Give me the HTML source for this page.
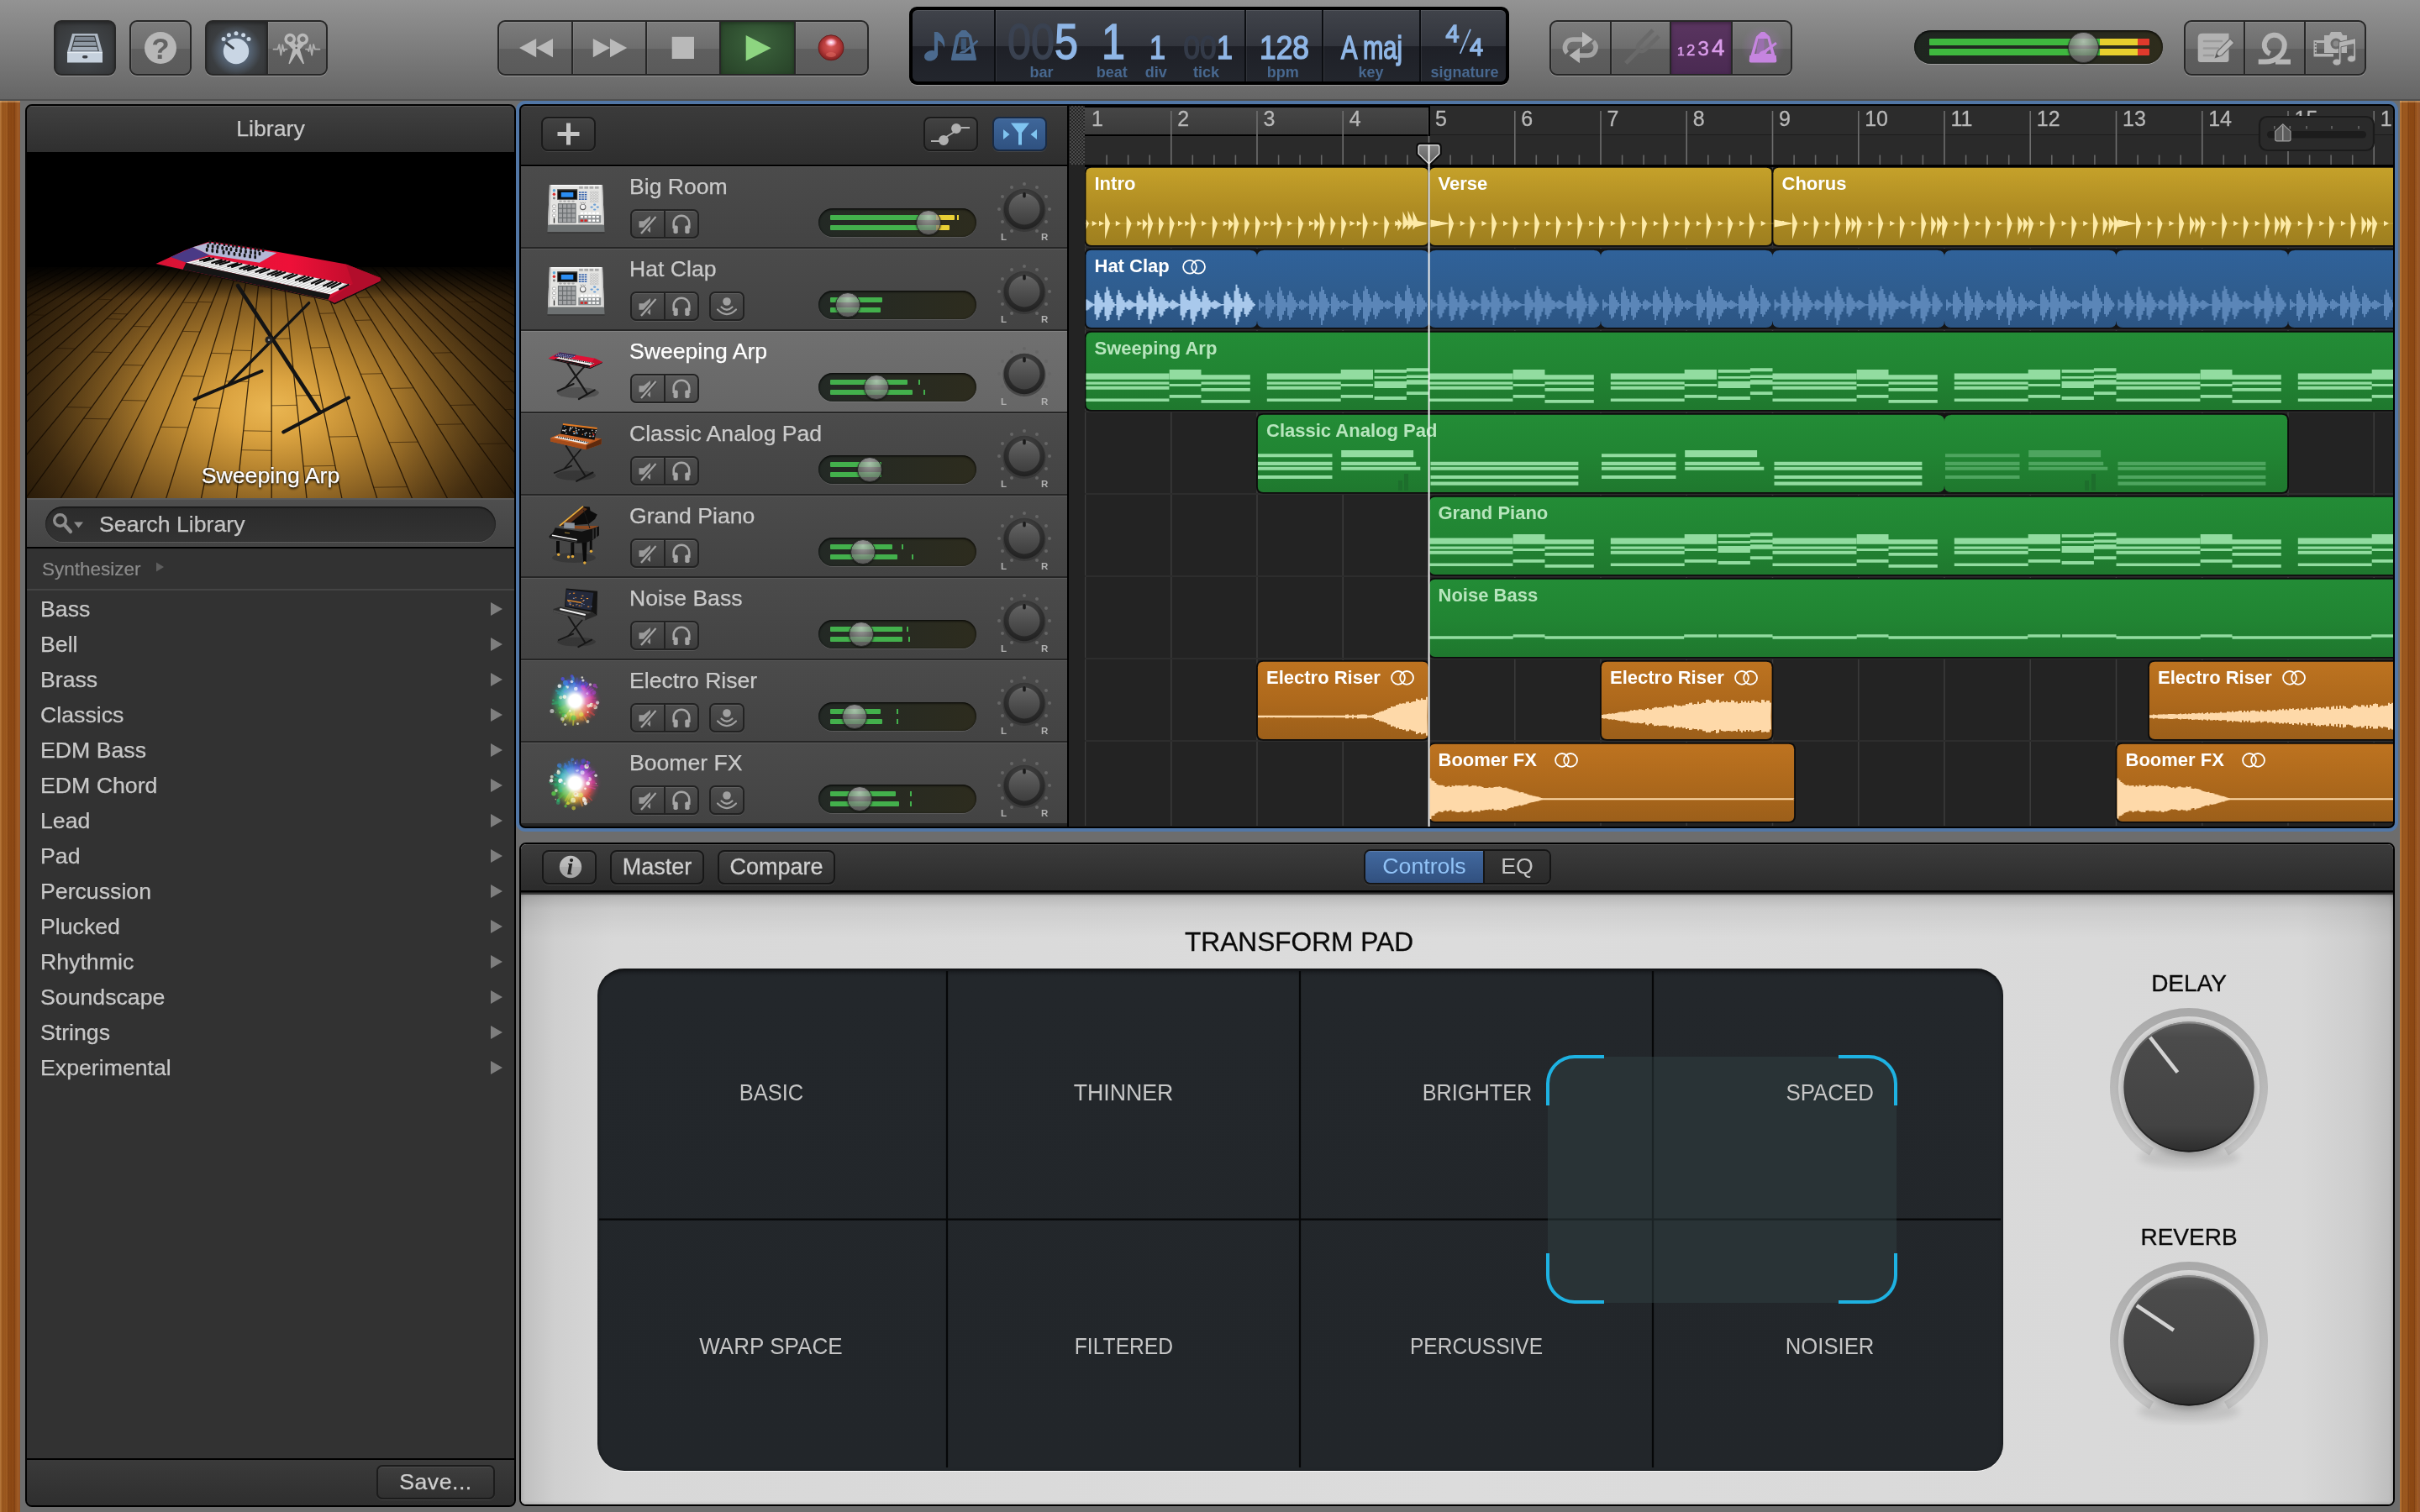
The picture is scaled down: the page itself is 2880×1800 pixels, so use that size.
<!DOCTYPE html>
<html><head><meta charset="utf-8"><title>GarageBand</title>
<style>

*{box-sizing:border-box;margin:0;padding:0}
html,body{width:2880px;height:1800px;overflow:hidden;background:#6d6d6d;font-family:"Liberation Sans",sans-serif;}
.abs{position:absolute}
#root{position:relative;width:2880px;height:1800px;overflow:hidden;background:#6d6d6d;will-change:transform;transform:translateZ(0)}
.wood{position:absolute;top:120px;width:24px;height:1680px;
 background:
  repeating-linear-gradient(90deg,rgba(255,190,110,.08) 0 1px,rgba(0,0,0,0) 1px 3px,rgba(50,15,0,.16) 3px 4px,rgba(0,0,0,0) 4px 7px),
  linear-gradient(90deg,#b07238 0,#a05c20 12%,#93501a 40%,#86420f 62%,#9a5620 85%,#96562a 100%);box-shadow:inset 0 2px 0 rgba(255,220,170,.35)}


#tb{position:absolute;left:0;top:0;width:2880px;height:120px;background:linear-gradient(#939393 0,#8a8a8a 20%,#6a6a6a 90%,#666 100%);border-bottom:2px solid #505050}
.bg{position:absolute;top:24px;height:66px;border:2px solid #272727;border-radius:9px;overflow:hidden;box-shadow:0 1px 0 rgba(255,255,255,.28);display:flex;background:#272727}
.bg>i{display:block;height:100%;margin-right:2px;background:linear-gradient(#7c7c7c 0,#6d6d6d 51%,#5f5f5f 52%,#5a5a5a 100%);box-shadow:inset 0 1px 0 rgba(255,255,255,.12),inset 1px 0 0 rgba(255,255,255,.06)}
.bg>i:last-child{margin-right:0}
.bg>i.on{background:radial-gradient(ellipse at 50% 55%,#464c52 0,#3c3f42 55%,#343536 100%);box-shadow:inset 0 2px 4px rgba(0,0,0,.35)}
.bg>i.play{background:radial-gradient(ellipse at 50% 40%,#3d643d 0,#315232 50%,#274127 100%);box-shadow:inset 0 2px 4px rgba(0,0,0,.3)}
.bg>i.purple{background:linear-gradient(#5a3560,#4a2a52);box-shadow:inset 0 2px 4px rgba(0,0,0,.3)}
#lcd{position:absolute;left:1082px;top:8px;width:714px;height:93px;border-radius:9px;background:#000;box-shadow:0 1px 0 rgba(255,255,255,.3)}
#lcd .in{position:absolute;left:4px;top:4px;right:4px;bottom:4px;border-radius:6px;overflow:hidden;background:linear-gradient(#40434a 0,#32353d 50%,#1e2027 51%,#23262d 100%);box-shadow:inset 0 1px 0 rgba(255,255,255,.1)}
#lcd .dv{position:absolute;top:0;bottom:0;width:2px;background:#0c0e12;box-shadow:1px 0 0 rgba(255,255,255,.07)}
.lcdn{position:absolute;color:#8fb6e6;font-family:"Liberation Sans",sans-serif;white-space:nowrap;transform-origin:0 0;line-height:1}
.lcdd{color:#2d3542}
.lcdl{position:absolute;color:#48688f;font:bold 20px "Liberation Sans",sans-serif;white-space:nowrap;line-height:1;top:73px}
#mv{position:absolute;left:2278px;top:36px;width:296px;height:40px;border-radius:20px;background:linear-gradient(90deg,#1f2520,#232822 45%,#2e2c1c);box-shadow:0 1px 0 rgba(255,255,255,.3),inset 0 1px 3px #000}
#mv b{position:absolute;left:18px;height:7.6px;display:block;background:linear-gradient(90deg,#3fb83f 0,#3fb83f 203px,#e8cf2e 203px,#e8cf2e 248px,#e03a2c 248px,#e03a2c 100%);width:262px;border-radius:1px}
#mv s{position:absolute;left:183px;top:2px;width:37px;height:37px;border-radius:50%;background:radial-gradient(circle at 50% 30%,rgba(190,190,190,.85),rgba(120,120,120,.8) 60%,rgba(90,90,90,.85));border:1px solid #333;box-shadow:0 1px 2px rgba(0,0,0,.6)}


#lib{position:absolute;left:30px;top:124px;width:584px;height:1670px;background:#323232;border:2px solid #000;border-radius:8px;overflow:hidden}
#lib .hd{position:absolute;left:0;top:0;width:100%;height:55px;background:linear-gradient(#404040,#2f2f2f);box-shadow:inset 0 1px 0 rgba(255,255,255,.12);color:#c9c9c9;font-size:26.7px;line-height:55px;text-align:center;-webkit-text-stroke:.25px #c9c9c9}
#lib .img{position:absolute;left:0;top:55px;width:580px;height:412px;background:#000}
#lib .cap{position:absolute;left:0;top:425px;width:580px;text-align:center;color:#fff;font-size:26.7px;line-height:30px;-webkit-text-stroke:.25px #fff;text-shadow:0 2px 3px rgba(0,0,0,.9),0 0 2px rgba(0,0,0,.8)}
#lib .sr{position:absolute;left:0;top:467px;width:100%;height:60px;background:linear-gradient(#4e4e4e,#444);border-top:2px solid #5a5a5a;border-bottom:2px solid #000}
#lib .sf{position:absolute;left:22px;top:8px;width:536px;height:42px;border-radius:21px;background:linear-gradient(#2b2b2b,#333);box-shadow:inset 0 1px 2px rgba(0,0,0,.8),0 1px 0 rgba(255,255,255,.12);color:#c4c4c4;font-size:26.7px;line-height:43px;padding-left:64px;-webkit-text-stroke:.25px #c4c4c4}
#lib .bc{position:absolute;left:0;top:527px;width:100%;height:50px;background:#323232;border-bottom:2px solid #444;color:#8c8c8c;-webkit-text-stroke:.2px #8c8c8c;font-size:22.5px;line-height:50px;padding-left:18px}
#lib .ls{position:absolute;left:0;top:578px;width:100%}
#lib .ls div{height:42px;line-height:43px;font-size:26.7px;color:#c8c8c8;padding-left:16px;position:relative;-webkit-text-stroke:.25px #c8c8c8}
#lib .ls div:after{content:"";position:absolute;left:552px;top:12.5px;border-left:14px solid #7e7e7e;border-top:8px solid transparent;border-bottom:8px solid transparent}
#lib .ft{position:absolute;left:0;top:1610px;width:100%;height:58px;background:linear-gradient(#3a3a3a,#2e2e2e);border-top:2px solid #000}
#lib .sv{position:absolute;left:416px;top:6px;width:141px;height:41px;border:2px solid #1c1c1c;border-radius:7px;background:linear-gradient(#3e3e3e,#303030);box-shadow:0 1px 0 rgba(255,255,255,.1),inset 0 1px 0 rgba(255,255,255,.08);color:#cfcfcf;font-size:26.7px;line-height:37px;text-align:center;letter-spacing:.5px;-webkit-text-stroke:.25px #cfcfcf}


#trk{position:absolute;left:614px;top:120px;width:2240px;height:870px;background:#000;border:4px solid #5277a6;border-radius:11px;overflow:hidden}
#trk .in{position:absolute;left:2px;top:2px;width:2228px;height:858px;background:#232323;border-radius:5px;overflow:hidden}
#th{position:absolute;left:0;top:0;width:650px;height:72px;background:linear-gradient(#3b3b3b,#2e2e2e);border-bottom:2px solid #000;box-shadow:inset 0 1px 0 rgba(255,255,255,.1)}
.hb{position:absolute;top:13px;height:41px;border:2px solid #1a1a1a;border-radius:8px;background:linear-gradient(#424242,#303030);box-shadow:0 1px 0 rgba(255,255,255,.1),inset 0 1px 0 rgba(255,255,255,.08)}
.hb.blue{background:linear-gradient(#3f679a,#2f5180);border-color:#182a44}
.tr{position:absolute;left:0;width:650px;height:98px;background:linear-gradient(#4b4b4b,#434343);box-shadow:inset 0 1px 0 #595959;border-bottom:2px solid #262626}
.tr.sel{background:linear-gradient(#707070,#666);box-shadow:inset 0 1px 0 #828282}
.tr .nm{position:absolute;left:129px;top:9px;font-size:26.6px;line-height:30px;color:#cacaca;white-space:nowrap;-webkit-text-stroke:.25px #cacaca}
.tr.sel .nm{color:#fff;-webkit-text-stroke:.25px #fff}
.ms{position:absolute;top:50.5px;height:35px;border:2px solid #222;border-radius:7px;background:linear-gradient(#4d4d4d,#3d3d3d);box-shadow:0 1px 0 rgba(255,255,255,.1),inset 0 1px 0 rgba(255,255,255,.1)}
.tr.sel .ms{background:linear-gradient(#5a5a5a,#4a4a4a)}
.vs{position:absolute;left:354px;top:50px;width:188px;height:34px;border-radius:17px;background:linear-gradient(90deg,#232925,#2d2c1e);box-shadow:inset 0 1px 3px #000,0 1px 0 rgba(255,255,255,.12)}
.vs b{position:absolute;left:14px;height:6px;display:block;border-radius:1px}
.vs i{position:absolute;width:2px;height:6px;display:block}
.vs s{position:absolute;top:2px;width:30px;height:30px;border-radius:50%;background:radial-gradient(circle at 50% 25%,rgba(200,200,200,.75),rgba(130,130,130,.7) 55%,rgba(95,95,95,.8));border:1px solid #2a2a2a;box-shadow:0 1px 2px rgba(0,0,0,.6)}
.lr{position:absolute;top:78.5px;font:bold 11.5px "Liberation Sans",sans-serif;color:#b2b2b2;line-height:11px}
#dv{position:absolute;left:650px;top:0;width:21px;height:858px;background:#232323;border-left:2px solid #000}
#dv .ck{position:absolute;left:1px;top:0;width:19px;height:70px;background:repeating-conic-gradient(#4a4a4a 0 25%,#262626 0 50%) 0 0/4px 4px}


#sc{position:absolute;left:618px;top:1003px;width:2232px;height:790px;background:#dbdbdb;border:2px solid #000;border-radius:8px;overflow:hidden}
#sc .hd{position:absolute;left:0;top:0;width:100%;height:57px;background:linear-gradient(#3c3c3c,#2b2b2b);border-bottom:2px solid #000;box-shadow:inset 0 1px 0 rgba(255,255,255,.12),0 1px 0 #1c1c1c,0 3px 0 #3a3a3a}
#sc .body{position:absolute;left:0;top:57px;width:100%;height:732px;background:linear-gradient(rgba(0,0,0,.34) 0,rgba(0,0,0,.15) 6px,rgba(0,0,0,.06) 20px,rgba(0,0,0,0) 55px),linear-gradient(90deg,#bebebe 0,#cfcfcf 40px,#d8d8d8 110px,#dcdcdc 50%,#d8d8d8 calc(100% - 110px),#cdcdcd calc(100% - 40px),#bdbdbd 100%);box-shadow:inset 0 -3px 5px rgba(0,0,0,.22)}
.sb{position:absolute;top:7px;height:41px;border:2px solid #171717;border-radius:8px;background:linear-gradient(#404040,#2f2f2f);box-shadow:0 1px 0 rgba(255,255,255,.1),inset 0 1px 0 rgba(255,255,255,.08);color:#d0d0d0;font-size:27px;line-height:37px;text-align:center;-webkit-text-stroke:.3px #d0d0d0}
#seg{position:absolute;left:1003px;top:6px;width:223px;height:42px;border:2px solid #151515;border-radius:8px;overflow:hidden;box-shadow:0 1px 0 rgba(255,255,255,.1);font-size:26.7px;line-height:37px;text-align:center}
#seg .a{position:absolute;left:0;top:0;width:142px;height:100%;background:linear-gradient(#42699f,#31507f);color:#91c3f7;border-right:2px solid #151515;box-shadow:inset 0 1px 0 rgba(255,255,255,.15)}
#seg .b{position:absolute;left:142px;top:0;width:77px;height:100%;background:linear-gradient(#353535,#2a2a2a);color:#c4c4c4}
#pad{position:absolute;left:91px;top:148px;width:1673px;height:598px;border-radius:32px;background:linear-gradient(#1d2024 0,#23272b 10px,#22262a 100%);box-shadow:0 1px 0 rgba(255,255,255,.7),inset 0 2px 5px rgba(0,0,0,.6)}

</style></head>
<body><div id="root">
<div class="wood" style="left:0"></div>
<div class="wood" style="left:2856px"></div>
<div id="tb">
<div class="bg" style="left:64px;width:74px"><i class="on" style="width:70px"></i></div><div class="bg" style="left:154px;width:74px"><i class="" style="width:70px"></i></div><div class="bg" style="left:244px;width:146px"><i class="on" style="width:71px"></i><i class="" style="width:69px"></i></div><div class="bg" style="left:592px;width:442px"><i class="" style="width:86px"></i><i class="" style="width:86px"></i><i class="" style="width:86px"></i><i class="play" style="width:87px"></i><i class="" style="width:85px"></i></div><div class="bg" style="left:1844px;width:289px"><i class="" style="width:70px"></i><i class="" style="width:69px"></i><i class="purple" style="width:71px"></i><i class="" style="width:69px"></i></div><div class="bg" style="left:2599px;width:217px"><i class="" style="width:69px"></i><i class="" style="width:70px"></i><i class="" style="width:70px"></i></div>
<div id="lcd"><div class="in">
<div class="dv" style="left:97px"></div><div class="dv" style="left:395px"></div><div class="dv" style="left:487px"></div><div class="dv" style="left:603px"></div>
</div></div>
<div id="mv"><b style="top:10.4px"></b><b style="top:22px"></b><s></s></div>
<svg class="abs" style="left:0;top:0" width="2880" height="120" viewBox="0 0 2880 120">
<g>
<path d="M86 40 L116 40 L122 62 L80 62 Z" fill="#aeb8c4"/>
<path d="M89 42.5 L113 42.5 L118 61 L84 61 Z" fill="#3f4347"/>
<path d="M89.8 44 H112.2 L113.4 48.5 H88.6 Z" fill="#7f8893"/>
<path d="M88.2 50 H113.8 L115 54.5 H87 Z" fill="#8f99a4"/>
<path d="M86.6 56 H115.4 L116.6 60.5 H85.4 Z" fill="#a3adb9"/>
<rect x="80" y="62" width="42" height="12.5" fill="#c6d1dd"/>
<rect x="80" y="62" width="42" height="1.2" fill="#e3eaf1"/>
<rect x="98" y="66" width="6.4" height="3.6" rx="1.8" fill="#3c4046"/>
</g><circle cx="191" cy="57" r="19" fill="#b7b7b7"/>
<text x="191" y="69.500" text-anchor="middle" style="font:bold 35px 'Liberation Sans',sans-serif" fill="#636363">?</text><g fill="#c9d6e4">
<circle cx="281" cy="60" r="30" fill="url(#kglow)"/>
<circle cx="281" cy="61" r="15.2"/>
<circle cx="266.1" cy="46.4" r="2.5"/><circle cx="272.4" cy="41.8" r="2.5"/><circle cx="281" cy="39.8" r="2.5"/><circle cx="289.6" cy="41.8" r="2.5"/><circle cx="296" cy="46.4" r="2.5"/>
<path d="M269.5 51.2 L277.4 57.4" stroke="#3c434b" stroke-width="3" stroke-linecap="round" fill="none"/>
</g><g fill="#b9b9b9">
<path d="M349.800 50.600 L356.800 58.500 L362 75.800 L360.600 76.200 L351.500 62 L343.600 53.400 Z"/><path d="M 355.6 50.6 L 348.6 58.5 L 343.4 75.8 L 344.8 76.2 L 353.9 62.0 L 361.8 53.4 Z"/>
<path d="M345.200 39.800 a6.800 6.800 0 1 0 .01 0 Z M345.200 43.200 a3.400 3.400 0 1 1 -.01 0 Z" fill-rule="evenodd"/>
<path d="M360.200 39.800 a6.800 6.800 0 1 0 .01 0 Z M360.200 43.200 a3.400 3.400 0 1 1 -.01 0 Z" fill-rule="evenodd"/>
<circle cx="352.700" cy="57" r="1.300" fill="#5e5e5e"/>
</g>
<g stroke="#adadad" stroke-width="1.800" fill="none" stroke-linecap="round" stroke-linejoin="round">
<path d="M325.500 58.700 H330.500 L332.300 53 L334.300 65.500 L336.300 53.500 L338 61 L339 58.700 H341.500"/>
<path d="M364 58.700 H366.400 L367.400 61 L369.100 53.500 L371.100 65.500 L373.100 53 L374.900 58.700 H380.500"/>
</g><g fill="#b9b9b9">
<path d="M618 57 L638.2 45.9 V68.2 Z"/><path d="M638 57 L658 45.9 V68.2 Z"/>
<path d="M726 57 L705.8 45.9 V68.2 Z"/><path d="M746.2 57 L726 45.9 V68.2 Z"/>
<rect x="799.7" y="43.8" width="26.3" height="26.2"/>
</g>
<path d="M887.7 42 L917.7 57.2 L887.7 72.4 Z" fill="#8dd580"/><defs><radialGradient id="rec" cx=".5" cy=".45" r=".55"><stop offset="0" stop-color="#d85a58"/><stop offset=".6" stop-color="#b83c3c"/><stop offset="1" stop-color="#7d1f1f"/></radialGradient>
<radialGradient id="kglow" cx=".5" cy=".5" r=".5"><stop offset=".45" stop-color="#6f88a6" stop-opacity=".55"/><stop offset="1" stop-color="#6f88a6" stop-opacity="0"/></radialGradient><radialGradient id="mglow" cx=".5" cy=".5" r=".5"><stop offset="0" stop-color="#b07ac8" stop-opacity=".45"/><stop offset="1" stop-color="#b07ac8" stop-opacity="0"/></radialGradient><radialGradient id="rech" cx=".5" cy=".5" r=".5"><stop offset="0" stop-color="#fff"/><stop offset=".5" stop-color="#fbd" stop-opacity=".8"/><stop offset="1" stop-color="#f99" stop-opacity="0"/></radialGradient></defs>
<circle cx="989" cy="56.8" r="15" fill="url(#rec)" stroke="#6a1c1c" stroke-width="1"/>
<ellipse cx="989" cy="50.5" rx="7.5" ry="5.5" fill="url(#rech)"/>
<ellipse cx="989" cy="65" rx="6" ry="3" fill="#e06a60" opacity=".55"/><g fill="#4b6a8e">
<ellipse cx="1107.900" cy="66.300" rx="8.200" ry="6" transform="rotate(-18 1107.900 66.300)"/>
<rect x="1111.900" y="38" width="4.200" height="28"/>
<path d="M1116 38.200 C1121 40.500 1125.500 48 1123.800 57 C1122.500 52 1119.500 49 1116 48.200 Z"/>
<path d="M1144.500 36 H1149.500 L1156 42.400 L1162 70.500 Q1162.200 72.100 1160.500 72.100 H1133.500 Q1131.700 72.100 1131.900 70.500 L1137.500 42.400 Z M1141.600 44.200 L1137.500 63.800 H1156 L1152.800 44.200 Z" fill-rule="evenodd"/>
<rect x="1143.700" y="45.700" width="6.200" height="13.600" fill="#3e5876"/>
<path d="M1141.500 63.500 Q1143 60.500 1147.500 60.300 L1162.800 47.600 L1164.300 49.500 L1149 62.800 Q1147 63.800 1141.500 63.500 Z"/>
</g><g font-family="Liberation Sans" fill="#8fb6e6" stroke="#8fb6e6" stroke-width="1.5">
<text x="1199" y="70" font-size="58.5" textLength="56" lengthAdjust="spacingAndGlyphs" fill="#3a4251" stroke="#3a4251">00</text>
<text x="1255" y="70" font-size="58.5" textLength="28" lengthAdjust="spacingAndGlyphs">5</text>
<text x="1311" y="70" font-size="58.5" textLength="28" lengthAdjust="spacingAndGlyphs">1</text>
<text x="1368" y="70" font-size="39" textLength="19" lengthAdjust="spacingAndGlyphs">1</text>
<text x="1408.5" y="70" font-size="39" textLength="39" lengthAdjust="spacingAndGlyphs" fill="#343b49" stroke="#343b49">00</text>
<text x="1448" y="70" font-size="39" textLength="19" lengthAdjust="spacingAndGlyphs">1</text>
<text x="1499" y="70" font-size="39" textLength="59" lengthAdjust="spacingAndGlyphs">128</text>
<text x="1596" y="70" font-size="39" textLength="73" lengthAdjust="spacingAndGlyphs">A maj</text>
<text x="1720.5" y="49.6" font-size="30" textLength="16" lengthAdjust="spacingAndGlyphs">4</text>
<text x="1749" y="65.7" font-size="30" textLength="16" lengthAdjust="spacingAndGlyphs">4</text>
<path d="M1737.7 63.8 L1750 34.8" stroke-width="1.8" fill="none"/>
</g>
<g font-family="Liberation Sans" font-weight="bold" font-size="18" fill="#48688f">
<text x="1225.5" y="91.6">bar</text><text x="1304.8" y="91.6">beat</text><text x="1362.8" y="91.6">div</text><text x="1420" y="91.6">tick</text>
<text x="1507.7" y="91.6">bpm</text><text x="1616.5" y="91.6">key</text><text x="1702.6" y="91.6">signature</text>
</g><g fill="none" stroke="#b4b4b4" stroke-width="5.5" stroke-linejoin="round">
<path d="M1884 47 H1872 a9.5 9.5 0 0 0 -7 16" stroke="#a8a8a8"/>
<path d="M1877 66 H1890 a9.5 9.5 0 0 0 6 -16.5" stroke="#a2a2a2"/>
</g>
<path d="M1883 37.8 L1895.5 47 L1883 56.2 Z" fill="#b9b9b9"/>
<path d="M1880 56.8 L1867.5 66 L1880 75.2 Z" fill="#b4b4b4"/><g transform="translate(1952.500 57.500) rotate(45)" fill="none" stroke="#696969" stroke-width="4.600" stroke-linecap="butt">
<path d="M-5 -25.500 V-2 A5 5 0 0 0 5 -2 V-25.500"/><path d="M0 3 V25" stroke-width="5"/>
</g><g font-family="Liberation Sans" fill="#da9cea" stroke="#da9cea" stroke-width=".5">
<text x="1996" y="65.6" font-size="15.5">1</text><text x="2007" y="65.6" font-size="18.5">2</text><text x="2020.4" y="65.8" font-size="24">3</text><text x="2037" y="65.6" font-size="28">4</text></g><g fill="#c685e0">
<circle cx="2098" cy="56" r="26" fill="url(#mglow)"/>
<path d="M2090 43.5 L2096 38 H2100 L2106 43.5 L2112.500 66 H2083.500 Z M2092.500 46 L2088 64 H2108 L2103.500 46 Z" fill-rule="evenodd"/>
<path d="M2093 46 H2099.500 V64 H2090 Z" fill="#9a6fae"/>
<path d="M2082.200 66 H2113.800 L2114.300 72.500 Q2114.300 74.600 2112.300 74.600 H2083.700 Q2081.700 74.600 2081.700 72.500 Z"/>
<path d="M2093 64.500 L2113 50 L2114.800 52.300 L2098 65.500 Z"/>
<ellipse cx="2098" cy="63" rx="5" ry="2.500" transform="rotate(-25 2098 63)"/>
</g><g>
<path d="M2621 39.700 H2652.500 V70.900 Q2652.500 73.900 2649.500 73.900 H2618.700 Q2615.700 73.900 2615.700 70.900 V45 Q2615.700 39.700 2621 39.700 Z" fill="#b2b2b2"/>
<g stroke="#9a9a9a" stroke-width="2.600" stroke-linecap="round"><path d="M2623 49 H2644"/><path d="M2623 57.500 H2640"/><path d="M2623 66 H2634"/></g>
<path d="M2636.500 68.500 L2639 61 L2654 46 L2659 51 L2644 66 Z" fill="#b9b9b9" stroke="#6a6a6a" stroke-width="1.300"/>
<path d="M2636.500 68.500 L2638 64 L2641 67 Z" fill="#555"/>
</g><g fill="none" stroke="#b6b6b6" stroke-width="6" stroke-linecap="butt"><path d="M2687.700 73.600 H2696 C2708 73.600 2718.800 65 2718.800 53 A12 12 0 1 0 2695 55.800 C2695.800 59.300 2698 62.300 2701.500 64"/><path d="M2708 73.600 H2726"/></g><g fill="#b4b4b4">
<path d="M2753.500 48 H2770 V51 H2757 V64 H2777 V67.500 H2753.500 Z"/>
<g fill="#6a6a6a"><rect x="2754.800" y="50" width="1.800" height="2"/><rect x="2754.800" y="54" width="1.800" height="2"/><rect x="2754.800" y="58" width="1.800" height="2"/><rect x="2754.800" y="62" width="1.800" height="2"/></g>
<path d="M2766 42 H2772 L2774 38 H2786 L2788 42 H2793 V63 H2766 Z"/>
<circle cx="2780" cy="52" r="6.500" fill="#6c6c6c"/><circle cx="2780" cy="52" r="3.500" fill="#8a8a8a"/>
<path d="M2783.500 50 L2803.500 45.500 V70 a5 4 0 1 1 -2.600 -3.500 V52.500 L2786 55.800 V74 a5 4 0 1 1 -2.600 -3.500 Z" stroke="#6a6a6a" stroke-width="1"/>
</g>
</svg>
</div>
<div id="lib">
<div class="hd">Library</div>
<div class="img"><svg class="abs" style="left:0;top:0" width="580" height="412" viewBox="32 181 580 412">
<defs>
<radialGradient id="spot" gradientUnits="userSpaceOnUse" cx="323" cy="485" r="400" gradientTransform="translate(323 485) scale(1 .6) translate(-323 -485)">
<stop offset="0" stop-color="#eab652"/><stop offset=".14" stop-color="#dca441"/><stop offset=".3" stop-color="#b98630"/><stop offset=".48" stop-color="#8b6223"/><stop offset=".7" stop-color="#533814"/><stop offset="1" stop-color="#241707"/></radialGradient>
<linearGradient id="hz" x1="0" y1="314" x2="0" y2="356" gradientUnits="userSpaceOnUse"><stop offset="0" stop-color="#000"/><stop offset=".3" stop-color="#000" stop-opacity=".7"/><stop offset="1" stop-color="#000" stop-opacity="0"/></linearGradient>
<linearGradient id="sd" x1="32" x2="612" y1="0" y2="0" gradientUnits="userSpaceOnUse"><stop offset="0" stop-color="#000" stop-opacity=".3"/><stop offset=".25" stop-color="#000" stop-opacity="0"/><stop offset=".75" stop-color="#000" stop-opacity="0"/><stop offset="1" stop-color="#000" stop-opacity=".3"/></linearGradient>
<linearGradient id="red" x1="0" x2="1" y1="0" y2="0"><stop offset="0" stop-color="#d81335"/><stop offset=".6" stop-color="#ee1038"/><stop offset="1" stop-color="#b00c28"/></linearGradient>
<clipPath id="fc"><rect x="32" y="318" width="580" height="275"/></clipPath>
</defs>
<rect x="32" y="181" width="580" height="412" fill="#000"/>
<rect x="32" y="318" width="580" height="275" fill="url(#spot)"/>
<g clip-path="url(#fc)"><path d="M323.0 190.0 L-2228.6 600 M323.0 190.0 L-2186.1 600 M323.0 190.0 L-2143.5 600 M323.0 190.0 L-2101.0 600 M323.0 190.0 L-2058.5 600 M323.0 190.0 L-2015.9 600 M323.0 190.0 L-1973.4 600 M323.0 190.0 L-1930.9 600 M323.0 190.0 L-1888.3 600 M323.0 190.0 L-1845.8 600 M323.0 190.0 L-1803.3 600 M323.0 190.0 L-1760.8 600 M323.0 190.0 L-1718.2 600 M323.0 190.0 L-1675.7 600 M323.0 190.0 L-1633.2 600 M323.0 190.0 L-1590.6 600 M323.0 190.0 L-1548.1 600 M323.0 190.0 L-1505.6 600 M323.0 190.0 L-1463.0 600 M323.0 190.0 L-1420.5 600 M323.0 190.0 L-1378.0 600 M323.0 190.0 L-1335.5 600 M323.0 190.0 L-1292.9 600 M323.0 190.0 L-1250.4 600 M323.0 190.0 L-1207.9 600 M323.0 190.0 L-1165.3 600 M323.0 190.0 L-1122.8 600 M323.0 190.0 L-1080.3 600 M323.0 190.0 L-1037.8 600 M323.0 190.0 L-995.2 600 M323.0 190.0 L-952.7 600 M323.0 190.0 L-910.2 600 M323.0 190.0 L-867.6 600 M323.0 190.0 L-825.1 600 M323.0 190.0 L-782.6 600 M323.0 190.0 L-740.0 600 M323.0 190.0 L-697.5 600 M323.0 190.0 L-655.0 600 M323.0 190.0 L-612.5 600 M323.0 190.0 L-569.9 600 M323.0 190.0 L-527.4 600 M323.0 190.0 L-484.9 600 M323.0 190.0 L-442.3 600 M323.0 190.0 L-399.8 600 M323.0 190.0 L-357.3 600 M323.0 190.0 L-314.7 600 M323.0 190.0 L-272.2 600 M323.0 190.0 L-229.7 600 M323.0 190.0 L-187.2 600 M323.0 190.0 L-144.6 600 M323.0 190.0 L-102.1 600 M323.0 190.0 L-59.6 600 M323.0 190.0 L-17.0 600 M323.0 190.0 L25.5 600 M323.0 190.0 L68.0 600 M323.0 190.0 L110.6 600 M323.0 190.0 L153.1 600 M323.0 190.0 L195.6 600 M323.0 190.0 L238.1 600 M323.0 190.0 L280.7 600 M323.0 190.0 L323.2 600 M323.0 190.0 L365.7 600 M323.0 190.0 L408.3 600 M323.0 190.0 L450.8 600 M323.0 190.0 L493.3 600 M323.0 190.0 L535.9 600 M323.0 190.0 L578.4 600 M323.0 190.0 L620.9 600 M323.0 190.0 L663.4 600 M323.0 190.0 L706.0 600 M323.0 190.0 L748.5 600 M323.0 190.0 L791.0 600 M323.0 190.0 L833.6 600 M323.0 190.0 L876.1 600 M323.0 190.0 L918.6 600 M323.0 190.0 L961.2 600 M323.0 190.0 L1003.7 600 M323.0 190.0 L1046.2 600 M323.0 190.0 L1088.7 600 M323.0 190.0 L1131.3 600 M323.0 190.0 L1173.8 600 M323.0 190.0 L1216.3 600 M323.0 190.0 L1258.9 600 M323.0 190.0 L1301.4 600 M323.0 190.0 L1343.9 600 M323.0 190.0 L1386.5 600 M323.0 190.0 L1429.0 600 M323.0 190.0 L1471.5 600 M323.0 190.0 L1514.0 600 M323.0 190.0 L1556.6 600 M323.0 190.0 L1599.1 600 M323.0 190.0 L1641.6 600 M323.0 190.0 L1684.2 600 M323.0 190.0 L1726.7 600 M323.0 190.0 L1769.2 600 M323.0 190.0 L1811.7 600 M323.0 190.0 L1854.3 600 M323.0 190.0 L1896.8 600 M323.0 190.0 L1939.3 600 M323.0 190.0 L1981.9 600 M323.0 190.0 L2024.4 600 M323.0 190.0 L2066.9 600 M323.0 190.0 L2109.5 600 M323.0 190.0 L2152.0 600 M323.0 190.0 L2194.5 600 M323.0 190.0 L2237.0 600 M323.0 190.0 L2279.6 600 M323.0 190.0 L2322.1 600 M323.0 190.0 L2364.6 600 M323.0 190.0 L2407.2 600 M323.0 190.0 L2449.7 600 M323.0 190.0 L2492.2 600 M323.0 190.0 L2534.8 600 M323.0 190.0 L2577.3 600 M323.0 190.0 L2619.8 600 M323.0 190.0 L2662.3 600 M323.0 190.0 L2704.9 600 M323.0 190.0 L2747.4 600 M323.0 190.0 L2789.9 600 M323.0 190.0 L2832.5 600 M323.0 190.0 L2875.0 600" stroke="#1c0f02" stroke-width="1.3" fill="none" opacity=".85"/>
<path d="M-208.0 422.7 L-183.8 423.3 M-113.2 381.2 L-93.4 381.8 M-354.8 501.2 L-322.5 501.8 M-52.4 362.4 L-34.5 363.0 M-265.2 473.6 L-235.8 474.2 M-180.5 432.8 L-155.3 433.4 M-9.8 358.9 L7.7 359.5 M-222.4 466.8 L-193.7 467.4 M16.9 354.0 L33.9 354.6 M-160.6 449.1 L-133.7 449.7 M20.2 361.8 L38.0 362.4 M11.4 366.8 L29.7 367.4 M-103.2 446.9 L-76.6 447.5 M-263.4 543.4 L-226.8 544.0 M35.7 374.7 L54.8 375.3 M-1.4 398.6 L20.2 399.2 M-120.6 495.6 L-88.9 496.2 M-232.2 572.5 L-192.5 573.1 M-72.6 483.5 L-42.2 484.1 M-14.3 440.2 L11.7 440.8 M-161.4 579.3 L-121.0 579.9 M116.2 356.2 L133.5 356.8 M-88.8 551.0 L-51.3 551.6 M66.9 414.5 L90.2 415.1 M126.4 379.6 L146.1 380.2 M133.0 373.3 L152.0 373.9 M109.3 419.0 L133.0 419.6 M-4.4 540.9 L32.0 541.5 M158.5 388.4 L179.1 389.0 M78.7 484.6 L109.2 485.2 M99.3 498.3 L131.2 498.9 M145.7 434.4 L171.0 435.0 M144.9 476.5 L174.6 477.1 M217.2 360.1 L234.9 360.7 M235.3 359.3 L252.8 359.9 M217.1 394.4 L238.3 395.0 M191.1 508.3 L224.1 508.9 M216.2 447.6 L243.0 448.2 M251.4 420.4 L275.3 421.0 M231.2 485.5 L261.8 486.1 M268.4 453.8 L295.8 454.4 M276.0 416.9 L299.6 417.5 M287.3 535.7 L323.2 536.3 M289.7 512.8 L323.2 513.4 M323.1 403.6 L345.3 403.0 M323.1 482.9 L353.5 482.3 M352.3 471.0 L381.4 470.4 M361.0 555.0 L398.9 554.4 M391.6 520.1 L425.9 519.5 M369.6 414.1 L392.9 413.5 M444.6 580.2 L485.1 579.6 M380.1 373.3 L399.2 372.7 M429.1 445.3 L455.6 444.7 M462.9 526.7 L497.8 526.1 M422.4 381.5 L442.3 380.9 M464.4 462.4 L492.6 461.8 M425.4 354.4 L442.5 353.8 M519.4 505.4 L552.2 504.8 M569.0 528.5 L604.1 527.9 M535.6 482.5 L565.9 481.9 M626.2 555.1 L664.0 554.5 M514.2 420.3 L538.1 419.7 M623.7 511.9 L657.0 511.3 M601.0 487.6 L631.9 487.0 M628.3 484.2 L658.8 483.6 M597.5 454.5 L624.9 453.9 M730.1 546.6 L767.1 546.0 M758.8 571.7 L798.4 571.1 M657.7 458.8 L685.6 458.2 M714.5 504.4 L747.1 503.8 M551.7 359.6 L569.3 359.0 M759.2 513.4 L792.8 512.8 M773.8 500.3 L806.0 499.7 M894.4 583.3 L935.2 582.7 M871.3 542.3 L907.8 541.7 M670.6 413.3 L693.7 412.7 M734.0 437.6 L759.7 437.0 M846.8 505.5 L879.5 504.9 M606.0 350.4 L622.6 349.8 M791.9 455.8 L819.4 455.2 M687.8 385.3 L708.1 384.7 M665.0 373.1 L684.0 372.5 M656.5 359.1 L674.0 358.5 M992.0 529.4 L1027.2 528.8 M709.1 376.0 L728.4 375.4 M768.0 404.4 L790.2 403.8 M865.2 438.8 L891.0 438.2 M1116.4 554.1 L1154.2 553.5" stroke="#2a1703" stroke-width="1" fill="none" opacity=".6"/></g>
<rect x="32" y="318" width="580" height="275" fill="url(#sd)"/>
<rect x="32" y="316" width="580" height="60" fill="url(#hz)"/>
<!-- stand -->
<g stroke="#141414" stroke-linecap="round" fill="none">
<path d="M231.500 475.400 L311.600 441.800" stroke-width="3.800"/>
<path d="M337.300 514.300 L414.800 473.500" stroke-width="4.200"/>
<path d="M367.700 360.600 L272.500 457" stroke-width="3.400"/>
<path d="M283 340 L381 491" stroke-width="4.600"/>
</g>
<circle cx="320" cy="404.800" r="4.500" fill="#222"/><circle cx="320" cy="404.800" r="1.300" fill="#999"/>
<!-- keyboard -->
<path d="M185.500 315.500 L217.700 321.500 L390.600 358 L398.100 362.500 L452.600 336 L452.600 333 L398 359 L217.700 319 Z" fill="#0e0e0e"/>
<path d="M185.500 314 L202.900 306 L219.600 297.900 L249.300 287.400 L329.900 299.800 L411.700 314.600 L452.600 330.700 L452.600 334.500 L398.100 360.500 L390.600 356.800 L217.700 320.800 Z" fill="url(#red)"/>
<path d="M411.700 314.600 L452.600 330.700 L452.600 334.500 L398.100 360.500 L390.600 356.800 L420 338 Z" fill="#b20d2b"/>
<path d="M202.900 306 L229.500 294.200 L249.300 303.500 L222 312.800 Z" fill="#4a3a86"/>
<path d="M229.500 294.200 L249.300 288.600 L329.300 301 L308.800 312.800 L249.300 303.500 Z" fill="#b4b8d6"/>
<rect x="248.6" y="285.9" width="2.700" height="4.600" rx="1.200" fill="#131313"/><rect x="254.4" y="286.8" width="2.700" height="4.600" rx="1.200" fill="#131313"/><rect x="259.8" y="287.6" width="2.700" height="4.600" rx="1.200" fill="#131313"/><rect x="265.6" y="288.5" width="2.700" height="4.600" rx="1.200" fill="#131313"/><rect x="270.8" y="289.3" width="2.700" height="4.600" rx="1.200" fill="#131313"/><rect x="276.1" y="290.1" width="2.700" height="4.600" rx="1.200" fill="#131313"/><rect x="280.4" y="290.8" width="2.700" height="4.600" rx="1.200" fill="#131313"/><rect x="285.9" y="291.6" width="2.700" height="4.600" rx="1.200" fill="#131313"/><rect x="291.0" y="292.4" width="2.700" height="4.600" rx="1.200" fill="#131313"/><rect x="297.1" y="293.4" width="2.700" height="4.600" rx="1.200" fill="#131313"/><rect x="302.5" y="294.2" width="2.700" height="4.600" rx="1.200" fill="#131313"/><rect x="306.5" y="294.8" width="2.700" height="4.600" rx="1.200" fill="#131313"/><rect x="311.8" y="295.6" width="2.700" height="4.600" rx="1.200" fill="#131313"/><rect x="246.2" y="290.4" width="2.700" height="4.600" rx="1.200" fill="#131313"/><rect x="251.8" y="291.2" width="2.700" height="4.600" rx="1.200" fill="#131313"/><rect x="257.7" y="292.1" width="2.700" height="4.600" rx="1.200" fill="#131313"/><rect x="263.4" y="293.0" width="2.700" height="4.600" rx="1.200" fill="#131313"/><rect x="268.4" y="293.8" width="2.700" height="4.600" rx="1.200" fill="#131313"/><rect x="273.6" y="294.6" width="2.700" height="4.600" rx="1.200" fill="#131313"/><rect x="279.8" y="295.5" width="2.700" height="4.600" rx="1.200" fill="#131313"/><rect x="285.2" y="296.3" width="2.700" height="4.600" rx="1.200" fill="#131313"/><rect x="291.1" y="297.2" width="2.700" height="4.600" rx="1.200" fill="#131313"/><rect x="297.2" y="298.2" width="2.700" height="4.600" rx="1.200" fill="#131313"/><rect x="302.3" y="298.9" width="2.700" height="4.600" rx="1.200" fill="#131313"/><rect x="307.6" y="299.7" width="2.700" height="4.600" rx="1.200" fill="#131313"/><rect x="244.9" y="295.1" width="2.700" height="4.600" rx="1.200" fill="#131313"/><rect x="251.5" y="296.1" width="2.700" height="4.600" rx="1.200" fill="#131313"/><rect x="257.0" y="296.9" width="2.700" height="4.600" rx="1.200" fill="#131313"/><rect x="264.7" y="298.1" width="2.700" height="4.600" rx="1.200" fill="#131313"/><rect x="271.0" y="299.0" width="2.700" height="4.600" rx="1.200" fill="#131313"/><rect x="277.6" y="300.0" width="2.700" height="4.600" rx="1.200" fill="#131313"/><rect x="283.9" y="300.9" width="2.700" height="4.600" rx="1.200" fill="#131313"/><rect x="289.8" y="301.8" width="2.700" height="4.600" rx="1.200" fill="#131313"/><rect x="296.2" y="302.8" width="2.700" height="4.600" rx="1.200" fill="#131313"/><rect x="302.3" y="303.7" width="2.700" height="4.600" rx="1.200" fill="#131313"/>
<path d="M221.400 312.800 L246.900 306 L416.700 338.800 L393.100 350.600 Z" fill="#f4f4f4"/>
<path d="M251.6 306.9 L226.2 313.9 M256.3 307.8 L230.9 314.9 M261.1 308.7 L235.7 315.9 M265.8 309.6 L240.5 317.0 M270.5 310.6 L245.2 318.1 M275.2 311.5 L250.0 319.1 M279.9 312.4 L254.8 320.2 M284.6 313.3 L259.6 321.2 M289.4 314.2 L264.3 322.2 M294.1 315.1 L269.1 323.3 M298.8 316.0 L273.9 324.4 M303.5 316.9 L278.6 325.4 M308.2 317.8 L283.4 326.4 M312.9 318.8 L288.2 327.5 M317.6 319.7 L292.9 328.6 M322.4 320.6 L297.7 329.6 M327.1 321.5 L302.5 330.7 M331.8 322.4 L307.2 331.7 M336.5 323.3 L312.0 332.8 M341.2 324.2 L316.8 333.8 M345.9 325.1 L321.6 334.9 M350.7 326.0 L326.3 335.9 M355.4 327.0 L331.1 337.0 M360.1 327.9 L335.9 338.0 M364.8 328.8 L340.6 339.1 M369.5 329.7 L345.4 340.1 M374.2 330.6 L350.2 341.2 M379.0 331.5 L354.9 342.2 M383.7 332.4 L359.7 343.2 M388.4 333.3 L364.5 344.3 M393.1 334.2 L369.3 345.4 M397.8 335.2 L374.0 346.4 M402.5 336.1 L378.8 347.5 M407.3 337.0 L383.6 348.5 M412.0 337.9 L388.3 349.6" stroke="#9a9a9a" stroke-width=".6" fill="none"/>
<path d="M250.4 306.7 L237.2 310.3 M255.2 307.6 L241.9 311.3 M264.6 309.4 L251.4 313.2 M269.3 310.3 L256.2 314.2 M274.0 311.2 L260.9 315.2 M283.5 313.1 L270.4 317.2 M288.2 314.0 L275.2 318.1 M297.6 315.8 L284.6 320.1 M302.3 316.7 L289.4 321.1 M307.0 317.6 L294.1 322.1 M316.5 319.4 L303.6 324.0 M321.2 320.4 L308.4 325.0 M330.6 322.2 L317.8 327.0 M335.3 323.1 L322.6 328.0 M340.1 324.0 L327.3 329.0 M349.5 325.8 L336.8 330.9 M354.2 326.7 L341.6 331.9 M363.6 328.6 L351.1 333.9 M368.4 329.5 L355.8 334.9 M373.1 330.4 L360.5 335.8 M382.5 332.2 L370.0 337.8 M387.2 333.1 L374.8 338.8 M396.7 334.9 L384.3 340.8 M401.4 335.8 L389.0 341.7 M406.1 336.8 L393.8 342.7 M415.5 338.6 L403.2 344.7" stroke="#0c0c0c" stroke-width="2.200" fill="none"/>
<path d="M217.700 320.800 L221.400 312.800 L393.100 350.600 L390.600 356.800 Z" fill="#151515"/>
</svg></div>
<div class="cap">Sweeping Arp</div>
<div class="sr"><div class="sf">Search Library</div>
<svg class="abs" style="left:30px;top:14px" width="40" height="32" viewBox="0 0 40 32"><circle cx="9.500" cy="10.500" r="6.800" fill="none" stroke="#8d8d8d" stroke-width="3.400"/><path d="M14.500 15.500 L22 24" stroke="#8d8d8d" stroke-width="4.200" stroke-linecap="round"/><path d="M26 12.500 H37 L31.500 19.500 Z" fill="#8d8d8d"/></svg>
</div>
<div class="bc">Synthesizer<svg class="abs" style="left:153px;top:15px" width="12" height="14"><path d="M1 1.500 L10 7 L1 12.500 Z" fill="#5e5e5e"/></svg></div>
<div class="ls"><div>Bass</div><div>Bell</div><div>Brass</div><div>Classics</div><div>EDM Bass</div><div>EDM Chord</div><div>Lead</div><div>Pad</div><div>Percussion</div><div>Plucked</div><div>Rhythmic</div><div>Soundscape</div><div>Strings</div><div>Experimental</div></div>
<div class="ft"><div class="sv">Save...</div></div>
</div>
<div id="trk"><div class="in">
<svg width="0" height="0" style="position:absolute"><defs>
<radialGradient id="pk1" cx=".5" cy=".3" r=".8"><stop offset="0" stop-color="#4a4a4a"/><stop offset=".6" stop-color="#2c2c2c"/><stop offset="1" stop-color="#1c1c1c"/></radialGradient>
<linearGradient id="pk2" x1="0" x2="0" y1="0" y2="1"><stop offset="0" stop-color="#6e6e6e"/><stop offset=".12" stop-color="#5e5e5e"/><stop offset=".6" stop-color="#4c4c4c"/><stop offset="1" stop-color="#3e3e3e"/></linearGradient>
<radialGradient id="spk" cx=".5" cy=".5" r=".5"><stop offset="0" stop-color="#fff"/><stop offset=".36" stop-color="#fff"/><stop offset=".62" stop-color="#fff" stop-opacity=".4"/><stop offset="1" stop-color="#fff" stop-opacity="0"/></radialGradient><filter id="sblur" x="-60%" y="-60%" width="220%" height="220%"><feGaussianBlur stdDeviation="3.5"/></filter>
</defs></svg>
<div id="th">
<div class="hb" style="left:24px;width:65px"></div>
<div class="hb" style="left:479px;width:65px"></div>
<div class="hb blue" style="left:561px;width:65px"></div>
<svg class="abs" style="left:0;top:0" width="650" height="70" viewBox="0 0 650 70">
<path d="M43.500 33.500 H69.500 M56.500 20.500 V46.500" stroke="#c4c4c4" stroke-width="5"/>
<g stroke="#b0b0b0" stroke-width="1.800" fill="#b0b0b0"><path d="M488 42 H498 M498 42 L524 26 M524 26 H534" fill="none"/><circle cx="503" cy="41" r="5"/><circle cx="518" cy="27" r="5"/></g>
<g fill="#7fc4f0"><path d="M583 20.500 H605 L596 32 V46.500 H592 V32 Z"/><path d="M574 28 L581.500 34 L574 40 Z"/><path d="M614 28 L606.500 34 L614 40 Z"/></g>
</svg></div>
<div class="tr" style="top:72px">
<div class="nm">Big Room</div>
<div class="ms" style="left:130px;width:82px"><div class="abs" style="left:38px;top:0;width:2px;height:100%;background:#222"></div></div>
<div class="vs"><b style="top:8px;width:148px;background:linear-gradient(90deg,#43b04c 0,#43b04c 126px,#e8cf35 126px,#e8cf35 100%)"></b><b style="top:20px;width:142px;background:linear-gradient(90deg,#43b04c 0,#43b04c 126px,#e8cf35 126px,#e8cf35 100%)"></b><i style="left:165px;top:8px;background:#e8cf35"></i><s style="left:116.0px"></s></div>
<div class="lr" style="left:571px">L</div><div class="lr" style="left:619px">R</div>
<svg class="abs" style="left:0;top:0" width="650" height="98" viewBox="0 0 650 98"><g transform="translate(150.5 69)"><path d="M-10 -3.800 H-4.500 L3.500 -10 V10 L-4.500 3.800 H-10 Z" fill="#9a9a9a"/><path d="M-7 10.800 L9.500 -8.800" stroke="#454545" stroke-width="5.500"/><path d="M-7.500 11 L10 -9" stroke="#a4a4a4" stroke-width="2.300"/></g><g transform="translate(191 69)" fill="none" stroke="#a6a6a6"><path d="M-9.300 5 V-1 A9.300 9.300 0 0 1 9.300 -1 V5" stroke-width="2.600"/><rect x="-9.500" y="1.500" width="5.200" height="9.500" rx="1.800" fill="#a6a6a6" stroke="none"/><rect x="4.300" y="1.500" width="5.200" height="9.500" rx="1.800" fill="#a6a6a6" stroke="none"/></g><g transform="translate(599 51)"><g>
<circle cx="-15.0" cy="26.0" r="2" fill="#666"/><circle cx="-26.0" cy="15.0" r="2" fill="#666"/><circle cx="-30.0" cy="-0.0" r="2" fill="#666"/><circle cx="-26.0" cy="-15.0" r="2" fill="#666"/><circle cx="-15.0" cy="-26.0" r="2" fill="#666"/><circle cx="0.0" cy="-30.0" r="2" fill="#666"/><circle cx="15.0" cy="-26.0" r="2" fill="#666"/><circle cx="26.0" cy="-15.0" r="2" fill="#666"/><circle cx="30.0" cy="-0.0" r="2" fill="#666"/><circle cx="26.0" cy="15.0" r="2" fill="#666"/><circle cx="15.0" cy="26.0" r="2" fill="#666"/>
<circle cx="0" cy="1.500" r="25.500" fill="#2e2e2e" opacity=".55"/>
<circle cx="0" cy="0" r="24.200" fill="url(#pk1)"/>
<circle cx="0" cy="0" r="18.500" fill="url(#pk2)"/>
<rect x="-1.800" y="-20" width="3.600" height="6.500" rx="1.700" fill="#1b1b1b"/>
</g></g><g transform="translate(-620 -198)"><path d="M652 267.400 L719 267.400 L719.600 276.300 L651.400 276.300 Z" fill="#6d7172"/><path d="M651.400 276.300 H719.600 V277.800 H651.400 Z" fill="#2c2c2c" opacity=".6"/><path d="M654 220 L717 220 L719 267.400 L652 267.400 Z" fill="#e4e4e2"/><path d="M654 220 L717 220 L717.100 221.500 L653.900 221.500 Z" fill="#fafafa"/><path d="M654 220 L655.800 220 L654 267.400 L652 267.400 Z" fill="#b9b9b9"/><path d="M717 220 L719 267.400 L717.300 267.400 L715.600 220 Z" fill="#c4c4c4"/><rect x="663.200" y="225.200" width="24" height="12.600" fill="#3a3a38"/><rect x="664.200" y="226.800" width="22" height="10" fill="#0d0d0d"/><rect x="667.800" y="228.900" width="14.500" height="5.800" fill="#2b8df2"/><rect x="689.2" y="221.900" width="4.600" height="2.800" fill="#a9a9a9"/><rect x="695.4" y="221.900" width="4.600" height="2.800" fill="#a9a9a9"/><rect x="701.6" y="221.900" width="4.600" height="2.800" fill="#a9a9a9"/><rect x="708" y="221.900" width="4.600" height="2.800" fill="#a9a9a9"/><circle cx="659.400" cy="226.800" r="1.700" fill="#58a8d8"/><circle cx="659.400" cy="231.200" r="1.700" fill="#d83030"/><circle cx="659.400" cy="236" r="1.400" fill="#777"/><rect x="657.500" y="244" width="4" height="3" rx="1.200" fill="#fff" stroke="#888" stroke-width=".6"/><rect x="657.500" y="249.5" width="4" height="3" rx="1.200" fill="#fff" stroke="#888" stroke-width=".6"/><rect x="657.500" y="255" width="4" height="3" rx="1.200" fill="#fff" stroke="#888" stroke-width=".6"/><rect x="658.800" y="259.500" width="1.400" height="6" fill="#333"/><ellipse cx="667" cy="239.600" rx="1.900" ry="1.100" fill="#aaa"/><ellipse cx="672" cy="239.600" rx="1.900" ry="1.100" fill="#aaa"/><ellipse cx="677" cy="239.600" rx="1.900" ry="1.100" fill="#aaa"/><ellipse cx="682" cy="239.600" rx="1.900" ry="1.100" fill="#aaa"/><rect x="663.900" y="242.100" width="21.700" height="23.300" fill="#686c6e"/><rect x="664.9" y="243.2" width="4.100" height="4.400" fill="#a2a4a6"/><rect x="670.1" y="243.2" width="4.100" height="4.400" fill="#a2a4a6"/><rect x="675.3" y="243.2" width="4.100" height="4.400" fill="#a2a4a6"/><rect x="680.5" y="243.2" width="4.100" height="4.400" fill="#a2a4a6"/><rect x="664.9" y="248.8" width="4.100" height="4.400" fill="#a2a4a6"/><rect x="670.1" y="248.8" width="4.100" height="4.400" fill="#a2a4a6"/><rect x="675.3" y="248.8" width="4.100" height="4.400" fill="#a2a4a6"/><rect x="680.5" y="248.8" width="4.100" height="4.400" fill="#a2a4a6"/><rect x="664.9" y="254.4" width="4.100" height="4.400" fill="#a2a4a6"/><rect x="670.1" y="254.4" width="4.100" height="4.400" fill="#a2a4a6"/><rect x="675.3" y="254.4" width="4.100" height="4.400" fill="#a2a4a6"/><rect x="680.5" y="254.4" width="4.100" height="4.400" fill="#a2a4a6"/><rect x="664.9" y="260.0" width="4.100" height="4.400" fill="#a2a4a6"/><rect x="670.1" y="260.0" width="4.100" height="4.400" fill="#a2a4a6"/><rect x="675.3" y="260.0" width="4.100" height="4.400" fill="#a2a4a6"/><rect x="680.5" y="260.0" width="4.100" height="4.400" fill="#a2a4a6"/><rect x="688.9" y="228.3" width="2.600" height="1.500" fill="#2c5cab"/><rect x="692.3" y="228.3" width="2.600" height="1.500" fill="#2c5cab"/><rect x="695.7" y="228.3" width="2.600" height="1.500" fill="#2c5cab"/><rect x="688.9" y="231.0" width="2.600" height="1.500" fill="#2c5cab"/><rect x="692.3" y="231.0" width="2.600" height="1.500" fill="#2c5cab"/><rect x="695.7" y="231.0" width="2.600" height="1.500" fill="#2c5cab"/><rect x="688.9" y="233.7" width="2.600" height="1.500" fill="#2c5cab"/><rect x="692.3" y="233.7" width="2.600" height="1.500" fill="#2c5cab"/><rect x="695.7" y="233.7" width="2.600" height="1.500" fill="#2c5cab"/><rect x="688.9" y="236.4" width="2.600" height="1.500" fill="#2c5cab"/><rect x="692.3" y="236.4" width="2.600" height="1.500" fill="#2c5cab"/><rect x="695.7" y="236.4" width="2.600" height="1.500" fill="#2c5cab"/><rect x="702.4" y="228.0" width="2.700" height="1.500" rx=".7" fill="#fff" stroke="#999" stroke-width=".5"/><rect x="705.9" y="228.0" width="2.700" height="1.500" rx=".7" fill="#fff" stroke="#999" stroke-width=".5"/><rect x="709.4" y="228.0" width="2.700" height="1.500" rx=".7" fill="#fff" stroke="#999" stroke-width=".5"/><rect x="702.4" y="230.8" width="2.700" height="1.500" rx=".7" fill="#fff" stroke="#999" stroke-width=".5"/><rect x="705.9" y="230.8" width="2.700" height="1.500" rx=".7" fill="#fff" stroke="#999" stroke-width=".5"/><rect x="709.4" y="230.8" width="2.700" height="1.500" rx=".7" fill="#fff" stroke="#999" stroke-width=".5"/><rect x="702.4" y="233.6" width="2.700" height="1.500" rx=".7" fill="#fff" stroke="#999" stroke-width=".5"/><rect x="705.9" y="233.6" width="2.700" height="1.500" rx=".7" fill="#fff" stroke="#999" stroke-width=".5"/><rect x="709.4" y="233.6" width="2.700" height="1.500" rx=".7" fill="#fff" stroke="#999" stroke-width=".5"/><rect x="702.4" y="236.4" width="2.700" height="1.500" rx=".7" fill="#fff" stroke="#999" stroke-width=".5"/><rect x="705.9" y="236.4" width="2.700" height="1.500" rx=".7" fill="#fff" stroke="#999" stroke-width=".5"/><rect x="709.4" y="236.4" width="2.700" height="1.500" rx=".7" fill="#fff" stroke="#999" stroke-width=".5"/><rect x="702.4" y="239.2" width="2.700" height="1.500" rx=".7" fill="#fff" stroke="#999" stroke-width=".5"/><rect x="705.9" y="239.2" width="2.700" height="1.500" rx=".7" fill="#fff" stroke="#999" stroke-width=".5"/><rect x="709.4" y="239.2" width="2.700" height="1.500" rx=".7" fill="#fff" stroke="#999" stroke-width=".5"/><circle cx="693.700" cy="246.600" r="3.700" fill="#555"/><circle cx="693.700" cy="246.200" r="2.700" fill="#f2f2f2"/><path d="M690.500 241 l1.500 1.300 l1.500 -1.300 M693.800 241 l1.500 1.300 l1.500 -1.300" stroke="#888" stroke-width=".9" fill="none"/><ellipse cx="707.7" cy="243.7" rx="1.700" ry="1.100" fill="#6a9fd6"/><ellipse cx="707.7" cy="249.5" rx="1.700" ry="1.100" fill="#6a9fd6"/><ellipse cx="704.1" cy="246.6" rx="1.700" ry="1.100" fill="#6a9fd6"/><ellipse cx="711.3" cy="246.6" rx="1.700" ry="1.100" fill="#6a9fd6"/><rect x="688.300" y="256.200" width="27" height="9.200" fill="#8b8f91"/><rect x="690.8" y="252.6" width="3.200" height="2.400" fill="#fff"/><rect x="695.5" y="252.6" width="3.200" height="2.400" fill="#fff"/><rect x="700.2" y="252.6" width="3.200" height="2.400" fill="#fff"/><rect x="704.9" y="252.6" width="3.200" height="2.400" fill="#fff"/><rect x="709.6" y="252.6" width="3.200" height="2.400" fill="#fff"/><rect x="690.8" y="257.0" width="3.200" height="2.400" fill="#fff"/><rect x="695.5" y="257.0" width="3.200" height="2.400" fill="#fff"/><rect x="700.2" y="257.0" width="3.200" height="2.400" fill="#fff"/><rect x="704.9" y="257.0" width="3.200" height="2.400" fill="#fff"/><rect x="709.6" y="257.0" width="3.200" height="2.400" fill="#fff"/><rect x="690.8" y="261.4" width="3.200" height="2.400" fill="#d42222"/><rect x="695.5" y="261.4" width="3.200" height="2.400" fill="#d42222"/><rect x="700.2" y="261.4" width="3.200" height="2.400" fill="#fff"/><rect x="704.9" y="261.4" width="3.200" height="2.400" fill="#fff"/><rect x="709.6" y="261.4" width="3.200" height="2.400" fill="#fff"/></g></svg>
</div><div class="tr" style="top:170px">
<div class="nm">Hat Clap</div>
<div class="ms" style="left:130px;width:82px"><div class="abs" style="left:38px;top:0;width:2px;height:100%;background:#222"></div></div><div class="ms" style="left:224px;width:42px"></div>
<div class="vs"><b style="top:8px;width:62px;background:#43b04c"></b><b style="top:20px;width:60px;background:#43b04c"></b><s style="left:19.7px"></s></div>
<div class="lr" style="left:571px">L</div><div class="lr" style="left:619px">R</div>
<svg class="abs" style="left:0;top:0" width="650" height="98" viewBox="0 0 650 98"><g transform="translate(150.5 69)"><path d="M-10 -3.800 H-4.500 L3.500 -10 V10 L-4.500 3.800 H-10 Z" fill="#9a9a9a"/><path d="M-7 10.800 L9.500 -8.800" stroke="#454545" stroke-width="5.500"/><path d="M-7.500 11 L10 -9" stroke="#a4a4a4" stroke-width="2.300"/></g><g transform="translate(191 69)" fill="none" stroke="#a6a6a6"><path d="M-9.300 5 V-1 A9.300 9.300 0 0 1 9.300 -1 V5" stroke-width="2.600"/><rect x="-9.500" y="1.500" width="5.200" height="9.500" rx="1.800" fill="#a6a6a6" stroke="none"/><rect x="4.300" y="1.500" width="5.200" height="9.500" rx="1.800" fill="#a6a6a6" stroke="none"/></g><g transform="translate(245 69)" fill="none" stroke="#a0a0a0" stroke-width="2.200" stroke-linecap="round"><circle cx="0" cy="-6" r="4.800" fill="#a0a0a0" stroke="none"/><path d="M-6.500 0.500 Q0 7 6.500 0.500"/><path d="M-11 3.500 Q0 14.500 11 3.500"/></g><g transform="translate(599 51)"><g>
<circle cx="-15.0" cy="26.0" r="2" fill="#666"/><circle cx="-26.0" cy="15.0" r="2" fill="#666"/><circle cx="-30.0" cy="-0.0" r="2" fill="#666"/><circle cx="-26.0" cy="-15.0" r="2" fill="#666"/><circle cx="-15.0" cy="-26.0" r="2" fill="#666"/><circle cx="0.0" cy="-30.0" r="2" fill="#666"/><circle cx="15.0" cy="-26.0" r="2" fill="#666"/><circle cx="26.0" cy="-15.0" r="2" fill="#666"/><circle cx="30.0" cy="-0.0" r="2" fill="#666"/><circle cx="26.0" cy="15.0" r="2" fill="#666"/><circle cx="15.0" cy="26.0" r="2" fill="#666"/>
<circle cx="0" cy="1.500" r="25.500" fill="#2e2e2e" opacity=".55"/>
<circle cx="0" cy="0" r="24.200" fill="url(#pk1)"/>
<circle cx="0" cy="0" r="18.500" fill="url(#pk2)"/>
<rect x="-1.800" y="-20" width="3.600" height="6.500" rx="1.700" fill="#1b1b1b"/>
</g></g><g transform="translate(-620 -198)"><path d="M652 267.400 L719 267.400 L719.600 276.300 L651.400 276.300 Z" fill="#6d7172"/><path d="M651.400 276.300 H719.600 V277.800 H651.400 Z" fill="#2c2c2c" opacity=".6"/><path d="M654 220 L717 220 L719 267.400 L652 267.400 Z" fill="#e4e4e2"/><path d="M654 220 L717 220 L717.100 221.500 L653.900 221.500 Z" fill="#fafafa"/><path d="M654 220 L655.800 220 L654 267.400 L652 267.400 Z" fill="#b9b9b9"/><path d="M717 220 L719 267.400 L717.300 267.400 L715.600 220 Z" fill="#c4c4c4"/><rect x="663.200" y="225.200" width="24" height="12.600" fill="#3a3a38"/><rect x="664.200" y="226.800" width="22" height="10" fill="#0d0d0d"/><rect x="667.800" y="228.900" width="14.500" height="5.800" fill="#2b8df2"/><rect x="689.2" y="221.900" width="4.600" height="2.800" fill="#a9a9a9"/><rect x="695.4" y="221.900" width="4.600" height="2.800" fill="#a9a9a9"/><rect x="701.6" y="221.900" width="4.600" height="2.800" fill="#a9a9a9"/><rect x="708" y="221.900" width="4.600" height="2.800" fill="#a9a9a9"/><circle cx="659.400" cy="226.800" r="1.700" fill="#58a8d8"/><circle cx="659.400" cy="231.200" r="1.700" fill="#d83030"/><circle cx="659.400" cy="236" r="1.400" fill="#777"/><rect x="657.500" y="244" width="4" height="3" rx="1.200" fill="#fff" stroke="#888" stroke-width=".6"/><rect x="657.500" y="249.5" width="4" height="3" rx="1.200" fill="#fff" stroke="#888" stroke-width=".6"/><rect x="657.500" y="255" width="4" height="3" rx="1.200" fill="#fff" stroke="#888" stroke-width=".6"/><rect x="658.800" y="259.500" width="1.400" height="6" fill="#333"/><ellipse cx="667" cy="239.600" rx="1.900" ry="1.100" fill="#aaa"/><ellipse cx="672" cy="239.600" rx="1.900" ry="1.100" fill="#aaa"/><ellipse cx="677" cy="239.600" rx="1.900" ry="1.100" fill="#aaa"/><ellipse cx="682" cy="239.600" rx="1.900" ry="1.100" fill="#aaa"/><rect x="663.900" y="242.100" width="21.700" height="23.300" fill="#686c6e"/><rect x="664.9" y="243.2" width="4.100" height="4.400" fill="#a2a4a6"/><rect x="670.1" y="243.2" width="4.100" height="4.400" fill="#a2a4a6"/><rect x="675.3" y="243.2" width="4.100" height="4.400" fill="#a2a4a6"/><rect x="680.5" y="243.2" width="4.100" height="4.400" fill="#a2a4a6"/><rect x="664.9" y="248.8" width="4.100" height="4.400" fill="#a2a4a6"/><rect x="670.1" y="248.8" width="4.100" height="4.400" fill="#a2a4a6"/><rect x="675.3" y="248.8" width="4.100" height="4.400" fill="#a2a4a6"/><rect x="680.5" y="248.8" width="4.100" height="4.400" fill="#a2a4a6"/><rect x="664.9" y="254.4" width="4.100" height="4.400" fill="#a2a4a6"/><rect x="670.1" y="254.4" width="4.100" height="4.400" fill="#a2a4a6"/><rect x="675.3" y="254.4" width="4.100" height="4.400" fill="#a2a4a6"/><rect x="680.5" y="254.4" width="4.100" height="4.400" fill="#a2a4a6"/><rect x="664.9" y="260.0" width="4.100" height="4.400" fill="#a2a4a6"/><rect x="670.1" y="260.0" width="4.100" height="4.400" fill="#a2a4a6"/><rect x="675.3" y="260.0" width="4.100" height="4.400" fill="#a2a4a6"/><rect x="680.5" y="260.0" width="4.100" height="4.400" fill="#a2a4a6"/><rect x="688.9" y="228.3" width="2.600" height="1.500" fill="#2c5cab"/><rect x="692.3" y="228.3" width="2.600" height="1.500" fill="#2c5cab"/><rect x="695.7" y="228.3" width="2.600" height="1.500" fill="#2c5cab"/><rect x="688.9" y="231.0" width="2.600" height="1.500" fill="#2c5cab"/><rect x="692.3" y="231.0" width="2.600" height="1.500" fill="#2c5cab"/><rect x="695.7" y="231.0" width="2.600" height="1.500" fill="#2c5cab"/><rect x="688.9" y="233.7" width="2.600" height="1.500" fill="#2c5cab"/><rect x="692.3" y="233.7" width="2.600" height="1.500" fill="#2c5cab"/><rect x="695.7" y="233.7" width="2.600" height="1.500" fill="#2c5cab"/><rect x="688.9" y="236.4" width="2.600" height="1.500" fill="#2c5cab"/><rect x="692.3" y="236.4" width="2.600" height="1.500" fill="#2c5cab"/><rect x="695.7" y="236.4" width="2.600" height="1.500" fill="#2c5cab"/><rect x="702.4" y="228.0" width="2.700" height="1.500" rx=".7" fill="#fff" stroke="#999" stroke-width=".5"/><rect x="705.9" y="228.0" width="2.700" height="1.500" rx=".7" fill="#fff" stroke="#999" stroke-width=".5"/><rect x="709.4" y="228.0" width="2.700" height="1.500" rx=".7" fill="#fff" stroke="#999" stroke-width=".5"/><rect x="702.4" y="230.8" width="2.700" height="1.500" rx=".7" fill="#fff" stroke="#999" stroke-width=".5"/><rect x="705.9" y="230.8" width="2.700" height="1.500" rx=".7" fill="#fff" stroke="#999" stroke-width=".5"/><rect x="709.4" y="230.8" width="2.700" height="1.500" rx=".7" fill="#fff" stroke="#999" stroke-width=".5"/><rect x="702.4" y="233.6" width="2.700" height="1.500" rx=".7" fill="#fff" stroke="#999" stroke-width=".5"/><rect x="705.9" y="233.6" width="2.700" height="1.500" rx=".7" fill="#fff" stroke="#999" stroke-width=".5"/><rect x="709.4" y="233.6" width="2.700" height="1.500" rx=".7" fill="#fff" stroke="#999" stroke-width=".5"/><rect x="702.4" y="236.4" width="2.700" height="1.500" rx=".7" fill="#fff" stroke="#999" stroke-width=".5"/><rect x="705.9" y="236.4" width="2.700" height="1.500" rx=".7" fill="#fff" stroke="#999" stroke-width=".5"/><rect x="709.4" y="236.4" width="2.700" height="1.500" rx=".7" fill="#fff" stroke="#999" stroke-width=".5"/><rect x="702.4" y="239.2" width="2.700" height="1.500" rx=".7" fill="#fff" stroke="#999" stroke-width=".5"/><rect x="705.9" y="239.2" width="2.700" height="1.500" rx=".7" fill="#fff" stroke="#999" stroke-width=".5"/><rect x="709.4" y="239.2" width="2.700" height="1.500" rx=".7" fill="#fff" stroke="#999" stroke-width=".5"/><circle cx="693.700" cy="246.600" r="3.700" fill="#555"/><circle cx="693.700" cy="246.200" r="2.700" fill="#f2f2f2"/><path d="M690.500 241 l1.500 1.300 l1.500 -1.300 M693.800 241 l1.500 1.300 l1.500 -1.300" stroke="#888" stroke-width=".9" fill="none"/><ellipse cx="707.7" cy="243.7" rx="1.700" ry="1.100" fill="#6a9fd6"/><ellipse cx="707.7" cy="249.5" rx="1.700" ry="1.100" fill="#6a9fd6"/><ellipse cx="704.1" cy="246.6" rx="1.700" ry="1.100" fill="#6a9fd6"/><ellipse cx="711.3" cy="246.6" rx="1.700" ry="1.100" fill="#6a9fd6"/><rect x="688.300" y="256.200" width="27" height="9.200" fill="#8b8f91"/><rect x="690.8" y="252.6" width="3.200" height="2.400" fill="#fff"/><rect x="695.5" y="252.6" width="3.200" height="2.400" fill="#fff"/><rect x="700.2" y="252.6" width="3.200" height="2.400" fill="#fff"/><rect x="704.9" y="252.6" width="3.200" height="2.400" fill="#fff"/><rect x="709.6" y="252.6" width="3.200" height="2.400" fill="#fff"/><rect x="690.8" y="257.0" width="3.200" height="2.400" fill="#fff"/><rect x="695.5" y="257.0" width="3.200" height="2.400" fill="#fff"/><rect x="700.2" y="257.0" width="3.200" height="2.400" fill="#fff"/><rect x="704.9" y="257.0" width="3.200" height="2.400" fill="#fff"/><rect x="709.6" y="257.0" width="3.200" height="2.400" fill="#fff"/><rect x="690.8" y="261.4" width="3.200" height="2.400" fill="#d42222"/><rect x="695.5" y="261.4" width="3.200" height="2.400" fill="#d42222"/><rect x="700.2" y="261.4" width="3.200" height="2.400" fill="#fff"/><rect x="704.9" y="261.4" width="3.200" height="2.400" fill="#fff"/><rect x="709.6" y="261.4" width="3.200" height="2.400" fill="#fff"/></g></svg>
</div><div class="tr sel" style="top:268px">
<div class="nm">Sweeping Arp</div>
<div class="ms" style="left:130px;width:82px"><div class="abs" style="left:38px;top:0;width:2px;height:100%;background:#222"></div></div>
<div class="vs"><b style="top:8px;width:92px;background:#43b04c"></b><b style="top:20px;width:98px;background:#43b04c"></b><i style="left:119px;top:8px;background:#43b04c"></i><i style="left:125px;top:20px;background:#43b04c"></i><s style="left:53.6px"></s></div>
<div class="lr" style="left:571px">L</div><div class="lr" style="left:619px">R</div>
<svg class="abs" style="left:0;top:0" width="650" height="98" viewBox="0 0 650 98"><g transform="translate(150.5 69)"><path d="M-10 -3.800 H-4.500 L3.500 -10 V10 L-4.500 3.800 H-10 Z" fill="#9a9a9a"/><path d="M-7 10.800 L9.500 -8.800" stroke="#454545" stroke-width="5.500"/><path d="M-7.500 11 L10 -9" stroke="#a4a4a4" stroke-width="2.300"/></g><g transform="translate(191 69)" fill="none" stroke="#a6a6a6"><path d="M-9.300 5 V-1 A9.300 9.300 0 0 1 9.300 -1 V5" stroke-width="2.600"/><rect x="-9.500" y="1.500" width="5.200" height="9.500" rx="1.800" fill="#a6a6a6" stroke="none"/><rect x="4.300" y="1.500" width="5.200" height="9.500" rx="1.800" fill="#a6a6a6" stroke="none"/></g><g transform="translate(599 51)"><g>
<circle cx="-15.0" cy="26.0" r="2" fill="#666"/><circle cx="-26.0" cy="15.0" r="2" fill="#666"/><circle cx="-30.0" cy="-0.0" r="2" fill="#666"/><circle cx="-26.0" cy="-15.0" r="2" fill="#666"/><circle cx="-15.0" cy="-26.0" r="2" fill="#666"/><circle cx="0.0" cy="-30.0" r="2" fill="#666"/><circle cx="15.0" cy="-26.0" r="2" fill="#666"/><circle cx="26.0" cy="-15.0" r="2" fill="#666"/><circle cx="30.0" cy="-0.0" r="2" fill="#666"/><circle cx="26.0" cy="15.0" r="2" fill="#666"/><circle cx="15.0" cy="26.0" r="2" fill="#666"/>
<circle cx="0" cy="1.500" r="25.500" fill="#2e2e2e" opacity=".55"/>
<circle cx="0" cy="0" r="24.200" fill="url(#pk1)"/>
<circle cx="0" cy="0" r="18.500" fill="url(#pk2)"/>
<rect x="-1.800" y="-20" width="3.600" height="6.500" rx="1.700" fill="#1b1b1b"/>
</g></g><g transform="translate(-620 -394)"><ellipse cx="687.800" cy="467.500" rx="25" ry="6.500" fill="#000" opacity=".22"/><g stroke="#171717" stroke-linecap="round" fill="none" stroke-width="2.2"><path d="M663.6 465.5 L682.7 457" stroke-width="2.0"/><path d="M695.4 436.5 L673.7 460.4" stroke-width="1.9"/><path d="M675.4 432.6 L699 469.1"/><path d="M688.9 475 L707.7 464.4"/></g><path d="M652.4 427.4 L660.2 429.3 L702.4 438.9 L717.0 432.1 L717.0 430.9 L702.4 437.7 L660.2 428.1 Z" fill="#111"/><path d="M652.4 426.4 L665.9 419.4 L707.5 426.4 L717.0 430.9 L702.4 437.7 L660.2 428.1 Z" fill="#e11236"/><path d="M707.5 426.4 L717.0 430.9 L702.4 437.7 L701.0 436.3 Z" fill="#c20f2c"/><path d="M658.5 424.5 L665.9 419.4 L686.0 422.5 L680.0 426.5 Z" fill="#39305e"/><path d="M664 421.500 L684 424.500 M662 423 L681 425.800" stroke="#9aa0d0" stroke-width="1" stroke-dasharray="1.500 1.200"/><path d="M661.4 426.4 L667.0 424.7 L707.5 432.3 L701.8 435.1 Z" fill="#f6f6f6"/><path d="M666.500 425.300 L706 432.700" stroke="#111" stroke-width="1.300" stroke-dasharray="1.400 .9"/><path d="M660.2 428.1 L661.4 426.4 L701.8 435.1 L702.4 437.7 Z" fill="#151515"/></g></svg>
</div><div class="tr" style="top:366px">
<div class="nm">Classic Analog Pad</div>
<div class="ms" style="left:130px;width:82px"><div class="abs" style="left:38px;top:0;width:2px;height:100%;background:#222"></div></div>
<div class="vs"><b style="top:8px;width:61px;background:#43b04c"></b><b style="top:20px;width:61px;background:#43b04c"></b><s style="left:45.5px"></s></div>
<div class="lr" style="left:571px">L</div><div class="lr" style="left:619px">R</div>
<svg class="abs" style="left:0;top:0" width="650" height="98" viewBox="0 0 650 98"><g transform="translate(150.5 69)"><path d="M-10 -3.800 H-4.500 L3.500 -10 V10 L-4.500 3.800 H-10 Z" fill="#9a9a9a"/><path d="M-7 10.800 L9.500 -8.800" stroke="#454545" stroke-width="5.500"/><path d="M-7.500 11 L10 -9" stroke="#a4a4a4" stroke-width="2.300"/></g><g transform="translate(191 69)" fill="none" stroke="#a6a6a6"><path d="M-9.300 5 V-1 A9.300 9.300 0 0 1 9.300 -1 V5" stroke-width="2.600"/><rect x="-9.500" y="1.500" width="5.200" height="9.500" rx="1.800" fill="#a6a6a6" stroke="none"/><rect x="4.300" y="1.500" width="5.200" height="9.500" rx="1.800" fill="#a6a6a6" stroke="none"/></g><g transform="translate(599 51)"><g>
<circle cx="-15.0" cy="26.0" r="2" fill="#666"/><circle cx="-26.0" cy="15.0" r="2" fill="#666"/><circle cx="-30.0" cy="-0.0" r="2" fill="#666"/><circle cx="-26.0" cy="-15.0" r="2" fill="#666"/><circle cx="-15.0" cy="-26.0" r="2" fill="#666"/><circle cx="0.0" cy="-30.0" r="2" fill="#666"/><circle cx="15.0" cy="-26.0" r="2" fill="#666"/><circle cx="26.0" cy="-15.0" r="2" fill="#666"/><circle cx="30.0" cy="-0.0" r="2" fill="#666"/><circle cx="26.0" cy="15.0" r="2" fill="#666"/><circle cx="15.0" cy="26.0" r="2" fill="#666"/>
<circle cx="0" cy="1.500" r="25.500" fill="#2e2e2e" opacity=".55"/>
<circle cx="0" cy="0" r="24.200" fill="url(#pk1)"/>
<circle cx="0" cy="0" r="18.500" fill="url(#pk2)"/>
<rect x="-1.800" y="-20" width="3.600" height="6.500" rx="1.700" fill="#1b1b1b"/>
</g></g><g transform="translate(-620 -492)"><ellipse cx="685" cy="566" rx="24" ry="6" fill="#000" opacity=".2"/><g stroke="#171717" stroke-linecap="round" fill="none" stroke-width="2"><path d="M659.7 563 L680.2 554.6" stroke-width="1.8"/><path d="M690.9 535.5 L671.5 558" stroke-width="1.7"/><path d="M673.7 531 L696.8 567"/><path d="M686.1 572.9 L705.5 562.5"/></g><path d="M654.9 521.4 L667.0 516.6 L715.9 522.3 L715.6 528.7 L697.3 535.2 L655.2 525.6 Z" fill="#b9581f"/><path d="M715.9 522.3 L715.6 528.7 L697.3 535.2 L697.6 530.2 Z" fill="#5e2a0e"/><path d="M655.2 525.6 L697.3 535.2 L697.6 530.2 L654.9 521.4 Z" fill="#a54c1a"/><path d="M654.9 521.4 L667.0 516.6 L707.0 523.0 L697.6 530.2 Z" fill="#c8662a"/><path d="M659.1 520.6 L664.2 519.2 L701.3 526.5 L696.8 528.7 Z" fill="#f4f4f4"/><path d="M664 519.800 L700.500 527" stroke="#111" stroke-width="1.200" stroke-dasharray="1.400 1"/><path d="M669.8 505.7 L710.3 510.5 L707.5 523.7 L667.0 516.4 Z" fill="#101010"/><path d="M670.0 504.0 L710.8 509.0 L710.3 511.0 L669.8 506.0 Z" fill="#e27a22"/><circle cx="677.9" cy="512.8" r=".8" fill="#bbb"/><circle cx="705.5" cy="515.5" r=".8" fill="#e08040"/><circle cx="672.0" cy="507.7" r=".8" fill="#5aa0d8"/><circle cx="679.4" cy="510.4" r=".8" fill="#eee"/><circle cx="686.7" cy="516.3" r=".8" fill="#5aa0d8"/><circle cx="683.7" cy="516.1" r=".8" fill="#ddd"/><circle cx="693.3" cy="517.3" r=".8" fill="#e08040"/><circle cx="685.1" cy="509.3" r=".8" fill="#ddd"/><circle cx="673.8" cy="515.8" r=".8" fill="#ddd"/><circle cx="681.5" cy="509.0" r=".8" fill="#bbb"/><circle cx="687.0" cy="515.3" r=".8" fill="#5aa0d8"/><circle cx="696.4" cy="518.1" r=".8" fill="#5aa0d8"/><circle cx="697.7" cy="515.4" r=".8" fill="#ddd"/><circle cx="704.8" cy="512.3" r=".8" fill="#ddd"/><circle cx="688.9" cy="511.8" r=".8" fill="#eee"/><circle cx="685.7" cy="514.4" r=".8" fill="#bbb"/><circle cx="684.7" cy="516.0" r=".8" fill="#e08040"/><circle cx="682.4" cy="513.7" r=".8" fill="#e08040"/><circle cx="678.1" cy="511.1" r=".8" fill="#ddd"/><circle cx="702.0" cy="519.4" r=".8" fill="#eee"/><circle cx="696.1" cy="516.3" r=".8" fill="#bbb"/><circle cx="706.5" cy="519.2" r=".8" fill="#e08040"/><circle cx="672.2" cy="513.1" r=".8" fill="#eee"/><circle cx="701.9" cy="515.9" r=".8" fill="#bbb"/><circle cx="673.4" cy="511.8" r=".8" fill="#eee"/><circle cx="709.3" cy="512.8" r=".8" fill="#ddd"/><circle cx="685.7" cy="510.5" r=".8" fill="#bbb"/><circle cx="685.8" cy="512.7" r=".8" fill="#ddd"/><circle cx="669.9" cy="512.4" r=".8" fill="#ddd"/><circle cx="683.4" cy="513.8" r=".8" fill="#e08040"/><circle cx="703.0" cy="519.4" r=".8" fill="#e08040"/><circle cx="678.9" cy="508.7" r=".8" fill="#ddd"/><circle cx="671.2" cy="512.5" r=".8" fill="#ddd"/><circle cx="705.8" cy="519.7" r=".8" fill="#bbb"/><circle cx="693.8" cy="511.5" r=".8" fill="#ddd"/><circle cx="708.4" cy="514.7" r=".8" fill="#bbb"/><circle cx="706.3" cy="519.1" r=".8" fill="#5aa0d8"/><circle cx="682.8" cy="516.1" r=".8" fill="#5aa0d8"/><circle cx="706.500" cy="517.500" r="1" fill="#e02020"/></g></svg>
</div><div class="tr" style="top:464px">
<div class="nm">Grand Piano</div>
<div class="ms" style="left:130px;width:82px"><div class="abs" style="left:38px;top:0;width:2px;height:100%;background:#222"></div></div>
<div class="vs"><b style="top:8px;width:74px;background:#43b04c"></b><b style="top:20px;width:80px;background:#43b04c"></b><i style="left:99px;top:8px;background:#43b04c"></i><i style="left:111px;top:20px;background:#43b04c"></i><s style="left:37.6px"></s></div>
<div class="lr" style="left:571px">L</div><div class="lr" style="left:619px">R</div>
<svg class="abs" style="left:0;top:0" width="650" height="98" viewBox="0 0 650 98"><g transform="translate(150.5 69)"><path d="M-10 -3.800 H-4.500 L3.500 -10 V10 L-4.500 3.800 H-10 Z" fill="#9a9a9a"/><path d="M-7 10.800 L9.500 -8.800" stroke="#454545" stroke-width="5.500"/><path d="M-7.500 11 L10 -9" stroke="#a4a4a4" stroke-width="2.300"/></g><g transform="translate(191 69)" fill="none" stroke="#a6a6a6"><path d="M-9.300 5 V-1 A9.300 9.300 0 0 1 9.300 -1 V5" stroke-width="2.600"/><rect x="-9.500" y="1.500" width="5.200" height="9.500" rx="1.800" fill="#a6a6a6" stroke="none"/><rect x="4.300" y="1.500" width="5.200" height="9.500" rx="1.800" fill="#a6a6a6" stroke="none"/></g><g transform="translate(599 51)"><g>
<circle cx="-15.0" cy="26.0" r="2" fill="#666"/><circle cx="-26.0" cy="15.0" r="2" fill="#666"/><circle cx="-30.0" cy="-0.0" r="2" fill="#666"/><circle cx="-26.0" cy="-15.0" r="2" fill="#666"/><circle cx="-15.0" cy="-26.0" r="2" fill="#666"/><circle cx="0.0" cy="-30.0" r="2" fill="#666"/><circle cx="15.0" cy="-26.0" r="2" fill="#666"/><circle cx="26.0" cy="-15.0" r="2" fill="#666"/><circle cx="30.0" cy="-0.0" r="2" fill="#666"/><circle cx="26.0" cy="15.0" r="2" fill="#666"/><circle cx="15.0" cy="26.0" r="2" fill="#666"/>
<circle cx="0" cy="1.500" r="25.500" fill="#2e2e2e" opacity=".55"/>
<circle cx="0" cy="0" r="24.200" fill="url(#pk1)"/>
<circle cx="0" cy="0" r="18.500" fill="url(#pk2)"/>
<rect x="-1.800" y="-20" width="3.600" height="6.500" rx="1.700" fill="#1b1b1b"/>
</g></g><g transform="translate(-620 -590)"><ellipse cx="683" cy="664" rx="26" ry="6" fill="#000" opacity=".18"/><rect x="701.800" y="643" width="2.800" height="12" fill="#0b0b0b"/><rect x="662" y="644" width="3.900" height="14.500" fill="#0b0b0b"/><rect x="679.300" y="646" width="4" height="15" fill="#0e0e0e"/><path d="M692.500 646 H698.500 L697.600 669 H694.200 Z" fill="#0a0a0a"/><circle cx="664.7" cy="660.3" r="1.700" fill="#e0a83a"/><circle cx="676.5" cy="663" r="1.700" fill="#e0a83a"/><circle cx="681.5" cy="662.5" r="1.700" fill="#e0a83a"/><circle cx="695.8" cy="670" r="1.700" fill="#e0a83a"/><circle cx="703.5" cy="656.3" r="1.700" fill="#e0a83a"/><path d="M683.8 626.0 L712.5 626.0 L704.6 630.5 L682.7 629.3 Z" fill="#8a4a22"/><path d="M694.0 602.9 L701.8 603.5 L702.5 608.0 L710.8 612.5 L708.0 618.0 L700.7 623.7 L683.8 624.9 L667.0 626.0 Z" fill="#0c0c0c"/><path d="M668.0 625.5 L694.5 604.0 L699.0 606.0 L676.0 625.0 Z" fill="#5a3018"/><path d="M665.900 626 L694 602.900" stroke="#e9aa3a" stroke-width="1.800"/><path d="M694.500 607 L702 629" stroke="#1a1a1a" stroke-width="1"/><path d="M671.5 622.0 L683.8 622.5 L683.8 629.3 L671.0 628.5 Z" fill="#8b939d"/><path d="M653.5 638.3 L658.0 634.0 L660.8 628.2 L692.3 632.7 L705.2 629.3 L713.0 626.5 L713.0 637.2 L706.3 642.3 L698.0 646.0 L686.7 646.8 L654.0 640.6 Z" fill="#111"/><path d="M706 629.500 V642 M709.500 628 V640" stroke="#444" stroke-width="1.200"/><path d="M656.900 637.200 L686.700 642.800" stroke="#f0f0f0" stroke-width="1.500"/><path d="M655 639.300 L686.500 645.200" stroke="#3a3a3a" stroke-width="1.200"/><path d="M672 634 l6 .8" stroke="#c8a040" stroke-width=".8"/></g></svg>
</div><div class="tr" style="top:562px">
<div class="nm">Noise Bass</div>
<div class="ms" style="left:130px;width:82px"><div class="abs" style="left:38px;top:0;width:2px;height:100%;background:#222"></div></div>
<div class="vs"><b style="top:8px;width:86px;background:#43b04c"></b><b style="top:20px;width:86px;background:#43b04c"></b><i style="left:105px;top:8px;background:#43b04c"></i><i style="left:107px;top:20px;background:#43b04c"></i><s style="left:35.8px"></s></div>
<div class="lr" style="left:571px">L</div><div class="lr" style="left:619px">R</div>
<svg class="abs" style="left:0;top:0" width="650" height="98" viewBox="0 0 650 98"><g transform="translate(150.5 69)"><path d="M-10 -3.800 H-4.500 L3.500 -10 V10 L-4.500 3.800 H-10 Z" fill="#9a9a9a"/><path d="M-7 10.800 L9.500 -8.800" stroke="#454545" stroke-width="5.500"/><path d="M-7.500 11 L10 -9" stroke="#a4a4a4" stroke-width="2.300"/></g><g transform="translate(191 69)" fill="none" stroke="#a6a6a6"><path d="M-9.300 5 V-1 A9.300 9.300 0 0 1 9.300 -1 V5" stroke-width="2.600"/><rect x="-9.500" y="1.500" width="5.200" height="9.500" rx="1.800" fill="#a6a6a6" stroke="none"/><rect x="4.300" y="1.500" width="5.200" height="9.500" rx="1.800" fill="#a6a6a6" stroke="none"/></g><g transform="translate(599 51)"><g>
<circle cx="-15.0" cy="26.0" r="2" fill="#666"/><circle cx="-26.0" cy="15.0" r="2" fill="#666"/><circle cx="-30.0" cy="-0.0" r="2" fill="#666"/><circle cx="-26.0" cy="-15.0" r="2" fill="#666"/><circle cx="-15.0" cy="-26.0" r="2" fill="#666"/><circle cx="0.0" cy="-30.0" r="2" fill="#666"/><circle cx="15.0" cy="-26.0" r="2" fill="#666"/><circle cx="26.0" cy="-15.0" r="2" fill="#666"/><circle cx="30.0" cy="-0.0" r="2" fill="#666"/><circle cx="26.0" cy="15.0" r="2" fill="#666"/><circle cx="15.0" cy="26.0" r="2" fill="#666"/>
<circle cx="0" cy="1.500" r="25.500" fill="#2e2e2e" opacity=".55"/>
<circle cx="0" cy="0" r="24.200" fill="url(#pk1)"/>
<circle cx="0" cy="0" r="18.500" fill="url(#pk2)"/>
<rect x="-1.800" y="-20" width="3.600" height="6.500" rx="1.700" fill="#1b1b1b"/>
</g></g><g transform="translate(-620 -688)"><ellipse cx="686" cy="764" rx="23" ry="5.500" fill="#000" opacity=".2"/><g stroke="#171717" stroke-linecap="round" fill="none" stroke-width="2"><path d="M664.7 762 L682.2 754.6" stroke-width="1.8"/><path d="M692.8 738.3 L676 757.5" stroke-width="1.7"/><path d="M676.5 733.8 L696.2 764.8"/><path d="M688.3 770.1 L704.1 761.7"/></g><path d="M673.7 700.4 L711.1 703.8 L710.3 732.7 L704.6 728.8 L672.0 722.6 Z" fill="#131313"/><path d="M674.3 702.0 L706.3 705.7 L703.5 726.5 L673.2 721.5 Z" fill="#242a3c"/><rect x="681.3" y="720.2" width="1.5" height="1.100" fill="#e8963c"/><rect x="676.6" y="706.7" width="1.5" height="1.100" fill="#5a6488"/><rect x="694.0" y="714.0" width="1.7" height="1.100" fill="#8a93b0"/><rect x="691.6" y="720.7" width="1.3" height="1.100" fill="#8a93b0"/><rect x="682.3" y="705.6" width="1.9" height="1.100" fill="#c8782c"/><rect x="688.6" y="720.5" width="2.1" height="1.100" fill="#e8963c"/><rect x="677.6" y="717.3" width="2.1" height="1.100" fill="#8a93b0"/><rect x="686.0" y="716.1" width="1.5" height="1.100" fill="#c8782c"/><rect x="677.2" y="718.6" width="2.5" height="1.100" fill="#5a6488"/><rect x="692.4" y="708.8" width="2.0" height="1.100" fill="#e8963c"/><rect x="675.9" y="715.4" width="2.5" height="1.100" fill="#e8963c"/><rect x="691.9" y="718.1" width="1.6" height="1.100" fill="#8a93b0"/><rect x="685.2" y="719.4" width="1.4" height="1.100" fill="#e8963c"/><rect x="692.7" y="715.0" width="2.2" height="1.100" fill="#c8782c"/><rect x="702.7" y="721.5" width="2.1" height="1.100" fill="#5a6488"/><rect x="684.2" y="711.1" width="1.9" height="1.100" fill="#c8782c"/><rect x="676.8" y="718.6" width="2.5" height="1.100" fill="#5a6488"/><rect x="691.2" y="711.9" width="1.6" height="1.100" fill="#e8963c"/><rect x="681.9" y="705.8" width="1.7" height="1.100" fill="#c8782c"/><rect x="699.2" y="721.7" width="2.1" height="1.100" fill="#e8963c"/><rect x="678.1" y="719.2" width="1.5" height="1.100" fill="#e8963c"/><rect x="697.8" y="712.0" width="2.3" height="1.100" fill="#e8963c"/><rect x="685.9" y="718.9" width="1.8" height="1.100" fill="#5a6488"/><rect x="681.9" y="711.7" width="1.8" height="1.100" fill="#8a93b0"/><rect x="677.7" y="705.9" width="1.2" height="1.100" fill="#e8963c"/><rect x="694.3" y="719.0" width="1.7" height="1.100" fill="#5a6488"/><path d="M675 714.500 L692 717.500" stroke="#d8862c" stroke-width="1.300"/><path d="M658.5 724.9 L667.0 722.3 L699.6 730.5 L704.6 728.8 L710.3 732.7 L696.2 738.5 L658.5 728.8 Z" fill="#2a2a2a"/><path d="M658.5 726.0 L696.2 735.0 L696.2 738.5 L658.5 728.8 Z" fill="#4a4a4a"/><path d="M666.400 725.100 L696.800 731.900" stroke="#f2f2f2" stroke-width="2"/></g></svg>
</div><div class="tr" style="top:660px">
<div class="nm">Electro Riser</div>
<div class="ms" style="left:130px;width:82px"><div class="abs" style="left:38px;top:0;width:2px;height:100%;background:#222"></div></div><div class="ms" style="left:224px;width:42px"></div>
<div class="vs"><b style="top:8px;width:60px;background:#43b04c"></b><b style="top:20px;width:62px;background:#43b04c"></b><i style="left:93px;top:8px;background:#43b04c"></i><i style="left:93px;top:20px;background:#43b04c"></i><s style="left:28.0px"></s></div>
<div class="lr" style="left:571px">L</div><div class="lr" style="left:619px">R</div>
<svg class="abs" style="left:0;top:0" width="650" height="98" viewBox="0 0 650 98"><g transform="translate(150.5 69)"><path d="M-10 -3.800 H-4.500 L3.500 -10 V10 L-4.500 3.800 H-10 Z" fill="#9a9a9a"/><path d="M-7 10.800 L9.500 -8.800" stroke="#454545" stroke-width="5.500"/><path d="M-7.500 11 L10 -9" stroke="#a4a4a4" stroke-width="2.300"/></g><g transform="translate(191 69)" fill="none" stroke="#a6a6a6"><path d="M-9.300 5 V-1 A9.300 9.300 0 0 1 9.300 -1 V5" stroke-width="2.600"/><rect x="-9.500" y="1.500" width="5.200" height="9.500" rx="1.800" fill="#a6a6a6" stroke="none"/><rect x="4.300" y="1.500" width="5.200" height="9.500" rx="1.800" fill="#a6a6a6" stroke="none"/></g><g transform="translate(245 69)" fill="none" stroke="#a0a0a0" stroke-width="2.200" stroke-linecap="round"><circle cx="0" cy="-6" r="4.800" fill="#a0a0a0" stroke="none"/><path d="M-6.500 0.500 Q0 7 6.500 0.500"/><path d="M-11 3.500 Q0 14.500 11 3.500"/></g><g transform="translate(599 51)"><g>
<circle cx="-15.0" cy="26.0" r="2" fill="#666"/><circle cx="-26.0" cy="15.0" r="2" fill="#666"/><circle cx="-30.0" cy="-0.0" r="2" fill="#666"/><circle cx="-26.0" cy="-15.0" r="2" fill="#666"/><circle cx="-15.0" cy="-26.0" r="2" fill="#666"/><circle cx="0.0" cy="-30.0" r="2" fill="#666"/><circle cx="15.0" cy="-26.0" r="2" fill="#666"/><circle cx="26.0" cy="-15.0" r="2" fill="#666"/><circle cx="30.0" cy="-0.0" r="2" fill="#666"/><circle cx="26.0" cy="15.0" r="2" fill="#666"/><circle cx="15.0" cy="26.0" r="2" fill="#666"/>
<circle cx="0" cy="1.500" r="25.500" fill="#2e2e2e" opacity=".55"/>
<circle cx="0" cy="0" r="24.200" fill="url(#pk1)"/>
<circle cx="0" cy="0" r="18.500" fill="url(#pk2)"/>
<rect x="-1.800" y="-20" width="3.600" height="6.500" rx="1.700" fill="#1b1b1b"/>
</g></g><circle cx="69.0" cy="34.1" r="9.500" fill="#5050e0" opacity=".8" filter="url(#sblur)"/><circle cx="76.5" cy="39.6" r="9.500" fill="#b040d0" opacity=".8" filter="url(#sblur)"/><circle cx="79.4" cy="48.4" r="9.500" fill="#e040a0" opacity=".8" filter="url(#sblur)"/><circle cx="76.5" cy="57.2" r="9.500" fill="#e04848" opacity=".8" filter="url(#sblur)"/><circle cx="69.0" cy="62.7" r="9.500" fill="#e89038" opacity=".8" filter="url(#sblur)"/><circle cx="59.8" cy="62.7" r="9.500" fill="#d8d838" opacity=".8" filter="url(#sblur)"/><circle cx="52.3" cy="57.2" r="9.500" fill="#58c048" opacity=".8" filter="url(#sblur)"/><circle cx="49.4" cy="48.4" r="9.500" fill="#30b070" opacity=".8" filter="url(#sblur)"/><circle cx="52.3" cy="39.6" r="9.500" fill="#30b0b8" opacity=".8" filter="url(#sblur)"/><circle cx="59.8" cy="34.1" r="9.500" fill="#4080e0" opacity=".8" filter="url(#sblur)"/><path d="M64.4 48.4 L64.9 26.4" stroke="#5050e0" stroke-width="1.4" opacity="0.48"/><path d="M64.4 48.4 L66.8 20.7" stroke="#5050e0" stroke-width="2.1" opacity="0.31"/><path d="M64.4 48.4 L71.3 24.3" stroke="#5050e0" stroke-width="2.0" opacity="0.59"/><path d="M64.4 48.4 L74.7 26.6" stroke="#5050e0" stroke-width="2.2" opacity="0.54"/><path d="M64.4 48.4 L75.4 31.3" stroke="#5050e0" stroke-width="2.3" opacity="0.37"/><path d="M64.4 48.4 L79.4 27.2" stroke="#5050e0" stroke-width="2.2" opacity="0.59"/><path d="M64.4 48.4 L84.1 28.1" stroke="#b040d0" stroke-width="1.2" opacity="0.59"/><path d="M64.4 48.4 L84.3 32.5" stroke="#b040d0" stroke-width="1.3" opacity="0.31"/><path d="M64.4 48.4 L86.3 34.3" stroke="#b040d0" stroke-width="1.9" opacity="0.54"/><path d="M64.4 48.4 L87.1 39.9" stroke="#b040d0" stroke-width="2.2" opacity="0.36"/><path d="M64.4 48.4 L86.3 43.4" stroke="#e040a0" stroke-width="2.3" opacity="0.42"/><path d="M64.4 48.4 L89.3 44.9" stroke="#e040a0" stroke-width="1.3" opacity="0.32"/><path d="M64.4 48.4 L91.5 48.5" stroke="#e040a0" stroke-width="1.3" opacity="0.42"/><path d="M64.4 48.4 L92.0 51.7" stroke="#e040a0" stroke-width="2.4" opacity="0.33"/><path d="M64.4 48.4 L84.7 53.9" stroke="#e040a0" stroke-width="2.1" opacity="0.58"/><path d="M64.4 48.4 L88.0 58.8" stroke="#e04848" stroke-width="1.2" opacity="0.33"/><path d="M64.4 48.4 L82.7 58.3" stroke="#e04848" stroke-width="1.4" opacity="0.59"/><path d="M64.4 48.4 L87.7 65.7" stroke="#e04848" stroke-width="2.1" opacity="0.53"/><path d="M64.4 48.4 L82.7 68.2" stroke="#e04848" stroke-width="1.6" opacity="0.44"/><path d="M64.4 48.4 L76.9 64.4" stroke="#e04848" stroke-width="1.3" opacity="0.47"/><path d="M64.4 48.4 L79.2 74.2" stroke="#e89038" stroke-width="1.9" opacity="0.55"/><path d="M64.4 48.4 L74.3 72.2" stroke="#e89038" stroke-width="2.2" opacity="0.31"/><path d="M64.4 48.4 L71.8 71.5" stroke="#e89038" stroke-width="1.6" opacity="0.43"/><path d="M64.4 48.4 L68.2 69.8" stroke="#e89038" stroke-width="1.3" opacity="0.48"/><path d="M64.4 48.4 L65.3 68.6" stroke="#e89038" stroke-width="2.0" opacity="0.43"/><path d="M64.4 48.4 L62.0 77.7" stroke="#d8d838" stroke-width="1.8" opacity="0.58"/><path d="M64.4 48.4 L57.4 72.9" stroke="#d8d838" stroke-width="1.7" opacity="0.33"/><path d="M64.4 48.4 L54.0 70.5" stroke="#d8d838" stroke-width="1.6" opacity="0.34"/><path d="M64.4 48.4 L49.2 74.1" stroke="#d8d838" stroke-width="1.7" opacity="0.54"/><path d="M64.4 48.4 L48.7 68.0" stroke="#58c048" stroke-width="2.0" opacity="0.52"/><path d="M64.4 48.4 L49.3 62.2" stroke="#58c048" stroke-width="1.4" opacity="0.37"/><path d="M64.4 48.4 L46.9 63.1" stroke="#58c048" stroke-width="1.7" opacity="0.37"/><path d="M64.4 48.4 L47.0 58.4" stroke="#58c048" stroke-width="2.3" opacity="0.51"/><path d="M64.4 48.4 L44.3 57.7" stroke="#58c048" stroke-width="2.1" opacity="0.34"/><path d="M64.4 48.4 L44.6 53.2" stroke="#30b070" stroke-width="1.9" opacity="0.50"/><path d="M64.4 48.4 L36.7 51.9" stroke="#30b070" stroke-width="2.3" opacity="0.60"/><path d="M64.4 48.4 L39.6 49.5" stroke="#30b070" stroke-width="1.3" opacity="0.52"/><path d="M64.4 48.4 L42.8 46.2" stroke="#30b070" stroke-width="1.3" opacity="0.30"/><path d="M64.4 48.4 L43.1 43.2" stroke="#30b070" stroke-width="1.8" opacity="0.55"/><path d="M64.4 48.4 L43.1 39.0" stroke="#30b0b8" stroke-width="1.5" opacity="0.53"/><path d="M64.4 48.4 L41.2 35.7" stroke="#30b0b8" stroke-width="2.4" opacity="0.47"/><path d="M64.4 48.4 L48.1 36.0" stroke="#30b0b8" stroke-width="1.5" opacity="0.58"/><path d="M64.4 48.4 L49.2 34.5" stroke="#30b0b8" stroke-width="1.9" opacity="0.39"/><path d="M64.4 48.4 L51.0 30.6" stroke="#30b0b8" stroke-width="1.5" opacity="0.38"/><path d="M64.4 48.4 L51.4 24.8" stroke="#4080e0" stroke-width="1.2" opacity="0.51"/><path d="M64.4 48.4 L55.6 25.4" stroke="#4080e0" stroke-width="1.3" opacity="0.30"/><path d="M64.4 48.4 L59.9 27.9" stroke="#4080e0" stroke-width="1.2" opacity="0.32"/><path d="M64.4 48.4 L61.7 18.5" stroke="#4080e0" stroke-width="2.1" opacity="0.58"/><circle cx="51.9" cy="43.6" r="2.3" fill="#f0f0d8" opacity="0.88"/><circle cx="77.1" cy="26.5" r="1.1" fill="#5050e0" opacity="0.66"/><circle cx="56.4" cy="25.5" r="2.5" fill="#5050e0" opacity="0.60"/><circle cx="49.3" cy="69.9" r="2.2" fill="#f0f0d8" opacity="0.65"/><circle cx="67.9" cy="65.1" r="1.5" fill="#e89038" opacity="0.72"/><circle cx="52.9" cy="26.8" r="3.0" fill="#4080e0" opacity="0.83"/><circle cx="60.5" cy="25.5" r="1.8" fill="#fff" opacity="0.68"/><circle cx="88.6" cy="55.9" r="2.4" fill="#f0f0d8" opacity="0.69"/><circle cx="79.1" cy="39.4" r="1.3" fill="#fff" opacity="0.80"/><circle cx="51.0" cy="56.6" r="1.0" fill="#58c048" opacity="0.81"/><circle cx="46.3" cy="62.3" r="1.2" fill="#58c048" opacity="0.64"/><circle cx="79.5" cy="73.0" r="1.9" fill="#f0f0d8" opacity="0.61"/><circle cx="36.9" cy="60.6" r="2.5" fill="#fff" opacity="0.55"/><circle cx="77.2" cy="65.4" r="1.8" fill="#e04848" opacity="0.71"/><circle cx="49.7" cy="22.2" r="2.2" fill="#5050e0" opacity="0.84"/><circle cx="55.2" cy="31.8" r="1.9" fill="#f0f0d8" opacity="0.73"/><circle cx="45.8" cy="30.8" r="2.3" fill="#fff" opacity="0.77"/><circle cx="61.7" cy="22.1" r="2.4" fill="#4080e0" opacity="0.50"/><circle cx="90.0" cy="32.2" r="1.3" fill="#b040d0" opacity="0.56"/><circle cx="73.9" cy="24.0" r="1.6" fill="#fff" opacity="0.72"/><circle cx="38.4" cy="47.9" r="1.3" fill="#30b070" opacity="0.78"/><circle cx="50.8" cy="64.9" r="2.1" fill="#30b070" opacity="0.54"/><circle cx="53.4" cy="32.7" r="0.9" fill="#4080e0" opacity="0.62"/><circle cx="52.8" cy="66.3" r="2.1" fill="#f0f0d8" opacity="0.52"/><circle cx="90.6" cy="52.4" r="1.1" fill="#e04848" opacity="0.56"/><circle cx="59.5" cy="37.0" r="2.0" fill="#4080e0" opacity="0.75"/><circle cx="80.3" cy="38.5" r="2.2" fill="#b040d0" opacity="0.69"/><circle cx="83.8" cy="53.2" r="2.5" fill="#f0f0d8" opacity="0.89"/><circle cx="87.8" cy="53.8" r="1.4" fill="#fff" opacity="0.66"/><circle cx="54.2" cy="29.7" r="2.3" fill="#4080e0" opacity="0.74"/><circle cx="54.4" cy="31.6" r="1.4" fill="#fff" opacity="0.77"/><circle cx="52.6" cy="36.9" r="1.9" fill="#4080e0" opacity="0.58"/><circle cx="73.9" cy="32.0" r="2.8" fill="#b040d0" opacity="0.86"/><circle cx="67.5" cy="75.7" r="1.4" fill="#f0f0d8" opacity="0.80"/><circle cx="62.6" cy="68.4" r="3.0" fill="#58c048" opacity="0.72"/><circle cx="52.5" cy="33.3" r="2.6" fill="#30b0b8" opacity="0.52"/><circle cx="46.5" cy="53.1" r="1.7" fill="#30b070" opacity="0.74"/><circle cx="68.5" cy="35.5" r="2.8" fill="#5050e0" opacity="0.73"/><circle cx="74.4" cy="29.1" r="0.9" fill="#5050e0" opacity="0.75"/><circle cx="82.5" cy="28.9" r="1.6" fill="#f0f0d8" opacity="0.68"/><circle cx="63.8" cy="28.0" r="1.5" fill="#4080e0" opacity="0.76"/><circle cx="80.5" cy="54.3" r="2.1" fill="#f0f0d8" opacity="0.75"/><circle cx="72.8" cy="38.1" r="2.7" fill="#b040d0" opacity="0.54"/><circle cx="72.8" cy="20.5" r="1.3" fill="#f0f0d8" opacity="0.78"/><circle cx="58.4" cy="60.4" r="1.3" fill="#f0f0d8" opacity="0.73"/><circle cx="59.9" cy="64.2" r="1.8" fill="#d8d838" opacity="0.82"/><circle cx="86.8" cy="53.7" r="2.8" fill="#e04848" opacity="0.51"/><circle cx="74.9" cy="34.3" r="2.1" fill="#e040a0" opacity="0.56"/><circle cx="41.3" cy="62.3" r="0.8" fill="#58c048" opacity="0.58"/><circle cx="76.0" cy="42.6" r="2.3" fill="#b040d0" opacity="0.68"/><circle cx="60.5" cy="18.9" r="1.9" fill="#5050e0" opacity="0.72"/><circle cx="87.0" cy="38.4" r="2.3" fill="#b040d0" opacity="0.54"/><circle cx="52.7" cy="76.5" r="1.6" fill="#f0f0d8" opacity="0.60"/><circle cx="47.3" cy="44.3" r="2.1" fill="#f0f0d8" opacity="0.56"/><circle cx="50.3" cy="65.5" r="1.6" fill="#58c048" opacity="0.63"/><circle cx="71.7" cy="64.6" r="2.5" fill="#d8d838" opacity="0.76"/><circle cx="91.1" cy="50.6" r="2.1" fill="#fff" opacity="0.60"/><circle cx="65.3" cy="34.0" r="2.3" fill="#fff" opacity="0.70"/><circle cx="79.6" cy="61.8" r="1.1" fill="#fff" opacity="0.76"/><circle cx="87.7" cy="30.1" r="2.4" fill="#b040d0" opacity="0.62"/><circle cx="64.39999999999998" cy="48.39999999999998" r="21" fill="url(#spk)"/></svg>
</div><div class="tr" style="top:758px">
<div class="nm">Boomer FX</div>
<div class="ms" style="left:130px;width:82px"><div class="abs" style="left:38px;top:0;width:2px;height:100%;background:#222"></div></div><div class="ms" style="left:224px;width:42px"></div>
<div class="vs"><b style="top:8px;width:78px;background:#43b04c"></b><b style="top:20px;width:82px;background:#43b04c"></b><i style="left:109px;top:8px;background:#43b04c"></i><i style="left:109px;top:20px;background:#43b04c"></i><s style="left:33.8px"></s></div>
<div class="lr" style="left:571px">L</div><div class="lr" style="left:619px">R</div>
<svg class="abs" style="left:0;top:0" width="650" height="98" viewBox="0 0 650 98"><g transform="translate(150.5 69)"><path d="M-10 -3.800 H-4.500 L3.500 -10 V10 L-4.500 3.800 H-10 Z" fill="#9a9a9a"/><path d="M-7 10.800 L9.500 -8.800" stroke="#454545" stroke-width="5.500"/><path d="M-7.500 11 L10 -9" stroke="#a4a4a4" stroke-width="2.300"/></g><g transform="translate(191 69)" fill="none" stroke="#a6a6a6"><path d="M-9.300 5 V-1 A9.300 9.300 0 0 1 9.300 -1 V5" stroke-width="2.600"/><rect x="-9.500" y="1.500" width="5.200" height="9.500" rx="1.800" fill="#a6a6a6" stroke="none"/><rect x="4.300" y="1.500" width="5.200" height="9.500" rx="1.800" fill="#a6a6a6" stroke="none"/></g><g transform="translate(245 69)" fill="none" stroke="#a0a0a0" stroke-width="2.200" stroke-linecap="round"><circle cx="0" cy="-6" r="4.800" fill="#a0a0a0" stroke="none"/><path d="M-6.500 0.500 Q0 7 6.500 0.500"/><path d="M-11 3.500 Q0 14.500 11 3.500"/></g><g transform="translate(599 51)"><g>
<circle cx="-15.0" cy="26.0" r="2" fill="#666"/><circle cx="-26.0" cy="15.0" r="2" fill="#666"/><circle cx="-30.0" cy="-0.0" r="2" fill="#666"/><circle cx="-26.0" cy="-15.0" r="2" fill="#666"/><circle cx="-15.0" cy="-26.0" r="2" fill="#666"/><circle cx="0.0" cy="-30.0" r="2" fill="#666"/><circle cx="15.0" cy="-26.0" r="2" fill="#666"/><circle cx="26.0" cy="-15.0" r="2" fill="#666"/><circle cx="30.0" cy="-0.0" r="2" fill="#666"/><circle cx="26.0" cy="15.0" r="2" fill="#666"/><circle cx="15.0" cy="26.0" r="2" fill="#666"/>
<circle cx="0" cy="1.500" r="25.500" fill="#2e2e2e" opacity=".55"/>
<circle cx="0" cy="0" r="24.200" fill="url(#pk1)"/>
<circle cx="0" cy="0" r="18.500" fill="url(#pk2)"/>
<rect x="-1.800" y="-20" width="3.600" height="6.500" rx="1.700" fill="#1b1b1b"/>
</g></g><circle cx="69.0" cy="34.1" r="9.500" fill="#5050e0" opacity=".8" filter="url(#sblur)"/><circle cx="76.5" cy="39.6" r="9.500" fill="#b040d0" opacity=".8" filter="url(#sblur)"/><circle cx="79.4" cy="48.4" r="9.500" fill="#e040a0" opacity=".8" filter="url(#sblur)"/><circle cx="76.5" cy="57.2" r="9.500" fill="#e04848" opacity=".8" filter="url(#sblur)"/><circle cx="69.0" cy="62.7" r="9.500" fill="#e89038" opacity=".8" filter="url(#sblur)"/><circle cx="59.8" cy="62.7" r="9.500" fill="#d8d838" opacity=".8" filter="url(#sblur)"/><circle cx="52.3" cy="57.2" r="9.500" fill="#58c048" opacity=".8" filter="url(#sblur)"/><circle cx="49.4" cy="48.4" r="9.500" fill="#30b070" opacity=".8" filter="url(#sblur)"/><circle cx="52.3" cy="39.6" r="9.500" fill="#30b0b8" opacity=".8" filter="url(#sblur)"/><circle cx="59.8" cy="34.1" r="9.500" fill="#4080e0" opacity=".8" filter="url(#sblur)"/><path d="M64.4 48.4 L64.8 21.4" stroke="#5050e0" stroke-width="2.3" opacity="0.36"/><path d="M64.4 48.4 L66.9 20.3" stroke="#5050e0" stroke-width="1.6" opacity="0.41"/><path d="M64.4 48.4 L70.7 27.5" stroke="#5050e0" stroke-width="2.3" opacity="0.45"/><path d="M64.4 48.4 L74.4 21.0" stroke="#5050e0" stroke-width="1.9" opacity="0.32"/><path d="M64.4 48.4 L79.1 24.9" stroke="#5050e0" stroke-width="2.1" opacity="0.50"/><path d="M64.4 48.4 L77.4 33.1" stroke="#b040d0" stroke-width="2.4" opacity="0.49"/><path d="M64.4 48.4 L82.4 29.5" stroke="#b040d0" stroke-width="1.6" opacity="0.50"/><path d="M64.4 48.4 L84.7 33.4" stroke="#b040d0" stroke-width="1.3" opacity="0.42"/><path d="M64.4 48.4 L87.9 34.2" stroke="#b040d0" stroke-width="2.3" opacity="0.53"/><path d="M64.4 48.4 L84.5 40.2" stroke="#b040d0" stroke-width="2.0" opacity="0.38"/><path d="M64.4 48.4 L85.6 43.8" stroke="#e040a0" stroke-width="2.4" opacity="0.30"/><path d="M64.4 48.4 L87.7 46.0" stroke="#e040a0" stroke-width="1.9" opacity="0.42"/><path d="M64.4 48.4 L88.8 47.9" stroke="#e040a0" stroke-width="2.2" opacity="0.41"/><path d="M64.4 48.4 L92.0 51.6" stroke="#e040a0" stroke-width="1.4" opacity="0.41"/><path d="M64.4 48.4 L88.7 55.0" stroke="#e040a0" stroke-width="1.4" opacity="0.53"/><path d="M64.4 48.4 L83.7 56.4" stroke="#e04848" stroke-width="1.6" opacity="0.32"/><path d="M64.4 48.4 L82.9 58.7" stroke="#e04848" stroke-width="1.5" opacity="0.47"/><path d="M64.4 48.4 L82.4 62.7" stroke="#e04848" stroke-width="1.8" opacity="0.45"/><path d="M64.4 48.4 L84.8 69.1" stroke="#e04848" stroke-width="1.5" opacity="0.53"/><path d="M64.4 48.4 L81.9 71.5" stroke="#e04848" stroke-width="2.0" opacity="0.30"/><path d="M64.4 48.4 L79.4 72.0" stroke="#e89038" stroke-width="1.6" opacity="0.48"/><path d="M64.4 48.4 L75.2 71.7" stroke="#e89038" stroke-width="1.7" opacity="0.44"/><path d="M64.4 48.4 L73.3 76.0" stroke="#e89038" stroke-width="2.2" opacity="0.52"/><path d="M64.4 48.4 L67.0 70.5" stroke="#e89038" stroke-width="1.4" opacity="0.55"/><path d="M64.4 48.4 L64.8 72.2" stroke="#e89038" stroke-width="2.3" opacity="0.40"/><path d="M64.4 48.4 L60.5 69.9" stroke="#d8d838" stroke-width="2.2" opacity="0.39"/><path d="M64.4 48.4 L58.9 72.4" stroke="#d8d838" stroke-width="2.2" opacity="0.33"/><path d="M64.4 48.4 L53.2 74.7" stroke="#d8d838" stroke-width="1.2" opacity="0.45"/><path d="M64.4 48.4 L52.5 70.0" stroke="#d8d838" stroke-width="2.2" opacity="0.43"/><path d="M64.4 48.4 L51.3 66.1" stroke="#58c048" stroke-width="2.2" opacity="0.35"/><path d="M64.4 48.4 L42.8 69.1" stroke="#58c048" stroke-width="2.0" opacity="0.57"/><path d="M64.4 48.4 L44.3 65.0" stroke="#58c048" stroke-width="1.9" opacity="0.32"/><path d="M64.4 48.4 L44.5 60.1" stroke="#58c048" stroke-width="1.4" opacity="0.42"/><path d="M64.4 48.4 L37.9 60.7" stroke="#58c048" stroke-width="1.4" opacity="0.46"/><path d="M64.4 48.4 L44.8 53.2" stroke="#30b070" stroke-width="2.3" opacity="0.58"/><path d="M64.4 48.4 L39.4 51.5" stroke="#30b070" stroke-width="2.2" opacity="0.48"/><path d="M64.4 48.4 L35.1 49.2" stroke="#30b070" stroke-width="1.4" opacity="0.47"/><path d="M64.4 48.4 L37.0 44.7" stroke="#30b070" stroke-width="1.6" opacity="0.49"/><path d="M64.4 48.4 L38.2 42.2" stroke="#30b070" stroke-width="1.4" opacity="0.40"/><path d="M64.4 48.4 L39.2 37.9" stroke="#30b0b8" stroke-width="2.3" opacity="0.59"/><path d="M64.4 48.4 L46.5 38.1" stroke="#30b0b8" stroke-width="1.9" opacity="0.47"/><path d="M64.4 48.4 L48.4 35.6" stroke="#30b0b8" stroke-width="2.2" opacity="0.34"/><path d="M64.4 48.4 L44.0 26.6" stroke="#30b0b8" stroke-width="1.9" opacity="0.43"/><path d="M64.4 48.4 L51.7 31.3" stroke="#30b0b8" stroke-width="2.0" opacity="0.55"/><path d="M64.4 48.4 L51.9 24.4" stroke="#4080e0" stroke-width="2.1" opacity="0.59"/><path d="M64.4 48.4 L55.2 26.9" stroke="#4080e0" stroke-width="2.4" opacity="0.32"/><path d="M64.4 48.4 L56.9 22.0" stroke="#4080e0" stroke-width="2.3" opacity="0.54"/><path d="M64.4 48.4 L59.9 20.8" stroke="#4080e0" stroke-width="1.5" opacity="0.46"/><circle cx="44.2" cy="71.5" r="2.4" fill="#30b070" opacity="0.54"/><circle cx="41.8" cy="57.1" r="1.9" fill="#f0f0d8" opacity="0.67"/><circle cx="67.1" cy="33.2" r="1.8" fill="#fff" opacity="0.52"/><circle cx="74.2" cy="22.0" r="2.8" fill="#5050e0" opacity="0.54"/><circle cx="47.0" cy="45.4" r="2.6" fill="#fff" opacity="0.90"/><circle cx="57.1" cy="32.8" r="2.7" fill="#4080e0" opacity="0.76"/><circle cx="34.1" cy="47.5" r="1.0" fill="#30b070" opacity="0.60"/><circle cx="36.4" cy="40.8" r="1.0" fill="#30b0b8" opacity="0.80"/><circle cx="51.9" cy="49.0" r="1.4" fill="#fff" opacity="0.64"/><circle cx="64.8" cy="24.4" r="0.8" fill="#fff" opacity="0.61"/><circle cx="73.1" cy="35.7" r="2.5" fill="#fff" opacity="0.56"/><circle cx="66.5" cy="31.1" r="1.6" fill="#5050e0" opacity="0.73"/><circle cx="65.1" cy="63.3" r="1.5" fill="#f0f0d8" opacity="0.61"/><circle cx="41.2" cy="50.1" r="1.2" fill="#30b070" opacity="0.66"/><circle cx="68.0" cy="62.5" r="2.2" fill="#f0f0d8" opacity="0.67"/><circle cx="44.4" cy="33.8" r="1.6" fill="#fff" opacity="0.64"/><circle cx="70.3" cy="62.2" r="1.1" fill="#e89038" opacity="0.87"/><circle cx="71.0" cy="62.5" r="2.8" fill="#d8d838" opacity="0.70"/><circle cx="62.7" cy="78.1" r="2.4" fill="#d8d838" opacity="0.61"/><circle cx="80.6" cy="24.1" r="1.9" fill="#5050e0" opacity="0.67"/><circle cx="52.9" cy="28.9" r="2.2" fill="#4080e0" opacity="0.57"/><circle cx="63.7" cy="69.6" r="1.5" fill="#d8d838" opacity="0.82"/><circle cx="36.7" cy="40.7" r="2.0" fill="#f0f0d8" opacity="0.66"/><circle cx="76.5" cy="63.5" r="2.0" fill="#e04848" opacity="0.50"/><circle cx="89.4" cy="48.7" r="0.8" fill="#f0f0d8" opacity="0.57"/><circle cx="47.2" cy="56.8" r="2.4" fill="#30b070" opacity="0.89"/><circle cx="61.2" cy="20.2" r="1.9" fill="#4080e0" opacity="0.61"/><circle cx="44.6" cy="69.0" r="1.9" fill="#30b070" opacity="0.86"/><circle cx="89.1" cy="39.2" r="1.8" fill="#fff" opacity="0.70"/><circle cx="78.8" cy="22.8" r="1.3" fill="#b040d0" opacity="0.69"/><circle cx="50.6" cy="39.4" r="2.8" fill="#30b0b8" opacity="0.75"/><circle cx="74.9" cy="66.9" r="2.1" fill="#f0f0d8" opacity="0.80"/><circle cx="81.4" cy="43.6" r="2.5" fill="#fff" opacity="0.56"/><circle cx="68.9" cy="35.0" r="1.6" fill="#5050e0" opacity="0.66"/><circle cx="53.1" cy="75.8" r="1.7" fill="#58c048" opacity="0.77"/><circle cx="73.0" cy="29.5" r="1.8" fill="#5050e0" opacity="0.70"/><circle cx="39.0" cy="60.8" r="2.7" fill="#58c048" opacity="0.90"/><circle cx="56.0" cy="72.2" r="1.9" fill="#d8d838" opacity="0.81"/><circle cx="79.6" cy="48.7" r="2.4" fill="#fff" opacity="0.88"/><circle cx="44.7" cy="35.8" r="2.3" fill="#f0f0d8" opacity="0.77"/><circle cx="76.8" cy="72.5" r="2.0" fill="#fff" opacity="0.78"/><circle cx="78.0" cy="28.5" r="2.7" fill="#f0f0d8" opacity="0.88"/><circle cx="75.8" cy="68.8" r="2.6" fill="#fff" opacity="0.65"/><circle cx="76.5" cy="54.8" r="1.4" fill="#fff" opacity="0.78"/><circle cx="41.4" cy="43.8" r="1.3" fill="#30b070" opacity="0.67"/><circle cx="45.7" cy="27.2" r="2.7" fill="#4080e0" opacity="0.65"/><circle cx="72.8" cy="29.0" r="2.6" fill="#b040d0" opacity="0.80"/><circle cx="65.2" cy="61.5" r="2.8" fill="#f0f0d8" opacity="0.56"/><circle cx="65.1" cy="61.0" r="1.3" fill="#e89038" opacity="0.64"/><circle cx="62.1" cy="68.7" r="2.9" fill="#fff" opacity="0.50"/><circle cx="45.7" cy="53.9" r="1.5" fill="#30b070" opacity="0.85"/><circle cx="41.3" cy="67.6" r="0.8" fill="#f0f0d8" opacity="0.61"/><circle cx="48.7" cy="47.7" r="1.5" fill="#30b0b8" opacity="0.72"/><circle cx="46.2" cy="50.3" r="1.7" fill="#30b070" opacity="0.69"/><circle cx="78.7" cy="43.1" r="2.3" fill="#b040d0" opacity="0.82"/><circle cx="54.2" cy="71.7" r="0.8" fill="#58c048" opacity="0.74"/><circle cx="36.1" cy="45.3" r="2.2" fill="#fff" opacity="0.81"/><circle cx="79.3" cy="37.5" r="0.9" fill="#b040d0" opacity="0.56"/><circle cx="78.9" cy="26.9" r="1.9" fill="#b040d0" opacity="0.62"/><circle cx="68.7" cy="35.6" r="0.8" fill="#5050e0" opacity="0.86"/><circle cx="64.39999999999998" cy="48.39999999999998" r="21" fill="url(#spk)"/></svg>
</div>
<div id="dv"><div class="ck"></div></div>
<svg class="abs" style="left:671px;top:0" width="1559" height="858" viewBox="1291 126 1559 858" font-family="Liberation Sans, sans-serif">
<defs><linearGradient id="rg" x1="0" x2="0" y1="0" y2="1"><stop offset="0" stop-color="#474747"/><stop offset="1" stop-color="#3a3a3a"/></linearGradient>
<linearGradient id="phg" x1="0" x2="0" y1="0" y2="1"><stop offset="0" stop-color="#858585"/><stop offset="1" stop-color="#5c5c5c"/></linearGradient></defs>
<defs>
<linearGradient id="gy" x1="0" x2="0" y1="0" y2="1"><stop offset="0" stop-color="#c5a12a"/><stop offset=".5" stop-color="#b08d23"/><stop offset="1" stop-color="#9e7f1f"/></linearGradient>
<linearGradient id="gb" x1="0" x2="0" y1="0" y2="1"><stop offset="0" stop-color="#30629a"/><stop offset=".5" stop-color="#2f5d8f"/><stop offset="1" stop-color="#2c5584"/></linearGradient>
<linearGradient id="gg" x1="0" x2="0" y1="0" y2="1"><stop offset="0" stop-color="#238c36"/><stop offset=".5" stop-color="#218533"/><stop offset="1" stop-color="#1f782e"/></linearGradient>
<linearGradient id="go" x1="0" x2="0" y1="0" y2="1"><stop offset="0" stop-color="#bd7320"/><stop offset=".5" stop-color="#ae691c"/><stop offset="1" stop-color="#9c5f1a"/></linearGradient>
</defs><path d="M1291.5 197 V983 M1393.8 197 V983 M1496.0 197 V983 M1598.2 197 V983 M1700.5 197 V983 M1802.8 197 V983 M1905.0 197 V983 M2007.2 197 V983 M2109.5 197 V983 M2211.8 197 V983 M2314.0 197 V983 M2416.2 197 V983 M2518.5 197 V983 M2620.8 197 V983 M2723.0 197 V983 M2825.2 197 V983 " stroke="#3c3c3c" stroke-width="1.500" fill="none"/><path d="M1291 294 H2849 M1291 392 H2849 M1291 490 H2849 M1291 588 H2849 M1291 686 H2849 M1291 784 H2849 M1291 882 H2849 " stroke="#2d2d2d" stroke-width="2" fill="none"/><path d="M1298.9 199.8 H1693.1 Q1699.6 199.8 1699.6 206.3 V285.4 Q1699.6 291.9 1693.1 291.9 H1298.9 Q1292.4 291.9 1292.4 285.4 V206.3 Q1292.4 199.8 1298.9 199.8 Z" fill="url(#gy)" stroke="#0c0c0c" stroke-width="3.800" paint-order="stroke"/><text x="1302.5" y="226" font-size="22" font-weight="bold" fill="#fff">Intro</text><path d="M1707.9 199.8 H2102.1 Q2108.6 199.8 2108.6 206.3 V285.4 Q2108.6 291.9 2102.1 291.9 H1707.9 Q1701.4 291.9 1701.4 285.4 V206.3 Q1701.4 199.8 1707.9 199.8 Z" fill="url(#gy)" stroke="#0c0c0c" stroke-width="3.800" paint-order="stroke"/><text x="1711.5" y="226" font-size="22" font-weight="bold" fill="#fff">Verse</text><path d="M2116.9 199.8 H2851.6 Q2858.1 199.8 2858.1 206.3 V285.4 Q2858.1 291.9 2851.6 291.9 H2116.9 Q2110.4 291.9 2110.4 285.4 V206.3 Q2110.4 199.8 2116.9 199.8 Z" fill="url(#gy)" stroke="#0c0c0c" stroke-width="3.800" paint-order="stroke"/><text x="2120.5" y="226" font-size="22" font-weight="bold" fill="#fff">Chorus</text><path d="M1291.5 266 H2849" stroke="#e2c766" stroke-width="1.200" opacity=".4"/><clipPath id="c0"><rect x="1292.5" y="200" width="1557.5" height="92"/></clipPath><path d="M1292.5 261.0 L1296.0 266 L1292.5 273.0 ZM1299.7 262.7 L1305.7 266 L1299.7 269.3 ZM1308.0 262.7 L1314.0 266 L1308.0 269.3 ZM1315.1 252.5 L1321.1 266 L1315.1 285.0 ZM1327.8 262.7 L1333.8 266 L1327.8 269.3 ZM1340.6 256.4 L1346.6 266 L1340.6 284.5 ZM1353.4 262.7 L1359.4 266 L1353.4 269.3 ZM1359.8 260.5 L1365.8 266 L1359.8 275.0 ZM1366.2 252.5 L1372.2 266 L1366.2 285.0 ZM1379.0 258.0 L1385.0 266 L1379.0 280.5 ZM1391.8 256.4 L1397.8 266 L1391.8 284.5 ZM1402.0 262.7 L1408.0 266 L1402.0 269.3 ZM1410.3 262.7 L1416.3 266 L1410.3 269.3 ZM1417.3 252.5 L1423.3 266 L1417.3 285.0 ZM1430.1 262.7 L1436.1 266 L1430.1 269.3 ZM1442.9 256.4 L1448.9 266 L1442.9 284.5 ZM1455.7 262.7 L1461.7 266 L1455.7 269.3 ZM1462.0 260.5 L1468.0 266 L1462.0 275.0 ZM1468.4 252.5 L1474.4 266 L1468.4 285.0 ZM1481.2 258.0 L1487.2 266 L1481.2 280.5 ZM1494.0 256.4 L1500.0 266 L1494.0 284.5 ZM1504.2 262.7 L1510.2 266 L1504.2 269.3 ZM1512.5 262.7 L1518.5 266 L1512.5 269.3 ZM1519.6 252.5 L1525.6 266 L1519.6 285.0 ZM1532.3 262.7 L1538.3 266 L1532.3 269.3 ZM1545.1 256.4 L1551.1 266 L1545.1 284.5 ZM1557.9 262.7 L1563.9 266 L1557.9 269.3 ZM1564.3 260.5 L1570.3 266 L1564.3 275.0 ZM1570.7 252.5 L1576.7 266 L1570.7 285.0 ZM1583.5 258.0 L1589.5 266 L1583.5 280.5 ZM1596.2 256.4 L1602.2 266 L1596.2 284.5 ZM1606.5 262.7 L1612.5 266 L1606.5 269.3 ZM1614.8 262.7 L1620.8 266 L1614.8 269.3 ZM1621.8 252.5 L1627.8 266 L1621.8 285.0 ZM1634.6 262.7 L1640.6 266 L1634.6 269.3 ZM1647.4 256.4 L1653.4 266 L1647.4 284.5 ZM1660.2 262.7 L1666.2 266 L1660.2 269.3 ZM1663.5 260.5 L1668.5 266 L1663.5 275.0 ZM1669.5 251.5 L1676.5 266 L1669.5 273.5 ZM1675.5 250.5 L1682.5 266 L1675.5 274.0 ZM1681.5 251.0 L1688.5 266 L1681.5 273.5 ZM1681.5 262 L1697.5 265 L1697.5 267 L1681.5 271 ZM1702.5 261.400 L1723.5 265.600 V266.400 L1702.5 270.600 ZM1712.3 262.7 L1718.3 266 L1712.3 269.3 ZM1724.1 252.5 L1730.1 266 L1724.1 285.0 ZM1737.8 262.7 L1743.8 266 L1737.8 269.3 ZM1749.6 256.4 L1755.6 266 L1749.6 284.5 ZM1763.4 262.7 L1769.4 266 L1763.4 269.3 ZM1775.2 252.5 L1781.2 266 L1775.2 285.0 ZM1789.0 262.7 L1795.0 266 L1789.0 269.3 ZM1800.8 256.4 L1806.8 266 L1800.8 284.5 ZM1814.5 262.7 L1820.5 266 L1814.5 269.3 ZM1826.3 252.5 L1832.3 266 L1826.3 285.0 ZM1840.1 262.7 L1846.1 266 L1840.1 269.3 ZM1851.9 256.4 L1857.9 266 L1851.9 284.5 ZM1865.7 262.7 L1871.7 266 L1865.7 269.3 ZM1877.4 252.5 L1883.4 266 L1877.4 285.0 ZM1891.2 262.7 L1897.2 266 L1891.2 269.3 ZM1903.0 256.4 L1909.0 266 L1903.0 284.5 ZM1916.8 262.7 L1922.8 266 L1916.8 269.3 ZM1928.6 252.5 L1934.6 266 L1928.6 285.0 ZM1942.3 262.7 L1948.3 266 L1942.3 269.3 ZM1954.1 256.4 L1960.1 266 L1954.1 284.5 ZM1967.9 262.7 L1973.9 266 L1967.9 269.3 ZM1979.7 252.5 L1985.7 266 L1979.7 285.0 ZM1993.5 262.7 L1999.5 266 L1993.5 269.3 ZM2005.2 256.4 L2011.2 266 L2005.2 284.5 ZM2019.0 262.7 L2025.0 266 L2019.0 269.3 ZM2030.8 252.5 L2036.8 266 L2030.8 285.0 ZM2044.6 262.7 L2050.6 266 L2044.6 269.3 ZM2056.4 256.4 L2062.4 266 L2056.4 284.5 ZM2070.2 262.7 L2076.2 266 L2070.2 269.3 ZM2081.9 252.5 L2087.9 266 L2081.9 285.0 ZM2095.7 262.7 L2101.7 266 L2095.7 269.3 ZM2111.5 261.400 L2132.5 265.600 V266.400 L2111.5 270.600 ZM2121.3 262.7 L2127.3 266 L2121.3 269.3 ZM2133.1 252.5 L2139.1 266 L2133.1 285.0 ZM2146.8 262.7 L2152.8 266 L2146.8 269.3 ZM2158.6 256.4 L2164.6 266 L2158.6 284.5 ZM2172.4 262.7 L2178.4 266 L2172.4 269.3 ZM2184.2 252.5 L2190.2 266 L2184.2 285.0 ZM2197.0 257.0 L2203.0 266 L2197.0 280.0 ZM2203.5 259.0 L2209.5 266 L2203.5 277.0 ZM2209.8 256.4 L2215.8 266 L2209.8 284.5 ZM2223.5 262.7 L2229.5 266 L2223.5 269.3 ZM2235.3 252.5 L2241.3 266 L2235.3 285.0 ZM2249.1 262.7 L2255.1 266 L2249.1 269.3 ZM2260.9 256.4 L2266.9 266 L2260.9 284.5 ZM2274.7 262.7 L2280.7 266 L2274.7 269.3 ZM2286.4 252.5 L2292.4 266 L2286.4 285.0 ZM2298.2 257.0 L2304.2 266 L2298.2 281.0 ZM2305.2 258.0 L2311.2 266 L2305.2 278.0 ZM2311.2 256.0 L2317.2 266 L2311.2 281.0 ZM2312.0 256.4 L2318.0 266 L2312.0 284.5 ZM2325.8 262.7 L2331.8 266 L2325.8 269.3 ZM2337.6 252.5 L2343.6 266 L2337.6 285.0 ZM2351.3 262.7 L2357.3 266 L2351.3 269.3 ZM2363.1 256.4 L2369.1 266 L2363.1 284.5 ZM2376.9 262.7 L2382.9 266 L2376.9 269.3 ZM2388.7 252.5 L2394.7 266 L2388.7 285.0 ZM2401.5 257.0 L2407.5 266 L2401.5 280.0 ZM2408.0 259.0 L2414.0 266 L2408.0 277.0 ZM2414.2 256.4 L2420.2 266 L2414.2 284.5 ZM2428.0 262.7 L2434.0 266 L2428.0 269.3 ZM2439.8 252.5 L2445.8 266 L2439.8 285.0 ZM2453.6 262.7 L2459.6 266 L2453.6 269.3 ZM2465.4 256.4 L2471.4 266 L2465.4 284.5 ZM2479.2 262.7 L2485.2 266 L2479.2 269.3 ZM2490.9 252.5 L2496.9 266 L2490.9 285.0 ZM2502.7 257.0 L2508.7 266 L2502.7 281.0 ZM2509.7 258.0 L2515.7 266 L2509.7 278.0 ZM2515.7 256.0 L2521.7 266 L2515.7 281.0 ZM2520.5 261.400 L2541.5 265.600 V266.400 L2520.5 270.600 ZM2530.3 262.7 L2536.3 266 L2530.3 269.3 ZM2542.1 252.5 L2548.1 266 L2542.1 285.0 ZM2555.8 262.7 L2561.8 266 L2555.8 269.3 ZM2567.6 256.4 L2573.6 266 L2567.6 284.5 ZM2581.4 262.7 L2587.4 266 L2581.4 269.3 ZM2593.2 252.5 L2599.2 266 L2593.2 285.0 ZM2606.0 257.0 L2612.0 266 L2606.0 280.0 ZM2612.5 259.0 L2618.5 266 L2612.5 277.0 ZM2618.8 256.4 L2624.8 266 L2618.8 284.5 ZM2632.5 262.7 L2638.5 266 L2632.5 269.3 ZM2644.3 252.5 L2650.3 266 L2644.3 285.0 ZM2658.1 262.7 L2664.1 266 L2658.1 269.3 ZM2669.9 256.4 L2675.9 266 L2669.9 284.5 ZM2683.7 262.7 L2689.7 266 L2683.7 269.3 ZM2695.4 252.5 L2701.4 266 L2695.4 285.0 ZM2707.2 257.0 L2713.2 266 L2707.2 281.0 ZM2714.2 258.0 L2720.2 266 L2714.2 278.0 ZM2720.2 256.0 L2726.2 266 L2720.2 281.0 ZM2721.0 256.4 L2727.0 266 L2721.0 284.5 ZM2734.8 262.7 L2740.8 266 L2734.8 269.3 ZM2746.6 252.5 L2752.6 266 L2746.6 285.0 ZM2760.3 262.7 L2766.3 266 L2760.3 269.3 ZM2772.1 256.4 L2778.1 266 L2772.1 284.5 ZM2785.9 262.7 L2791.9 266 L2785.9 269.3 ZM2797.7 252.5 L2803.7 266 L2797.7 285.0 ZM2810.5 257.0 L2816.5 266 L2810.5 280.0 ZM2817.0 259.0 L2823.0 266 L2817.0 277.0 ZM2823.2 256.4 L2829.2 266 L2823.2 284.5 ZM2837.0 262.7 L2843.0 266 L2837.0 269.3 ZM2848.8 252.5 L2854.8 266 L2848.8 285.0 ZM2862.6 262.7 L2868.6 266 L2862.6 269.3 ZM2874.4 256.4 L2880.4 266 L2874.4 284.5 ZM2888.2 262.7 L2894.2 266 L2888.2 269.3 ZM2899.9 252.5 L2905.9 266 L2899.9 285.0 ZM2911.7 257.0 L2917.7 266 L2911.7 281.0 ZM2918.7 258.0 L2924.7 266 L2918.7 278.0 ZM2924.7 256.0 L2930.7 266 L2924.7 281.0 Z" fill="#fdeaa6" clip-path="url(#c0)"/><path d="M1298.9 297.8 H2851.6 Q2858.1 297.8 2858.1 304.3 V383.4 Q2858.1 389.9 2851.6 389.9 H1298.9 Q1292.4 389.9 1292.4 383.4 V304.3 Q1292.4 297.8 1298.9 297.8 Z" fill="url(#gb)" stroke="#0c0c0c" stroke-width="3.800" paint-order="stroke"/><text x="1302.5" y="324" font-size="22" font-weight="bold" fill="#fff">Hat Clap</text><path d="M1488.0 296.5 H1504.0 V298 Q1496.0 298 1496.0 306 Q1496.0 298 1488.0 298 Z" fill="#141414"/><path d="M1488.0 391.5 H1504.0 V390 Q1496.0 390 1496.0 382 Q1496.0 390 1488.0 390 Z" fill="#141414"/><path d="M1692.5 296.5 H1708.5 V298 Q1700.5 298 1700.5 306 Q1700.5 298 1692.5 298 Z" fill="#141414"/><path d="M1692.5 391.5 H1708.5 V390 Q1700.5 390 1700.5 382 Q1700.5 390 1692.5 390 Z" fill="#141414"/><path d="M1897.0 296.5 H1913.0 V298 Q1905.0 298 1905.0 306 Q1905.0 298 1897.0 298 Z" fill="#141414"/><path d="M1897.0 391.5 H1913.0 V390 Q1905.0 390 1905.0 382 Q1905.0 390 1897.0 390 Z" fill="#141414"/><path d="M2101.5 296.5 H2117.5 V298 Q2109.5 298 2109.5 306 Q2109.5 298 2101.5 298 Z" fill="#141414"/><path d="M2101.5 391.5 H2117.5 V390 Q2109.5 390 2109.5 382 Q2109.5 390 2101.5 390 Z" fill="#141414"/><path d="M2306.0 296.5 H2322.0 V298 Q2314.0 298 2314.0 306 Q2314.0 298 2306.0 298 Z" fill="#141414"/><path d="M2306.0 391.5 H2322.0 V390 Q2314.0 390 2314.0 382 Q2314.0 390 2306.0 390 Z" fill="#141414"/><path d="M2510.5 296.5 H2526.5 V298 Q2518.5 298 2518.5 306 Q2518.5 298 2510.5 298 Z" fill="#141414"/><path d="M2510.5 391.5 H2526.5 V390 Q2518.5 390 2518.5 382 Q2518.5 390 2510.5 390 Z" fill="#141414"/><path d="M2715.0 296.5 H2731.0 V298 Q2723.0 298 2723.0 306 Q2723.0 298 2715.0 298 Z" fill="#141414"/><path d="M2715.0 391.5 H2731.0 V390 Q2723.0 390 2723.0 382 Q2723.0 390 2715.0 390 Z" fill="#141414"/><g fill="none" stroke="#fff" stroke-width="1.800"><circle cx="1416.0" cy="317.7" r="7.900"/><circle cx="1426.1" cy="317.7" r="7.900"/></g><path d="M1292.5 362.8 L1292.5 356.4 H1294.5 L1294.5 357.7 H1296.5 L1296.5 359.3 H1298.5 L1298.5 360.6 H1300.5 L1300.5 361.8 H1302.5 L1302.5 351.0 H1304.5 L1304.5 345.7 H1306.5 L1306.5 349.1 H1308.5 L1308.5 353.4 H1310.5 L1310.5 356.7 H1312.5 L1312.5 360.1 H1314.5 L1314.5 348.3 H1316.5 L1316.5 341.6 H1318.5 L1318.5 345.7 H1320.5 L1320.5 352.0 H1322.5 L1322.5 355.9 H1324.5 L1324.5 359.7 H1326.5 L1326.5 362.0 H1328.5 L1328.5 351.2 H1330.5 L1330.5 345.2 H1332.5 L1332.5 349.1 H1334.5 L1334.5 353.4 H1336.5 L1336.5 357.2 H1338.5 L1338.5 360.0 H1340.5 L1340.5 358.5 H1342.5 L1342.5 356.6 H1344.5 L1344.5 357.5 H1346.5 L1346.5 359.3 H1348.5 L1348.5 360.6 H1350.5 L1350.5 360.9 H1352.5 L1352.5 351.6 H1354.5 L1354.5 346.0 H1356.5 L1356.5 349.6 H1358.5 L1358.5 353.3 H1360.5 L1360.5 357.2 H1362.5 L1362.5 357.8 H1364.5 L1364.5 360.3 H1366.5 L1366.5 347.7 H1368.5 L1368.5 341.3 H1370.5 L1370.5 343.9 H1372.5 L1372.5 350.2 H1374.5 L1374.5 355.1 H1376.5 L1376.5 359.3 H1378.5 L1378.5 353.0 H1380.5 L1380.5 348.6 H1382.5 L1382.5 350.5 H1384.5 L1384.5 354.6 H1386.5 L1386.5 357.9 H1388.5 L1388.5 358.5 H1390.5 L1390.5 360.7 H1392.5 L1392.5 358.8 H1394.5 L1394.5 356.8 H1396.5 L1396.5 358.1 H1398.5 L1398.5 359.7 H1400.5 L1400.5 360.8 H1402.5 L1402.5 361.9 H1404.5 L1404.5 350.3 H1406.5 L1406.5 345.1 H1408.5 L1408.5 348.6 H1410.5 L1410.5 353.4 H1412.5 L1412.5 356.7 H1414.5 L1414.5 357.7 H1416.5 L1416.5 346.2 H1418.5 L1418.5 340.4 H1420.5 L1420.5 344.0 H1422.5 L1422.5 350.0 H1424.5 L1424.5 354.7 H1426.5 L1426.5 355.9 H1428.5 L1428.5 359.2 H1430.5 L1430.5 351.7 H1432.5 L1432.5 346.2 H1434.5 L1434.5 349.1 H1436.5 L1436.5 353.9 H1438.5 L1438.5 357.5 H1440.5 L1440.5 360.1 H1442.5 L1442.5 358.9 H1444.5 L1444.5 357.2 H1446.5 L1446.5 358.2 H1448.5 L1448.5 359.7 H1450.5 L1450.5 360.9 H1452.5 L1452.5 361.9 H1454.5 L1454.5 362.0 H1456.5 L1456.5 351.8 H1458.5 L1458.5 347.3 H1460.5 L1460.5 349.7 H1462.5 L1462.5 354.1 H1464.5 L1464.5 357.6 H1466.5 L1466.5 360.3 H1468.5 L1468.5 346.3 H1470.5 L1470.5 338.7 H1472.5 L1472.5 342.8 H1474.5 L1474.5 349.8 H1476.5 L1476.5 354.9 H1478.5 L1478.5 359.0 H1480.5 L1480.5 352.5 H1482.5 L1482.5 347.8 H1484.5 L1484.5 350.2 H1486.5 L1486.5 354.4 H1488.5 L1488.5 357.6 H1490.5 L1490.5 360.3 H1492.5 L1492.5 361.9 H1494.0 L1494.0 362.8 L1494.0 363.7 H1492.5 L1492.5 365.2 H1490.5 L1490.5 368.4 H1488.5 L1488.5 371.1 H1486.5 L1486.5 374.6 H1484.5 L1484.5 377.1 H1482.5 L1482.5 374.1 H1480.5 L1480.5 366.7 H1478.5 L1478.5 371.0 H1476.5 L1476.5 377.1 H1474.5 L1474.5 383.2 H1472.5 L1472.5 386.8 H1470.5 L1470.5 378.7 H1468.5 L1468.5 365.2 H1466.5 L1466.5 368.0 H1464.5 L1464.5 371.3 H1462.5 L1462.5 375.0 H1460.5 L1460.5 379.3 H1458.5 L1458.5 374.3 H1456.5 L1456.5 363.6 H1454.5 L1454.5 363.7 H1452.5 L1452.5 364.8 H1450.5 L1450.5 365.8 H1448.5 L1448.5 367.4 H1446.5 L1446.5 368.1 H1444.5 L1444.5 366.8 H1442.5 L1442.5 365.4 H1440.5 L1440.5 368.6 H1438.5 L1438.5 371.8 H1436.5 L1436.5 377.1 H1434.5 L1434.5 379.6 H1432.5 L1432.5 374.8 H1430.5 L1430.5 366.5 H1428.5 L1428.5 370.1 H1426.5 L1426.5 371.2 H1424.5 L1424.5 376.5 H1422.5 L1422.5 382.8 H1420.5 L1420.5 386.7 H1418.5 L1418.5 379.6 H1416.5 L1416.5 368.5 H1414.5 L1414.5 369.0 H1412.5 L1412.5 372.5 H1410.5 L1410.5 377.8 H1408.5 L1408.5 381.2 H1406.5 L1406.5 375.6 H1404.5 L1404.5 363.8 H1402.5 L1402.5 364.9 H1400.5 L1400.5 365.9 H1398.5 L1398.5 367.5 H1396.5 L1396.5 368.8 H1394.5 L1394.5 367.2 H1392.5 L1392.5 364.9 H1390.5 L1390.5 367.0 H1388.5 L1388.5 367.9 H1386.5 L1386.5 370.8 H1384.5 L1384.5 375.4 H1382.5 L1382.5 377.3 H1380.5 L1380.5 373.6 H1378.5 L1378.5 366.4 H1376.5 L1376.5 370.9 H1374.5 L1374.5 376.2 H1372.5 L1372.5 380.4 H1370.5 L1370.5 385.5 H1368.5 L1368.5 379.7 H1366.5 L1366.5 365.3 H1364.5 L1364.5 368.1 H1362.5 L1362.5 368.3 H1360.5 L1360.5 372.1 H1358.5 L1358.5 375.7 H1356.5 L1356.5 380.9 H1354.5 L1354.5 374.0 H1352.5 L1352.5 364.7 H1350.5 L1350.5 365.0 H1348.5 L1348.5 366.6 H1346.5 L1346.5 368.5 H1344.5 L1344.5 369.2 H1342.5 L1342.5 367.7 H1340.5 L1340.5 365.7 H1338.5 L1338.5 368.9 H1336.5 L1336.5 372.7 H1334.5 L1334.5 376.6 H1332.5 L1332.5 381.2 H1330.5 L1330.5 375.3 H1328.5 L1328.5 363.7 H1326.5 L1326.5 365.9 H1324.5 L1324.5 369.9 H1322.5 L1322.5 374.7 H1320.5 L1320.5 380.7 H1318.5 L1318.5 382.0 H1316.5 L1316.5 376.3 H1314.5 L1314.5 365.6 H1312.5 L1312.5 368.8 H1310.5 L1310.5 372.2 H1308.5 L1308.5 377.7 H1306.5 L1306.5 380.7 H1304.5 L1304.5 374.3 H1302.5 L1302.5 363.8 H1300.5 L1300.5 364.9 H1298.5 L1298.5 366.6 H1296.5 L1296.5 368.4 H1294.5 L1294.5 369.4 H1292.5 Z" fill="#a9c9ec"/><path d="M1498.0 362.8 L1498.0 356.4 H1500.0 L1500.0 359.4 H1502.0 L1502.0 360.6 H1504.0 L1504.0 361.8 H1506.0 L1506.0 350.8 H1508.0 L1508.0 345.9 H1510.0 L1510.0 348.8 H1512.0 L1512.0 353.6 H1514.0 L1514.0 357.0 H1516.0 L1516.0 359.9 H1518.0 L1518.0 361.9 H1520.0 L1520.0 348.3 H1522.0 L1522.0 341.6 H1524.0 L1524.0 345.7 H1526.0 L1526.0 352.0 H1528.0 L1528.0 355.9 H1530.0 L1530.0 359.7 H1532.0 L1532.0 351.2 H1534.0 L1534.0 346.3 H1536.0 L1536.0 348.4 H1538.0 L1538.0 353.6 H1540.0 L1540.0 357.0 H1542.0 L1542.0 360.2 H1544.0 L1544.0 361.9 H1546.0 L1546.0 358.5 H1548.0 L1548.0 356.6 H1550.0 L1550.0 357.5 H1552.0 L1552.0 359.3 H1554.0 L1554.0 360.6 H1556.0 L1556.0 361.8 H1558.0 L1558.0 351.6 H1560.0 L1560.0 346.0 H1562.0 L1562.0 349.6 H1564.0 L1564.0 353.3 H1566.0 L1566.0 357.2 H1568.0 L1568.0 360.1 H1570.0 L1570.0 347.2 H1572.0 L1572.0 341.2 H1574.0 L1574.0 345.1 H1576.0 L1576.0 350.1 H1578.0 L1578.0 355.0 H1580.0 L1580.0 359.2 H1582.0 L1582.0 362.0 H1584.0 L1584.0 353.0 H1586.0 L1586.0 348.6 H1588.0 L1588.0 350.5 H1590.0 L1590.0 354.6 H1592.0 L1592.0 357.9 H1594.0 L1594.0 360.5 H1596.0 L1596.0 358.8 H1598.0 L1598.0 357.1 H1600.0 L1600.0 357.9 H1602.0 L1602.0 359.6 H1604.0 L1604.0 360.9 H1606.0 L1606.0 361.9 H1608.0 L1608.0 361.9 H1610.0 L1610.0 350.3 H1612.0 L1612.0 345.1 H1614.0 L1614.0 348.6 H1616.0 L1616.0 353.4 H1618.0 L1618.0 356.7 H1620.0 L1620.0 360.1 H1622.0 L1622.0 346.2 H1624.0 L1624.0 340.4 H1626.0 L1626.0 344.0 H1628.0 L1628.0 350.0 H1630.0 L1630.0 354.7 H1632.0 L1632.0 359.1 H1634.0 L1634.0 351.3 H1636.0 L1636.0 346.9 H1638.0 L1638.0 349.2 H1640.0 L1640.0 353.6 H1642.0 L1642.0 357.3 H1644.0 L1644.0 358.1 H1646.0 L1646.0 360.3 H1648.0 L1648.0 358.9 H1650.0 L1650.0 357.2 H1652.0 L1652.0 358.2 H1654.0 L1654.0 359.7 H1656.0 L1656.0 360.9 H1658.0 L1658.0 361.9 H1660.0 L1660.0 352.2 H1662.0 L1662.0 347.1 H1664.0 L1664.0 350.1 H1666.0 L1666.0 354.0 H1668.0 L1668.0 357.4 H1670.0 L1670.0 358.2 H1672.0 L1672.0 346.2 H1674.0 L1674.0 339.3 H1676.0 L1676.0 343.1 H1678.0 L1678.0 349.4 H1680.0 L1680.0 354.8 H1682.0 L1682.0 359.1 H1684.0 L1684.0 362.0 H1686.0 L1686.0 352.5 H1688.0 L1688.0 347.8 H1690.0 L1690.0 350.2 H1692.0 L1692.0 354.4 H1694.0 L1694.0 357.6 H1696.0 L1696.0 360.3 H1698.0 L1698.0 361.9 H1698.5 L1698.5 362.8 L1698.5 363.7 H1698.0 L1698.0 365.2 H1696.0 L1696.0 368.4 H1694.0 L1694.0 371.1 H1692.0 L1692.0 374.6 H1690.0 L1690.0 377.1 H1688.0 L1688.0 374.1 H1686.0 L1686.0 363.7 H1684.0 L1684.0 366.7 H1682.0 L1682.0 371.6 H1680.0 L1680.0 376.5 H1678.0 L1678.0 382.5 H1676.0 L1676.0 385.5 H1674.0 L1674.0 379.1 H1672.0 L1672.0 367.3 H1670.0 L1670.0 368.0 H1668.0 L1668.0 371.0 H1666.0 L1666.0 376.4 H1664.0 L1664.0 379.2 H1662.0 L1662.0 373.5 H1660.0 L1660.0 363.7 H1658.0 L1658.0 364.8 H1656.0 L1656.0 365.8 H1654.0 L1654.0 367.4 H1652.0 L1652.0 368.1 H1650.0 L1650.0 366.8 H1648.0 L1648.0 365.2 H1646.0 L1646.0 368.0 H1644.0 L1644.0 368.4 H1642.0 L1642.0 372.4 H1640.0 L1640.0 376.6 H1638.0 L1638.0 380.0 H1636.0 L1636.0 374.8 H1634.0 L1634.0 366.7 H1632.0 L1632.0 371.2 H1630.0 L1630.0 376.5 H1628.0 L1628.0 382.8 H1626.0 L1626.0 386.7 H1624.0 L1624.0 379.6 H1622.0 L1622.0 365.8 H1620.0 L1620.0 369.0 H1618.0 L1618.0 372.5 H1616.0 L1616.0 377.8 H1614.0 L1614.0 381.2 H1612.0 L1612.0 375.6 H1610.0 L1610.0 363.7 H1608.0 L1608.0 363.8 H1606.0 L1606.0 364.7 H1604.0 L1604.0 366.0 H1602.0 L1602.0 367.7 H1600.0 L1600.0 369.1 H1598.0 L1598.0 366.7 H1596.0 L1596.0 365.1 H1594.0 L1594.0 367.9 H1592.0 L1592.0 370.8 H1590.0 L1590.0 375.4 H1588.0 L1588.0 377.3 H1586.0 L1586.0 373.6 H1584.0 L1584.0 363.7 H1582.0 L1582.0 366.6 H1580.0 L1580.0 371.1 H1578.0 L1578.0 374.6 H1576.0 L1576.0 381.4 H1574.0 L1574.0 387.0 H1572.0 L1572.0 378.5 H1570.0 L1570.0 365.6 H1568.0 L1568.0 368.3 H1566.0 L1566.0 372.1 H1564.0 L1564.0 375.7 H1562.0 L1562.0 380.9 H1560.0 L1560.0 374.0 H1558.0 L1558.0 363.8 H1556.0 L1556.0 365.0 H1554.0 L1554.0 366.6 H1552.0 L1552.0 368.5 H1550.0 L1550.0 369.2 H1548.0 L1548.0 367.7 H1546.0 L1546.0 363.7 H1544.0 L1544.0 365.7 H1542.0 L1542.0 368.9 H1540.0 L1540.0 372.1 H1538.0 L1538.0 377.9 H1536.0 L1536.0 380.7 H1534.0 L1534.0 375.7 H1532.0 L1532.0 365.9 H1530.0 L1530.0 369.9 H1528.0 L1528.0 374.7 H1526.0 L1526.0 380.7 H1524.0 L1524.0 382.0 H1522.0 L1522.0 376.3 H1520.0 L1520.0 363.7 H1518.0 L1518.0 365.6 H1516.0 L1516.0 368.6 H1514.0 L1514.0 372.8 H1512.0 L1512.0 377.5 H1510.0 L1510.0 379.3 H1508.0 L1508.0 374.5 H1506.0 L1506.0 363.8 H1504.0 L1504.0 365.1 H1502.0 L1502.0 366.6 H1500.0 L1500.0 369.4 H1498.0 Z" fill="#5b86b8"/><path d="M1702.5 362.8 L1702.5 356.4 H1704.5 L1704.5 359.4 H1706.5 L1706.5 360.6 H1708.5 L1708.5 361.8 H1710.5 L1710.5 350.8 H1712.5 L1712.5 345.9 H1714.5 L1714.5 348.8 H1716.5 L1716.5 353.6 H1718.5 L1718.5 357.0 H1720.5 L1720.5 359.9 H1722.5 L1722.5 361.9 H1724.5 L1724.5 348.3 H1726.5 L1726.5 341.6 H1728.5 L1728.5 345.7 H1730.5 L1730.5 352.0 H1732.5 L1732.5 355.9 H1734.5 L1734.5 359.7 H1736.5 L1736.5 351.2 H1738.5 L1738.5 346.3 H1740.5 L1740.5 348.4 H1742.5 L1742.5 353.6 H1744.5 L1744.5 357.0 H1746.5 L1746.5 360.2 H1748.5 L1748.5 361.9 H1750.5 L1750.5 358.5 H1752.5 L1752.5 356.6 H1754.5 L1754.5 357.5 H1756.5 L1756.5 359.3 H1758.5 L1758.5 360.6 H1760.5 L1760.5 361.8 H1762.5 L1762.5 351.6 H1764.5 L1764.5 346.0 H1766.5 L1766.5 349.6 H1768.5 L1768.5 353.3 H1770.5 L1770.5 357.2 H1772.5 L1772.5 360.1 H1774.5 L1774.5 347.2 H1776.5 L1776.5 341.2 H1778.5 L1778.5 345.1 H1780.5 L1780.5 350.1 H1782.5 L1782.5 355.0 H1784.5 L1784.5 359.2 H1786.5 L1786.5 362.0 H1788.5 L1788.5 353.0 H1790.5 L1790.5 348.6 H1792.5 L1792.5 350.5 H1794.5 L1794.5 354.6 H1796.5 L1796.5 357.9 H1798.5 L1798.5 360.5 H1800.5 L1800.5 358.8 H1802.5 L1802.5 357.1 H1804.5 L1804.5 357.9 H1806.5 L1806.5 359.6 H1808.5 L1808.5 360.9 H1810.5 L1810.5 361.9 H1812.5 L1812.5 361.9 H1814.5 L1814.5 350.3 H1816.5 L1816.5 345.1 H1818.5 L1818.5 348.6 H1820.5 L1820.5 353.4 H1822.5 L1822.5 356.7 H1824.5 L1824.5 360.1 H1826.5 L1826.5 346.2 H1828.5 L1828.5 340.4 H1830.5 L1830.5 344.0 H1832.5 L1832.5 350.0 H1834.5 L1834.5 354.7 H1836.5 L1836.5 359.1 H1838.5 L1838.5 351.3 H1840.5 L1840.5 346.9 H1842.5 L1842.5 349.2 H1844.5 L1844.5 353.6 H1846.5 L1846.5 357.3 H1848.5 L1848.5 358.1 H1850.5 L1850.5 360.3 H1852.5 L1852.5 358.9 H1854.5 L1854.5 357.2 H1856.5 L1856.5 358.2 H1858.5 L1858.5 359.7 H1860.5 L1860.5 360.9 H1862.5 L1862.5 361.9 H1864.5 L1864.5 352.2 H1866.5 L1866.5 347.1 H1868.5 L1868.5 350.1 H1870.5 L1870.5 354.0 H1872.5 L1872.5 357.4 H1874.5 L1874.5 358.2 H1876.5 L1876.5 346.2 H1878.5 L1878.5 339.3 H1880.5 L1880.5 343.1 H1882.5 L1882.5 349.4 H1884.5 L1884.5 354.8 H1886.5 L1886.5 359.1 H1888.5 L1888.5 362.0 H1890.5 L1890.5 352.5 H1892.5 L1892.5 347.8 H1894.5 L1894.5 350.2 H1896.5 L1896.5 354.4 H1898.5 L1898.5 357.6 H1900.5 L1900.5 360.3 H1902.5 L1902.5 361.9 H1903.0 L1903.0 362.8 L1903.0 363.7 H1902.5 L1902.5 365.2 H1900.5 L1900.5 368.4 H1898.5 L1898.5 371.1 H1896.5 L1896.5 374.6 H1894.5 L1894.5 377.1 H1892.5 L1892.5 374.1 H1890.5 L1890.5 363.7 H1888.5 L1888.5 366.7 H1886.5 L1886.5 371.6 H1884.5 L1884.5 376.5 H1882.5 L1882.5 382.5 H1880.5 L1880.5 385.5 H1878.5 L1878.5 379.1 H1876.5 L1876.5 367.3 H1874.5 L1874.5 368.0 H1872.5 L1872.5 371.0 H1870.5 L1870.5 376.4 H1868.5 L1868.5 379.2 H1866.5 L1866.5 373.5 H1864.5 L1864.5 363.7 H1862.5 L1862.5 364.8 H1860.5 L1860.5 365.8 H1858.5 L1858.5 367.4 H1856.5 L1856.5 368.1 H1854.5 L1854.5 366.8 H1852.5 L1852.5 365.2 H1850.5 L1850.5 368.0 H1848.5 L1848.5 368.4 H1846.5 L1846.5 372.4 H1844.5 L1844.5 376.6 H1842.5 L1842.5 380.0 H1840.5 L1840.5 374.8 H1838.5 L1838.5 366.7 H1836.5 L1836.5 371.2 H1834.5 L1834.5 376.5 H1832.5 L1832.5 382.8 H1830.5 L1830.5 386.7 H1828.5 L1828.5 379.6 H1826.5 L1826.5 365.8 H1824.5 L1824.5 369.0 H1822.5 L1822.5 372.5 H1820.5 L1820.5 377.8 H1818.5 L1818.5 381.2 H1816.5 L1816.5 375.6 H1814.5 L1814.5 363.7 H1812.5 L1812.5 363.8 H1810.5 L1810.5 364.7 H1808.5 L1808.5 366.0 H1806.5 L1806.5 367.7 H1804.5 L1804.5 369.1 H1802.5 L1802.5 366.7 H1800.5 L1800.5 365.1 H1798.5 L1798.5 367.9 H1796.5 L1796.5 370.8 H1794.5 L1794.5 375.4 H1792.5 L1792.5 377.3 H1790.5 L1790.5 373.6 H1788.5 L1788.5 363.7 H1786.5 L1786.5 366.6 H1784.5 L1784.5 371.1 H1782.5 L1782.5 374.6 H1780.5 L1780.5 381.4 H1778.5 L1778.5 387.0 H1776.5 L1776.5 378.5 H1774.5 L1774.5 365.6 H1772.5 L1772.5 368.3 H1770.5 L1770.5 372.1 H1768.5 L1768.5 375.7 H1766.5 L1766.5 380.9 H1764.5 L1764.5 374.0 H1762.5 L1762.5 363.8 H1760.5 L1760.5 365.0 H1758.5 L1758.5 366.6 H1756.5 L1756.5 368.5 H1754.5 L1754.5 369.2 H1752.5 L1752.5 367.7 H1750.5 L1750.5 363.7 H1748.5 L1748.5 365.7 H1746.5 L1746.5 368.9 H1744.5 L1744.5 372.1 H1742.5 L1742.5 377.9 H1740.5 L1740.5 380.7 H1738.5 L1738.5 375.7 H1736.5 L1736.5 365.9 H1734.5 L1734.5 369.9 H1732.5 L1732.5 374.7 H1730.5 L1730.5 380.7 H1728.5 L1728.5 382.0 H1726.5 L1726.5 376.3 H1724.5 L1724.5 363.7 H1722.5 L1722.5 365.6 H1720.5 L1720.5 368.6 H1718.5 L1718.5 372.8 H1716.5 L1716.5 377.5 H1714.5 L1714.5 379.3 H1712.5 L1712.5 374.5 H1710.5 L1710.5 363.8 H1708.5 L1708.5 365.1 H1706.5 L1706.5 366.6 H1704.5 L1704.5 369.4 H1702.5 Z" fill="#5b86b8"/><path d="M1907.0 362.8 L1907.0 356.4 H1909.0 L1909.0 359.4 H1911.0 L1911.0 360.6 H1913.0 L1913.0 361.8 H1915.0 L1915.0 350.8 H1917.0 L1917.0 345.9 H1919.0 L1919.0 348.8 H1921.0 L1921.0 353.6 H1923.0 L1923.0 357.0 H1925.0 L1925.0 359.9 H1927.0 L1927.0 361.9 H1929.0 L1929.0 348.3 H1931.0 L1931.0 341.6 H1933.0 L1933.0 345.7 H1935.0 L1935.0 352.0 H1937.0 L1937.0 355.9 H1939.0 L1939.0 359.7 H1941.0 L1941.0 351.2 H1943.0 L1943.0 346.3 H1945.0 L1945.0 348.4 H1947.0 L1947.0 353.6 H1949.0 L1949.0 357.0 H1951.0 L1951.0 360.2 H1953.0 L1953.0 361.9 H1955.0 L1955.0 358.5 H1957.0 L1957.0 356.6 H1959.0 L1959.0 357.5 H1961.0 L1961.0 359.3 H1963.0 L1963.0 360.6 H1965.0 L1965.0 361.8 H1967.0 L1967.0 351.6 H1969.0 L1969.0 346.0 H1971.0 L1971.0 349.6 H1973.0 L1973.0 353.3 H1975.0 L1975.0 357.2 H1977.0 L1977.0 360.1 H1979.0 L1979.0 347.2 H1981.0 L1981.0 341.2 H1983.0 L1983.0 345.1 H1985.0 L1985.0 350.1 H1987.0 L1987.0 355.0 H1989.0 L1989.0 359.2 H1991.0 L1991.0 362.0 H1993.0 L1993.0 353.0 H1995.0 L1995.0 348.6 H1997.0 L1997.0 350.5 H1999.0 L1999.0 354.6 H2001.0 L2001.0 357.9 H2003.0 L2003.0 360.5 H2005.0 L2005.0 358.8 H2007.0 L2007.0 357.1 H2009.0 L2009.0 357.9 H2011.0 L2011.0 359.6 H2013.0 L2013.0 360.9 H2015.0 L2015.0 361.9 H2017.0 L2017.0 361.9 H2019.0 L2019.0 350.3 H2021.0 L2021.0 345.1 H2023.0 L2023.0 348.6 H2025.0 L2025.0 353.4 H2027.0 L2027.0 356.7 H2029.0 L2029.0 360.1 H2031.0 L2031.0 346.2 H2033.0 L2033.0 340.4 H2035.0 L2035.0 344.0 H2037.0 L2037.0 350.0 H2039.0 L2039.0 354.7 H2041.0 L2041.0 359.1 H2043.0 L2043.0 351.3 H2045.0 L2045.0 346.9 H2047.0 L2047.0 349.2 H2049.0 L2049.0 353.6 H2051.0 L2051.0 357.3 H2053.0 L2053.0 358.1 H2055.0 L2055.0 360.3 H2057.0 L2057.0 358.9 H2059.0 L2059.0 357.2 H2061.0 L2061.0 358.2 H2063.0 L2063.0 359.7 H2065.0 L2065.0 360.9 H2067.0 L2067.0 361.9 H2069.0 L2069.0 352.2 H2071.0 L2071.0 347.1 H2073.0 L2073.0 350.1 H2075.0 L2075.0 354.0 H2077.0 L2077.0 357.4 H2079.0 L2079.0 358.2 H2081.0 L2081.0 346.2 H2083.0 L2083.0 339.3 H2085.0 L2085.0 343.1 H2087.0 L2087.0 349.4 H2089.0 L2089.0 354.8 H2091.0 L2091.0 359.1 H2093.0 L2093.0 362.0 H2095.0 L2095.0 352.5 H2097.0 L2097.0 347.8 H2099.0 L2099.0 350.2 H2101.0 L2101.0 354.4 H2103.0 L2103.0 357.6 H2105.0 L2105.0 360.3 H2107.0 L2107.0 361.9 H2107.5 L2107.5 362.8 L2107.5 363.7 H2107.0 L2107.0 365.2 H2105.0 L2105.0 368.4 H2103.0 L2103.0 371.1 H2101.0 L2101.0 374.6 H2099.0 L2099.0 377.1 H2097.0 L2097.0 374.1 H2095.0 L2095.0 363.7 H2093.0 L2093.0 366.7 H2091.0 L2091.0 371.6 H2089.0 L2089.0 376.5 H2087.0 L2087.0 382.5 H2085.0 L2085.0 385.5 H2083.0 L2083.0 379.1 H2081.0 L2081.0 367.3 H2079.0 L2079.0 368.0 H2077.0 L2077.0 371.0 H2075.0 L2075.0 376.4 H2073.0 L2073.0 379.2 H2071.0 L2071.0 373.5 H2069.0 L2069.0 363.7 H2067.0 L2067.0 364.8 H2065.0 L2065.0 365.8 H2063.0 L2063.0 367.4 H2061.0 L2061.0 368.1 H2059.0 L2059.0 366.8 H2057.0 L2057.0 365.2 H2055.0 L2055.0 368.0 H2053.0 L2053.0 368.4 H2051.0 L2051.0 372.4 H2049.0 L2049.0 376.6 H2047.0 L2047.0 380.0 H2045.0 L2045.0 374.8 H2043.0 L2043.0 366.7 H2041.0 L2041.0 371.2 H2039.0 L2039.0 376.5 H2037.0 L2037.0 382.8 H2035.0 L2035.0 386.7 H2033.0 L2033.0 379.6 H2031.0 L2031.0 365.8 H2029.0 L2029.0 369.0 H2027.0 L2027.0 372.5 H2025.0 L2025.0 377.8 H2023.0 L2023.0 381.2 H2021.0 L2021.0 375.6 H2019.0 L2019.0 363.7 H2017.0 L2017.0 363.8 H2015.0 L2015.0 364.7 H2013.0 L2013.0 366.0 H2011.0 L2011.0 367.7 H2009.0 L2009.0 369.1 H2007.0 L2007.0 366.7 H2005.0 L2005.0 365.1 H2003.0 L2003.0 367.9 H2001.0 L2001.0 370.8 H1999.0 L1999.0 375.4 H1997.0 L1997.0 377.3 H1995.0 L1995.0 373.6 H1993.0 L1993.0 363.7 H1991.0 L1991.0 366.6 H1989.0 L1989.0 371.1 H1987.0 L1987.0 374.6 H1985.0 L1985.0 381.4 H1983.0 L1983.0 387.0 H1981.0 L1981.0 378.5 H1979.0 L1979.0 365.6 H1977.0 L1977.0 368.3 H1975.0 L1975.0 372.1 H1973.0 L1973.0 375.7 H1971.0 L1971.0 380.9 H1969.0 L1969.0 374.0 H1967.0 L1967.0 363.8 H1965.0 L1965.0 365.0 H1963.0 L1963.0 366.6 H1961.0 L1961.0 368.5 H1959.0 L1959.0 369.2 H1957.0 L1957.0 367.7 H1955.0 L1955.0 363.7 H1953.0 L1953.0 365.7 H1951.0 L1951.0 368.9 H1949.0 L1949.0 372.1 H1947.0 L1947.0 377.9 H1945.0 L1945.0 380.7 H1943.0 L1943.0 375.7 H1941.0 L1941.0 365.9 H1939.0 L1939.0 369.9 H1937.0 L1937.0 374.7 H1935.0 L1935.0 380.7 H1933.0 L1933.0 382.0 H1931.0 L1931.0 376.3 H1929.0 L1929.0 363.7 H1927.0 L1927.0 365.6 H1925.0 L1925.0 368.6 H1923.0 L1923.0 372.8 H1921.0 L1921.0 377.5 H1919.0 L1919.0 379.3 H1917.0 L1917.0 374.5 H1915.0 L1915.0 363.8 H1913.0 L1913.0 365.1 H1911.0 L1911.0 366.6 H1909.0 L1909.0 369.4 H1907.0 Z" fill="#5b86b8"/><path d="M2111.5 362.8 L2111.5 356.4 H2113.5 L2113.5 359.4 H2115.5 L2115.5 360.6 H2117.5 L2117.5 361.8 H2119.5 L2119.5 350.8 H2121.5 L2121.5 345.9 H2123.5 L2123.5 348.8 H2125.5 L2125.5 353.6 H2127.5 L2127.5 357.0 H2129.5 L2129.5 359.9 H2131.5 L2131.5 361.9 H2133.5 L2133.5 348.3 H2135.5 L2135.5 341.6 H2137.5 L2137.5 345.7 H2139.5 L2139.5 352.0 H2141.5 L2141.5 355.9 H2143.5 L2143.5 359.7 H2145.5 L2145.5 351.2 H2147.5 L2147.5 346.3 H2149.5 L2149.5 348.4 H2151.5 L2151.5 353.6 H2153.5 L2153.5 357.0 H2155.5 L2155.5 360.2 H2157.5 L2157.5 361.9 H2159.5 L2159.5 358.5 H2161.5 L2161.5 356.6 H2163.5 L2163.5 357.5 H2165.5 L2165.5 359.3 H2167.5 L2167.5 360.6 H2169.5 L2169.5 361.8 H2171.5 L2171.5 351.6 H2173.5 L2173.5 346.0 H2175.5 L2175.5 349.6 H2177.5 L2177.5 353.3 H2179.5 L2179.5 357.2 H2181.5 L2181.5 360.1 H2183.5 L2183.5 347.2 H2185.5 L2185.5 341.2 H2187.5 L2187.5 345.1 H2189.5 L2189.5 350.1 H2191.5 L2191.5 355.0 H2193.5 L2193.5 359.2 H2195.5 L2195.5 362.0 H2197.5 L2197.5 353.0 H2199.5 L2199.5 348.6 H2201.5 L2201.5 350.5 H2203.5 L2203.5 354.6 H2205.5 L2205.5 357.9 H2207.5 L2207.5 360.5 H2209.5 L2209.5 358.8 H2211.5 L2211.5 357.1 H2213.5 L2213.5 357.9 H2215.5 L2215.5 359.6 H2217.5 L2217.5 360.9 H2219.5 L2219.5 361.9 H2221.5 L2221.5 361.9 H2223.5 L2223.5 350.3 H2225.5 L2225.5 345.1 H2227.5 L2227.5 348.6 H2229.5 L2229.5 353.4 H2231.5 L2231.5 356.7 H2233.5 L2233.5 360.1 H2235.5 L2235.5 346.2 H2237.5 L2237.5 340.4 H2239.5 L2239.5 344.0 H2241.5 L2241.5 350.0 H2243.5 L2243.5 354.7 H2245.5 L2245.5 359.1 H2247.5 L2247.5 351.3 H2249.5 L2249.5 346.9 H2251.5 L2251.5 349.2 H2253.5 L2253.5 353.6 H2255.5 L2255.5 357.3 H2257.5 L2257.5 358.1 H2259.5 L2259.5 360.3 H2261.5 L2261.5 358.9 H2263.5 L2263.5 357.2 H2265.5 L2265.5 358.2 H2267.5 L2267.5 359.7 H2269.5 L2269.5 360.9 H2271.5 L2271.5 361.9 H2273.5 L2273.5 352.2 H2275.5 L2275.5 347.1 H2277.5 L2277.5 350.1 H2279.5 L2279.5 354.0 H2281.5 L2281.5 357.4 H2283.5 L2283.5 358.2 H2285.5 L2285.5 346.2 H2287.5 L2287.5 339.3 H2289.5 L2289.5 343.1 H2291.5 L2291.5 349.4 H2293.5 L2293.5 354.8 H2295.5 L2295.5 359.1 H2297.5 L2297.5 362.0 H2299.5 L2299.5 352.5 H2301.5 L2301.5 347.8 H2303.5 L2303.5 350.2 H2305.5 L2305.5 354.4 H2307.5 L2307.5 357.6 H2309.5 L2309.5 360.3 H2311.5 L2311.5 361.9 H2312.0 L2312.0 362.8 L2312.0 363.7 H2311.5 L2311.5 365.2 H2309.5 L2309.5 368.4 H2307.5 L2307.5 371.1 H2305.5 L2305.5 374.6 H2303.5 L2303.5 377.1 H2301.5 L2301.5 374.1 H2299.5 L2299.5 363.7 H2297.5 L2297.5 366.7 H2295.5 L2295.5 371.6 H2293.5 L2293.5 376.5 H2291.5 L2291.5 382.5 H2289.5 L2289.5 385.5 H2287.5 L2287.5 379.1 H2285.5 L2285.5 367.3 H2283.5 L2283.5 368.0 H2281.5 L2281.5 371.0 H2279.5 L2279.5 376.4 H2277.5 L2277.5 379.2 H2275.5 L2275.5 373.5 H2273.5 L2273.5 363.7 H2271.5 L2271.5 364.8 H2269.5 L2269.5 365.8 H2267.5 L2267.5 367.4 H2265.5 L2265.5 368.1 H2263.5 L2263.5 366.8 H2261.5 L2261.5 365.2 H2259.5 L2259.5 368.0 H2257.5 L2257.5 368.4 H2255.5 L2255.5 372.4 H2253.5 L2253.5 376.6 H2251.5 L2251.5 380.0 H2249.5 L2249.5 374.8 H2247.5 L2247.5 366.7 H2245.5 L2245.5 371.2 H2243.5 L2243.5 376.5 H2241.5 L2241.5 382.8 H2239.5 L2239.5 386.7 H2237.5 L2237.5 379.6 H2235.5 L2235.5 365.8 H2233.5 L2233.5 369.0 H2231.5 L2231.5 372.5 H2229.5 L2229.5 377.8 H2227.5 L2227.5 381.2 H2225.5 L2225.5 375.6 H2223.5 L2223.5 363.7 H2221.5 L2221.5 363.8 H2219.5 L2219.5 364.7 H2217.5 L2217.5 366.0 H2215.5 L2215.5 367.7 H2213.5 L2213.5 369.1 H2211.5 L2211.5 366.7 H2209.5 L2209.5 365.1 H2207.5 L2207.5 367.9 H2205.5 L2205.5 370.8 H2203.5 L2203.5 375.4 H2201.5 L2201.5 377.3 H2199.5 L2199.5 373.6 H2197.5 L2197.5 363.7 H2195.5 L2195.5 366.6 H2193.5 L2193.5 371.1 H2191.5 L2191.5 374.6 H2189.5 L2189.5 381.4 H2187.5 L2187.5 387.0 H2185.5 L2185.5 378.5 H2183.5 L2183.5 365.6 H2181.5 L2181.5 368.3 H2179.5 L2179.5 372.1 H2177.5 L2177.5 375.7 H2175.5 L2175.5 380.9 H2173.5 L2173.5 374.0 H2171.5 L2171.5 363.8 H2169.5 L2169.5 365.0 H2167.5 L2167.5 366.6 H2165.5 L2165.5 368.5 H2163.5 L2163.5 369.2 H2161.5 L2161.5 367.7 H2159.5 L2159.5 363.7 H2157.5 L2157.5 365.7 H2155.5 L2155.5 368.9 H2153.5 L2153.5 372.1 H2151.5 L2151.5 377.9 H2149.5 L2149.5 380.7 H2147.5 L2147.5 375.7 H2145.5 L2145.5 365.9 H2143.5 L2143.5 369.9 H2141.5 L2141.5 374.7 H2139.5 L2139.5 380.7 H2137.5 L2137.5 382.0 H2135.5 L2135.5 376.3 H2133.5 L2133.5 363.7 H2131.5 L2131.5 365.6 H2129.5 L2129.5 368.6 H2127.5 L2127.5 372.8 H2125.5 L2125.5 377.5 H2123.5 L2123.5 379.3 H2121.5 L2121.5 374.5 H2119.5 L2119.5 363.8 H2117.5 L2117.5 365.1 H2115.5 L2115.5 366.6 H2113.5 L2113.5 369.4 H2111.5 Z" fill="#5b86b8"/><path d="M2316.0 362.8 L2316.0 356.4 H2318.0 L2318.0 359.4 H2320.0 L2320.0 360.6 H2322.0 L2322.0 361.8 H2324.0 L2324.0 350.8 H2326.0 L2326.0 345.9 H2328.0 L2328.0 348.8 H2330.0 L2330.0 353.6 H2332.0 L2332.0 357.0 H2334.0 L2334.0 359.9 H2336.0 L2336.0 361.9 H2338.0 L2338.0 348.3 H2340.0 L2340.0 341.6 H2342.0 L2342.0 345.7 H2344.0 L2344.0 352.0 H2346.0 L2346.0 355.9 H2348.0 L2348.0 359.7 H2350.0 L2350.0 351.2 H2352.0 L2352.0 346.3 H2354.0 L2354.0 348.4 H2356.0 L2356.0 353.6 H2358.0 L2358.0 357.0 H2360.0 L2360.0 360.2 H2362.0 L2362.0 361.9 H2364.0 L2364.0 358.5 H2366.0 L2366.0 356.6 H2368.0 L2368.0 357.5 H2370.0 L2370.0 359.3 H2372.0 L2372.0 360.6 H2374.0 L2374.0 361.8 H2376.0 L2376.0 351.6 H2378.0 L2378.0 346.0 H2380.0 L2380.0 349.6 H2382.0 L2382.0 353.3 H2384.0 L2384.0 357.2 H2386.0 L2386.0 360.1 H2388.0 L2388.0 347.2 H2390.0 L2390.0 341.2 H2392.0 L2392.0 345.1 H2394.0 L2394.0 350.1 H2396.0 L2396.0 355.0 H2398.0 L2398.0 359.2 H2400.0 L2400.0 362.0 H2402.0 L2402.0 353.0 H2404.0 L2404.0 348.6 H2406.0 L2406.0 350.5 H2408.0 L2408.0 354.6 H2410.0 L2410.0 357.9 H2412.0 L2412.0 360.5 H2414.0 L2414.0 358.8 H2416.0 L2416.0 357.1 H2418.0 L2418.0 357.9 H2420.0 L2420.0 359.6 H2422.0 L2422.0 360.9 H2424.0 L2424.0 361.9 H2426.0 L2426.0 361.9 H2428.0 L2428.0 350.3 H2430.0 L2430.0 345.1 H2432.0 L2432.0 348.6 H2434.0 L2434.0 353.4 H2436.0 L2436.0 356.7 H2438.0 L2438.0 360.1 H2440.0 L2440.0 346.2 H2442.0 L2442.0 340.4 H2444.0 L2444.0 344.0 H2446.0 L2446.0 350.0 H2448.0 L2448.0 354.7 H2450.0 L2450.0 359.1 H2452.0 L2452.0 351.3 H2454.0 L2454.0 346.9 H2456.0 L2456.0 349.2 H2458.0 L2458.0 353.6 H2460.0 L2460.0 357.3 H2462.0 L2462.0 358.1 H2464.0 L2464.0 360.3 H2466.0 L2466.0 358.9 H2468.0 L2468.0 357.2 H2470.0 L2470.0 358.2 H2472.0 L2472.0 359.7 H2474.0 L2474.0 360.9 H2476.0 L2476.0 361.9 H2478.0 L2478.0 352.2 H2480.0 L2480.0 347.1 H2482.0 L2482.0 350.1 H2484.0 L2484.0 354.0 H2486.0 L2486.0 357.4 H2488.0 L2488.0 358.2 H2490.0 L2490.0 346.2 H2492.0 L2492.0 339.3 H2494.0 L2494.0 343.1 H2496.0 L2496.0 349.4 H2498.0 L2498.0 354.8 H2500.0 L2500.0 359.1 H2502.0 L2502.0 362.0 H2504.0 L2504.0 352.5 H2506.0 L2506.0 347.8 H2508.0 L2508.0 350.2 H2510.0 L2510.0 354.4 H2512.0 L2512.0 357.6 H2514.0 L2514.0 360.3 H2516.0 L2516.0 361.9 H2516.5 L2516.5 362.8 L2516.5 363.7 H2516.0 L2516.0 365.2 H2514.0 L2514.0 368.4 H2512.0 L2512.0 371.1 H2510.0 L2510.0 374.6 H2508.0 L2508.0 377.1 H2506.0 L2506.0 374.1 H2504.0 L2504.0 363.7 H2502.0 L2502.0 366.7 H2500.0 L2500.0 371.6 H2498.0 L2498.0 376.5 H2496.0 L2496.0 382.5 H2494.0 L2494.0 385.5 H2492.0 L2492.0 379.1 H2490.0 L2490.0 367.3 H2488.0 L2488.0 368.0 H2486.0 L2486.0 371.0 H2484.0 L2484.0 376.4 H2482.0 L2482.0 379.2 H2480.0 L2480.0 373.5 H2478.0 L2478.0 363.7 H2476.0 L2476.0 364.8 H2474.0 L2474.0 365.8 H2472.0 L2472.0 367.4 H2470.0 L2470.0 368.1 H2468.0 L2468.0 366.8 H2466.0 L2466.0 365.2 H2464.0 L2464.0 368.0 H2462.0 L2462.0 368.4 H2460.0 L2460.0 372.4 H2458.0 L2458.0 376.6 H2456.0 L2456.0 380.0 H2454.0 L2454.0 374.8 H2452.0 L2452.0 366.7 H2450.0 L2450.0 371.2 H2448.0 L2448.0 376.5 H2446.0 L2446.0 382.8 H2444.0 L2444.0 386.7 H2442.0 L2442.0 379.6 H2440.0 L2440.0 365.8 H2438.0 L2438.0 369.0 H2436.0 L2436.0 372.5 H2434.0 L2434.0 377.8 H2432.0 L2432.0 381.2 H2430.0 L2430.0 375.6 H2428.0 L2428.0 363.7 H2426.0 L2426.0 363.8 H2424.0 L2424.0 364.7 H2422.0 L2422.0 366.0 H2420.0 L2420.0 367.7 H2418.0 L2418.0 369.1 H2416.0 L2416.0 366.7 H2414.0 L2414.0 365.1 H2412.0 L2412.0 367.9 H2410.0 L2410.0 370.8 H2408.0 L2408.0 375.4 H2406.0 L2406.0 377.3 H2404.0 L2404.0 373.6 H2402.0 L2402.0 363.7 H2400.0 L2400.0 366.6 H2398.0 L2398.0 371.1 H2396.0 L2396.0 374.6 H2394.0 L2394.0 381.4 H2392.0 L2392.0 387.0 H2390.0 L2390.0 378.5 H2388.0 L2388.0 365.6 H2386.0 L2386.0 368.3 H2384.0 L2384.0 372.1 H2382.0 L2382.0 375.7 H2380.0 L2380.0 380.9 H2378.0 L2378.0 374.0 H2376.0 L2376.0 363.8 H2374.0 L2374.0 365.0 H2372.0 L2372.0 366.6 H2370.0 L2370.0 368.5 H2368.0 L2368.0 369.2 H2366.0 L2366.0 367.7 H2364.0 L2364.0 363.7 H2362.0 L2362.0 365.7 H2360.0 L2360.0 368.9 H2358.0 L2358.0 372.1 H2356.0 L2356.0 377.9 H2354.0 L2354.0 380.7 H2352.0 L2352.0 375.7 H2350.0 L2350.0 365.9 H2348.0 L2348.0 369.9 H2346.0 L2346.0 374.7 H2344.0 L2344.0 380.7 H2342.0 L2342.0 382.0 H2340.0 L2340.0 376.3 H2338.0 L2338.0 363.7 H2336.0 L2336.0 365.6 H2334.0 L2334.0 368.6 H2332.0 L2332.0 372.8 H2330.0 L2330.0 377.5 H2328.0 L2328.0 379.3 H2326.0 L2326.0 374.5 H2324.0 L2324.0 363.8 H2322.0 L2322.0 365.1 H2320.0 L2320.0 366.6 H2318.0 L2318.0 369.4 H2316.0 Z" fill="#5b86b8"/><path d="M2520.5 362.8 L2520.5 356.4 H2522.5 L2522.5 359.4 H2524.5 L2524.5 360.6 H2526.5 L2526.5 361.8 H2528.5 L2528.5 350.8 H2530.5 L2530.5 345.9 H2532.5 L2532.5 348.8 H2534.5 L2534.5 353.6 H2536.5 L2536.5 357.0 H2538.5 L2538.5 359.9 H2540.5 L2540.5 361.9 H2542.5 L2542.5 348.3 H2544.5 L2544.5 341.6 H2546.5 L2546.5 345.7 H2548.5 L2548.5 352.0 H2550.5 L2550.5 355.9 H2552.5 L2552.5 359.7 H2554.5 L2554.5 351.2 H2556.5 L2556.5 346.3 H2558.5 L2558.5 348.4 H2560.5 L2560.5 353.6 H2562.5 L2562.5 357.0 H2564.5 L2564.5 360.2 H2566.5 L2566.5 361.9 H2568.5 L2568.5 358.5 H2570.5 L2570.5 356.6 H2572.5 L2572.5 357.5 H2574.5 L2574.5 359.3 H2576.5 L2576.5 360.6 H2578.5 L2578.5 361.8 H2580.5 L2580.5 351.6 H2582.5 L2582.5 346.0 H2584.5 L2584.5 349.6 H2586.5 L2586.5 353.3 H2588.5 L2588.5 357.2 H2590.5 L2590.5 360.1 H2592.5 L2592.5 347.2 H2594.5 L2594.5 341.2 H2596.5 L2596.5 345.1 H2598.5 L2598.5 350.1 H2600.5 L2600.5 355.0 H2602.5 L2602.5 359.2 H2604.5 L2604.5 362.0 H2606.5 L2606.5 353.0 H2608.5 L2608.5 348.6 H2610.5 L2610.5 350.5 H2612.5 L2612.5 354.6 H2614.5 L2614.5 357.9 H2616.5 L2616.5 360.5 H2618.5 L2618.5 358.8 H2620.5 L2620.5 357.1 H2622.5 L2622.5 357.9 H2624.5 L2624.5 359.6 H2626.5 L2626.5 360.9 H2628.5 L2628.5 361.9 H2630.5 L2630.5 361.9 H2632.5 L2632.5 350.3 H2634.5 L2634.5 345.1 H2636.5 L2636.5 348.6 H2638.5 L2638.5 353.4 H2640.5 L2640.5 356.7 H2642.5 L2642.5 360.1 H2644.5 L2644.5 346.2 H2646.5 L2646.5 340.4 H2648.5 L2648.5 344.0 H2650.5 L2650.5 350.0 H2652.5 L2652.5 354.7 H2654.5 L2654.5 359.1 H2656.5 L2656.5 351.3 H2658.5 L2658.5 346.9 H2660.5 L2660.5 349.2 H2662.5 L2662.5 353.6 H2664.5 L2664.5 357.3 H2666.5 L2666.5 358.1 H2668.5 L2668.5 360.3 H2670.5 L2670.5 358.9 H2672.5 L2672.5 357.2 H2674.5 L2674.5 358.2 H2676.5 L2676.5 359.7 H2678.5 L2678.5 360.9 H2680.5 L2680.5 361.9 H2682.5 L2682.5 352.2 H2684.5 L2684.5 347.1 H2686.5 L2686.5 350.1 H2688.5 L2688.5 354.0 H2690.5 L2690.5 357.4 H2692.5 L2692.5 358.2 H2694.5 L2694.5 346.2 H2696.5 L2696.5 339.3 H2698.5 L2698.5 343.1 H2700.5 L2700.5 349.4 H2702.5 L2702.5 354.8 H2704.5 L2704.5 359.1 H2706.5 L2706.5 362.0 H2708.5 L2708.5 352.5 H2710.5 L2710.5 347.8 H2712.5 L2712.5 350.2 H2714.5 L2714.5 354.4 H2716.5 L2716.5 357.6 H2718.5 L2718.5 360.3 H2720.5 L2720.5 361.9 H2721.0 L2721.0 362.8 L2721.0 363.7 H2720.5 L2720.5 365.2 H2718.5 L2718.5 368.4 H2716.5 L2716.5 371.1 H2714.5 L2714.5 374.6 H2712.5 L2712.5 377.1 H2710.5 L2710.5 374.1 H2708.5 L2708.5 363.7 H2706.5 L2706.5 366.7 H2704.5 L2704.5 371.6 H2702.5 L2702.5 376.5 H2700.5 L2700.5 382.5 H2698.5 L2698.5 385.5 H2696.5 L2696.5 379.1 H2694.5 L2694.5 367.3 H2692.5 L2692.5 368.0 H2690.5 L2690.5 371.0 H2688.5 L2688.5 376.4 H2686.5 L2686.5 379.2 H2684.5 L2684.5 373.5 H2682.5 L2682.5 363.7 H2680.5 L2680.5 364.8 H2678.5 L2678.5 365.8 H2676.5 L2676.5 367.4 H2674.5 L2674.5 368.1 H2672.5 L2672.5 366.8 H2670.5 L2670.5 365.2 H2668.5 L2668.5 368.0 H2666.5 L2666.5 368.4 H2664.5 L2664.5 372.4 H2662.5 L2662.5 376.6 H2660.5 L2660.5 380.0 H2658.5 L2658.5 374.8 H2656.5 L2656.5 366.7 H2654.5 L2654.5 371.2 H2652.5 L2652.5 376.5 H2650.5 L2650.5 382.8 H2648.5 L2648.5 386.7 H2646.5 L2646.5 379.6 H2644.5 L2644.5 365.8 H2642.5 L2642.5 369.0 H2640.5 L2640.5 372.5 H2638.5 L2638.5 377.8 H2636.5 L2636.5 381.2 H2634.5 L2634.5 375.6 H2632.5 L2632.5 363.7 H2630.5 L2630.5 363.8 H2628.5 L2628.5 364.7 H2626.5 L2626.5 366.0 H2624.5 L2624.5 367.7 H2622.5 L2622.5 369.1 H2620.5 L2620.5 366.7 H2618.5 L2618.5 365.1 H2616.5 L2616.5 367.9 H2614.5 L2614.5 370.8 H2612.5 L2612.5 375.4 H2610.5 L2610.5 377.3 H2608.5 L2608.5 373.6 H2606.5 L2606.5 363.7 H2604.5 L2604.5 366.6 H2602.5 L2602.5 371.1 H2600.5 L2600.5 374.6 H2598.5 L2598.5 381.4 H2596.5 L2596.5 387.0 H2594.5 L2594.5 378.5 H2592.5 L2592.5 365.6 H2590.5 L2590.5 368.3 H2588.5 L2588.5 372.1 H2586.5 L2586.5 375.7 H2584.5 L2584.5 380.9 H2582.5 L2582.5 374.0 H2580.5 L2580.5 363.8 H2578.5 L2578.5 365.0 H2576.5 L2576.5 366.6 H2574.5 L2574.5 368.5 H2572.5 L2572.5 369.2 H2570.5 L2570.5 367.7 H2568.5 L2568.5 363.7 H2566.5 L2566.5 365.7 H2564.5 L2564.5 368.9 H2562.5 L2562.5 372.1 H2560.5 L2560.5 377.9 H2558.5 L2558.5 380.7 H2556.5 L2556.5 375.7 H2554.5 L2554.5 365.9 H2552.5 L2552.5 369.9 H2550.5 L2550.5 374.7 H2548.5 L2548.5 380.7 H2546.5 L2546.5 382.0 H2544.5 L2544.5 376.3 H2542.5 L2542.5 363.7 H2540.5 L2540.5 365.6 H2538.5 L2538.5 368.6 H2536.5 L2536.5 372.8 H2534.5 L2534.5 377.5 H2532.5 L2532.5 379.3 H2530.5 L2530.5 374.5 H2528.5 L2528.5 363.8 H2526.5 L2526.5 365.1 H2524.5 L2524.5 366.6 H2522.5 L2522.5 369.4 H2520.5 Z" fill="#5b86b8"/><path d="M2725.0 362.8 L2725.0 356.3 H2727.0 L2727.0 359.3 H2729.0 L2729.0 360.7 H2731.0 L2731.0 361.8 H2733.0 L2733.0 350.1 H2735.0 L2735.0 345.7 H2737.0 L2737.0 348.5 H2739.0 L2739.0 353.5 H2741.0 L2741.0 356.8 H2743.0 L2743.0 359.9 H2745.0 L2745.0 361.9 H2747.0 L2747.0 348.9 H2749.0 L2749.0 342.7 H2751.0 L2751.0 346.8 H2753.0 L2753.0 351.7 H2755.0 L2755.0 355.7 H2757.0 L2757.0 359.6 H2759.0 L2759.0 350.7 H2761.0 L2761.0 345.1 H2763.0 L2763.0 348.6 H2765.0 L2765.0 353.8 H2767.0 L2767.0 357.1 H2769.0 L2769.0 360.2 H2771.0 L2771.0 362.0 H2773.0 L2773.0 358.4 H2775.0 L2775.0 356.1 H2777.0 L2777.0 357.6 H2779.0 L2779.0 359.2 H2781.0 L2781.0 360.7 H2783.0 L2783.0 361.7 H2785.0 L2785.0 351.6 H2787.0 L2787.0 346.8 H2789.0 L2789.0 349.1 H2791.0 L2791.0 353.8 H2793.0 L2793.0 357.1 H2795.0 L2795.0 360.2 H2797.0 L2797.0 347.7 H2799.0 L2799.0 340.0 H2801.0 L2801.0 344.9 H2803.0 L2803.0 350.0 H2805.0 L2805.0 355.2 H2807.0 L2807.0 359.2 H2809.0 L2809.0 361.9 H2811.0 L2811.0 353.1 H2813.0 L2813.0 349.0 H2815.0 L2815.0 350.7 H2817.0 L2817.0 354.7 H2819.0 L2819.0 357.9 H2821.0 L2821.0 360.6 H2823.0 L2823.0 358.9 H2825.0 L2825.0 357.1 H2827.0 L2827.0 357.9 H2829.0 L2829.0 359.5 H2831.0 L2831.0 360.8 H2833.0 L2833.0 361.9 H2835.0 L2835.0 361.9 H2837.0 L2837.0 350.7 H2839.0 L2839.0 344.7 H2841.0 L2841.0 348.5 H2843.0 L2843.0 353.5 H2845.0 L2845.0 356.7 H2847.0 L2847.0 360.0 H2849.0 L2849.0 362.8 L2849.0 365.8 H2847.0 L2847.0 369.2 H2845.0 L2845.0 372.2 H2843.0 L2843.0 377.0 H2841.0 L2841.0 380.9 H2839.0 L2839.0 376.1 H2837.0 L2837.0 363.6 H2835.0 L2835.0 363.7 H2833.0 L2833.0 364.9 H2831.0 L2831.0 366.0 H2829.0 L2829.0 367.9 H2827.0 L2827.0 368.6 H2825.0 L2825.0 367.1 H2823.0 L2823.0 365.1 H2821.0 L2821.0 368.0 H2819.0 L2819.0 371.4 H2817.0 L2817.0 374.1 H2815.0 L2815.0 377.4 H2813.0 L2813.0 373.7 H2811.0 L2811.0 363.7 H2809.0 L2809.0 366.6 H2807.0 L2807.0 370.2 H2805.0 L2805.0 375.4 H2803.0 L2803.0 380.2 H2801.0 L2801.0 387.3 H2799.0 L2799.0 377.9 H2797.0 L2797.0 365.4 H2795.0 L2795.0 368.4 H2793.0 L2793.0 372.7 H2791.0 L2791.0 377.5 H2789.0 L2789.0 379.2 H2787.0 L2787.0 375.4 H2785.0 L2785.0 363.9 H2783.0 L2783.0 365.1 H2781.0 L2781.0 366.6 H2779.0 L2779.0 368.0 H2777.0 L2777.0 369.8 H2775.0 L2775.0 367.6 H2773.0 L2773.0 363.7 H2771.0 L2771.0 365.4 H2769.0 L2769.0 368.7 H2767.0 L2767.0 372.7 H2765.0 L2765.0 377.7 H2763.0 L2763.0 378.8 H2761.0 L2761.0 374.0 H2759.0 L2759.0 366.1 H2757.0 L2757.0 369.8 H2755.0 L2755.0 373.9 H2753.0 L2753.0 380.2 H2751.0 L2751.0 383.8 H2749.0 L2749.0 376.3 H2747.0 L2747.0 363.6 H2745.0 L2745.0 365.5 H2743.0 L2743.0 369.2 H2741.0 L2741.0 373.2 H2739.0 L2739.0 377.7 H2737.0 L2737.0 381.7 H2735.0 L2735.0 375.9 H2733.0 L2733.0 363.8 H2731.0 L2731.0 365.1 H2729.0 L2729.0 366.1 H2727.0 L2727.0 368.9 H2725.0 Z" fill="#5b86b8"/><path d="M1298.9 395.8 H2851.6 Q2858.1 395.8 2858.1 402.3 V481.4 Q2858.1 487.9 2851.6 487.9 H1298.9 Q1292.4 487.9 1292.4 481.4 V402.3 Q1292.4 395.8 1298.9 395.8 Z" fill="url(#gg)" stroke="#0c0c0c" stroke-width="3.800" paint-order="stroke"/><text x="1302.5" y="422" font-size="22" font-weight="bold" fill="#b7e5bd">Sweeping Arp</text><path d="M1292.5 444.4 H1391.4 V451.7 H1292.5 Z M1292.5 454.5 H1391.4 V457.7 H1292.5 Z M1292.5 459.8 H1391.4 V463.7 H1292.5 Z M1292.5 474.4 H1391.4 V478.0 H1292.5 Z M1391.7 440.0 H1429.5 V451.7 H1391.7 Z M1391.7 457.0 H1429.5 V460.0 H1391.7 Z M1391.7 470.0 H1429.5 V473.8 H1391.7 Z M1429.5 446.3 H1487.8 V451.7 H1429.5 Z M1429.5 454.5 H1487.8 V457.7 H1429.5 Z M1429.5 462.0 H1487.8 V465.8 H1429.5 Z M1429.5 476.0 H1487.8 V479.8 H1429.5 Z M1507.8 444.4 H1595.7 V451.7 H1507.8 Z M1507.8 454.5 H1595.7 V457.7 H1507.8 Z M1507.8 459.8 H1595.7 V463.7 H1507.8 Z M1507.8 474.4 H1595.7 V478.0 H1507.8 Z M1595.7 440.0 H1634.0 V451.7 H1595.7 Z M1595.7 457.0 H1634.0 V460.0 H1595.7 Z M1595.7 470.0 H1634.0 V473.8 H1595.7 Z M1635.6 440.0 H1673.9 V443.7 H1635.6 Z M1635.6 448.0 H1673.9 V450.8 H1635.6 Z M1635.6 454.0 H1673.9 V462.0 H1635.6 Z M1635.6 472.0 H1673.9 V476.0 H1635.6 Z M1673.9 438.3 H1700.5 V442.2 H1673.9 Z M1673.9 446.5 H1700.5 V450.0 H1673.9 Z M1673.9 452.3 H1700.5 V457.7 H1673.9 Z M1673.9 466.3 H1700.5 V470.0 H1673.9 Z M1700.5 444.4 H1800.4 V451.7 H1700.5 Z M1700.5 454.5 H1800.4 V457.7 H1700.5 Z M1700.5 459.8 H1800.4 V463.7 H1700.5 Z M1700.5 474.4 H1800.4 V478.0 H1700.5 Z M1800.7 440.0 H1838.5 V451.7 H1800.7 Z M1800.7 457.0 H1838.5 V460.0 H1800.7 Z M1800.7 470.0 H1838.5 V473.8 H1800.7 Z M1838.5 446.3 H1896.8 V451.7 H1838.5 Z M1838.5 454.5 H1896.8 V457.7 H1838.5 Z M1838.5 462.0 H1896.8 V465.8 H1838.5 Z M1838.5 476.0 H1896.8 V479.8 H1838.5 Z M1916.8 444.4 H2004.7 V451.7 H1916.8 Z M1916.8 454.5 H2004.7 V457.7 H1916.8 Z M1916.8 459.8 H2004.7 V463.7 H1916.8 Z M1916.8 474.4 H2004.7 V478.0 H1916.8 Z M2004.7 440.0 H2043.0 V451.7 H2004.7 Z M2004.7 457.0 H2043.0 V460.0 H2004.7 Z M2004.7 470.0 H2043.0 V473.8 H2004.7 Z M2044.6 440.0 H2082.9 V443.7 H2044.6 Z M2044.6 448.0 H2082.9 V450.8 H2044.6 Z M2044.6 454.0 H2082.9 V462.0 H2044.6 Z M2044.6 472.0 H2082.9 V476.0 H2044.6 Z M2082.9 438.3 H2109.5 V442.2 H2082.9 Z M2082.9 446.5 H2109.5 V450.0 H2082.9 Z M2082.9 452.3 H2109.5 V457.7 H2082.9 Z M2082.9 466.3 H2109.5 V470.0 H2082.9 Z M2109.5 444.4 H2209.4 V451.7 H2109.5 Z M2109.5 454.5 H2209.4 V457.7 H2109.5 Z M2109.5 459.8 H2209.4 V463.7 H2109.5 Z M2109.5 474.4 H2209.4 V478.0 H2109.5 Z M2209.7 440.0 H2247.5 V451.7 H2209.7 Z M2209.7 457.0 H2247.5 V460.0 H2209.7 Z M2209.7 470.0 H2247.5 V473.8 H2209.7 Z M2247.5 446.3 H2305.8 V451.7 H2247.5 Z M2247.5 454.5 H2305.8 V457.7 H2247.5 Z M2247.5 462.0 H2305.8 V465.8 H2247.5 Z M2247.5 476.0 H2305.8 V479.8 H2247.5 Z M2325.8 444.4 H2413.7 V451.7 H2325.8 Z M2325.8 454.5 H2413.7 V457.7 H2325.8 Z M2325.8 459.8 H2413.7 V463.7 H2325.8 Z M2325.8 474.4 H2413.7 V478.0 H2325.8 Z M2413.7 440.0 H2452.0 V451.7 H2413.7 Z M2413.7 457.0 H2452.0 V460.0 H2413.7 Z M2413.7 470.0 H2452.0 V473.8 H2413.7 Z M2453.6 440.0 H2491.9 V443.7 H2453.6 Z M2453.6 448.0 H2491.9 V450.8 H2453.6 Z M2453.6 454.0 H2491.9 V462.0 H2453.6 Z M2453.6 472.0 H2491.9 V476.0 H2453.6 Z M2491.9 438.3 H2518.5 V442.2 H2491.9 Z M2491.9 446.5 H2518.5 V450.0 H2491.9 Z M2491.9 452.3 H2518.5 V457.7 H2491.9 Z M2491.9 466.3 H2518.5 V470.0 H2491.9 Z M2518.5 444.4 H2618.4 V451.7 H2518.5 Z M2518.5 454.5 H2618.4 V457.7 H2518.5 Z M2518.5 459.8 H2618.4 V463.7 H2518.5 Z M2518.5 474.4 H2618.4 V478.0 H2518.5 Z M2618.7 440.0 H2656.5 V451.7 H2618.7 Z M2618.7 457.0 H2656.5 V460.0 H2618.7 Z M2618.7 470.0 H2656.5 V473.8 H2618.7 Z M2656.5 446.3 H2714.8 V451.7 H2656.5 Z M2656.5 454.5 H2714.8 V457.7 H2656.5 Z M2656.5 462.0 H2714.8 V465.8 H2656.5 Z M2656.5 476.0 H2714.8 V479.8 H2656.5 Z M2734.8 444.4 H2822.7 V451.7 H2734.8 Z M2734.8 454.5 H2822.7 V457.7 H2734.8 Z M2734.8 459.8 H2822.7 V463.7 H2734.8 Z M2734.8 474.4 H2822.7 V478.0 H2734.8 Z M2822.7 440.0 H2849.0 V451.7 H2822.7 Z M2822.7 457.0 H2849.0 V460.0 H2822.7 Z M2822.7 470.0 H2849.0 V473.8 H2822.7 Z " fill="#92dca0"/><path d="M1503.4 493.8 H2715.6 Q2722.1 493.8 2722.1 500.3 V579.4 Q2722.1 585.9 2715.6 585.9 H1503.4 Q1496.9 585.9 1496.9 579.4 V500.3 Q1496.9 493.8 1503.4 493.8 Z" fill="url(#gg)" stroke="#0c0c0c" stroke-width="3.800" paint-order="stroke"/><text x="1507.0" y="520" font-size="22" font-weight="bold" fill="#b7e5bd">Classic Analog Pad</text><path d="M2306.0 492.5 H2322.0 V494 Q2314.0 494 2314.0 502 Q2314.0 494 2306.0 494 Z" fill="#141414"/><path d="M2306.0 587.5 H2322.0 V586 Q2314.0 586 2314.0 578 Q2314.0 586 2306.0 586 Z" fill="#141414"/><path d="M1497.0 540.2 H1585.5 V544.3 H1497.0 Z M1497.0 549.8 H1585.5 V554.0 H1497.0 Z M1497.0 555.7 H1585.5 V559.8 H1497.0 Z M1497.0 566.0 H1585.5 V570.0 H1497.0 Z M1596.2 536.0 H1682.1 V544.3 H1596.2 Z M1596.2 549.8 H1685.2 V554.0 H1596.2 Z M1596.2 555.7 H1690.3 V559.8 H1596.2 Z M1702.5 549.8 H1878.4 V554.0 H1702.5 Z M1702.5 555.7 H1878.4 V559.8 H1702.5 Z M1702.5 566.0 H1878.4 V570.0 H1702.5 Z M1702.5 573.6 H1878.4 V577.7 H1702.5 Z M1906.0 540.2 H1994.5 V544.3 H1906.0 Z M1906.0 549.8 H1994.5 V554.0 H1906.0 Z M1906.0 555.7 H1994.5 V559.8 H1906.0 Z M1906.0 566.0 H1994.5 V570.0 H1906.0 Z M2005.2 536.0 H2091.1 V544.3 H2005.2 Z M2005.2 549.8 H2094.2 V554.0 H2005.2 Z M2005.2 555.7 H2099.3 V559.8 H2005.2 Z M2111.5 549.8 H2287.4 V554.0 H2111.5 Z M2111.5 555.7 H2287.4 V559.8 H2111.5 Z M2111.5 566.0 H2287.4 V570.0 H2111.5 Z M2111.5 573.6 H2287.4 V577.7 H2111.5 Z " fill="#92dca0"/><path d="M2315.0 540.2 H2403.5 V544.3 H2315.0 Z M2315.0 549.8 H2403.5 V554.0 H2315.0 Z M2315.0 555.7 H2403.5 V559.8 H2315.0 Z M2315.0 566.0 H2403.5 V570.0 H2315.0 Z M2414.2 536.0 H2500.1 V544.3 H2414.2 Z M2414.2 549.8 H2503.2 V554.0 H2414.2 Z M2414.2 555.7 H2508.3 V559.8 H2414.2 Z M2520.5 549.8 H2696.4 V554.0 H2520.5 Z M2520.5 555.7 H2696.4 V559.8 H2520.5 Z M2520.5 566.0 H2696.4 V570.0 H2520.5 Z M2520.5 573.6 H2696.4 V577.7 H2520.5 Z " fill="#4ea55f"/><g fill="#1d6e2c"><rect x="1664" y="572" width="5" height="12"/><rect x="1671" y="564" width="5" height="20"/><rect x="2481" y="572" width="5" height="12"/><rect x="2489" y="564" width="5" height="20"/></g><path d="M1707.9 591.8 H2851.6 Q2858.1 591.8 2858.1 598.3 V677.4 Q2858.1 683.9 2851.6 683.9 H1707.9 Q1701.4 683.9 1701.4 677.4 V598.3 Q1701.4 591.8 1707.9 591.8 Z" fill="url(#gg)" stroke="#0c0c0c" stroke-width="3.800" paint-order="stroke"/><text x="1711.5" y="618" font-size="22" font-weight="bold" fill="#b7e5bd">Grand Piano</text><path d="M1701.5 640.4 H1800.4 V647.7 H1701.5 Z M1701.5 650.5 H1800.4 V653.7 H1701.5 Z M1701.5 655.8 H1800.4 V659.7 H1701.5 Z M1701.5 670.4 H1800.4 V674.0 H1701.5 Z M1800.7 636.0 H1838.5 V647.7 H1800.7 Z M1800.7 653.0 H1838.5 V656.0 H1800.7 Z M1800.7 666.0 H1838.5 V669.8 H1800.7 Z M1838.5 642.3 H1896.8 V647.7 H1838.5 Z M1838.5 650.5 H1896.8 V653.7 H1838.5 Z M1838.5 658.0 H1896.8 V661.8 H1838.5 Z M1838.5 672.0 H1896.8 V675.8 H1838.5 Z M1916.8 640.4 H2004.7 V647.7 H1916.8 Z M1916.8 650.5 H2004.7 V653.7 H1916.8 Z M1916.8 655.8 H2004.7 V659.7 H1916.8 Z M1916.8 670.4 H2004.7 V674.0 H1916.8 Z M2004.7 636.0 H2043.0 V647.7 H2004.7 Z M2004.7 653.0 H2043.0 V656.0 H2004.7 Z M2004.7 666.0 H2043.0 V669.8 H2004.7 Z M2044.6 636.0 H2082.9 V639.7 H2044.6 Z M2044.6 644.0 H2082.9 V646.8 H2044.6 Z M2044.6 650.0 H2082.9 V658.0 H2044.6 Z M2044.6 668.0 H2082.9 V672.0 H2044.6 Z M2082.9 634.3 H2109.5 V638.2 H2082.9 Z M2082.9 642.5 H2109.5 V646.0 H2082.9 Z M2082.9 648.3 H2109.5 V653.7 H2082.9 Z M2082.9 662.3 H2109.5 V666.0 H2082.9 Z M2109.5 640.4 H2209.4 V647.7 H2109.5 Z M2109.5 650.5 H2209.4 V653.7 H2109.5 Z M2109.5 655.8 H2209.4 V659.7 H2109.5 Z M2109.5 670.4 H2209.4 V674.0 H2109.5 Z M2209.7 636.0 H2247.5 V647.7 H2209.7 Z M2209.7 653.0 H2247.5 V656.0 H2209.7 Z M2209.7 666.0 H2247.5 V669.8 H2209.7 Z M2247.5 642.3 H2305.8 V647.7 H2247.5 Z M2247.5 650.5 H2305.8 V653.7 H2247.5 Z M2247.5 658.0 H2305.8 V661.8 H2247.5 Z M2247.5 672.0 H2305.8 V675.8 H2247.5 Z M2325.8 640.4 H2413.7 V647.7 H2325.8 Z M2325.8 650.5 H2413.7 V653.7 H2325.8 Z M2325.8 655.8 H2413.7 V659.7 H2325.8 Z M2325.8 670.4 H2413.7 V674.0 H2325.8 Z M2413.7 636.0 H2452.0 V647.7 H2413.7 Z M2413.7 653.0 H2452.0 V656.0 H2413.7 Z M2413.7 666.0 H2452.0 V669.8 H2413.7 Z M2453.6 636.0 H2491.9 V639.7 H2453.6 Z M2453.6 644.0 H2491.9 V646.8 H2453.6 Z M2453.6 650.0 H2491.9 V658.0 H2453.6 Z M2453.6 668.0 H2491.9 V672.0 H2453.6 Z M2491.9 634.3 H2518.5 V638.2 H2491.9 Z M2491.9 642.5 H2518.5 V646.0 H2491.9 Z M2491.9 648.3 H2518.5 V653.7 H2491.9 Z M2491.9 662.3 H2518.5 V666.0 H2491.9 Z M2518.5 640.4 H2618.4 V647.7 H2518.5 Z M2518.5 650.5 H2618.4 V653.7 H2518.5 Z M2518.5 655.8 H2618.4 V659.7 H2518.5 Z M2518.5 670.4 H2618.4 V674.0 H2518.5 Z M2618.7 636.0 H2656.5 V647.7 H2618.7 Z M2618.7 653.0 H2656.5 V656.0 H2618.7 Z M2618.7 666.0 H2656.5 V669.8 H2618.7 Z M2656.5 642.3 H2714.8 V647.7 H2656.5 Z M2656.5 650.5 H2714.8 V653.7 H2656.5 Z M2656.5 658.0 H2714.8 V661.8 H2656.5 Z M2656.5 672.0 H2714.8 V675.8 H2656.5 Z M2734.8 640.4 H2822.7 V647.7 H2734.8 Z M2734.8 650.5 H2822.7 V653.7 H2734.8 Z M2734.8 655.8 H2822.7 V659.7 H2734.8 Z M2734.8 670.4 H2822.7 V674.0 H2734.8 Z M2822.7 636.0 H2849.0 V647.7 H2822.7 Z M2822.7 653.0 H2849.0 V656.0 H2822.7 Z M2822.7 666.0 H2849.0 V669.8 H2822.7 Z " fill="#92dca0"/><path d="M1707.9 689.8 H2851.6 Q2858.1 689.8 2858.1 696.3 V775.4 Q2858.1 781.9 2851.6 781.9 H1707.9 Q1701.4 781.9 1701.4 775.4 V696.3 Q1701.4 689.8 1707.9 689.8 Z" fill="url(#gg)" stroke="#0c0c0c" stroke-width="3.800" paint-order="stroke"/><text x="1711.5" y="716" font-size="22" font-weight="bold" fill="#b7e5bd">Noise Bass</text><path d="M1701.5 757.3 H1800.7 V760.6999999999999 H1701.5 Z M1800.7 755.3 H1838.5 V758.6999999999999 H1800.7 Z M1838.5 757.3 H1905.0 V760.6999999999999 H1838.5 Z M1905.0 757.3 H2004.2 V760.6999999999999 H1905.0 Z M2004.2 755.3 H2043.0 V758.6999999999999 H2004.2 Z M2045.1 755.3 H2109.5 V758.6999999999999 H2045.1 Z M2109.5 757.3 H2209.7 V760.6999999999999 H2109.5 Z M2209.7 755.3 H2247.5 V758.6999999999999 H2209.7 Z M2247.5 757.3 H2314.0 V760.6999999999999 H2247.5 Z M2314.0 757.3 H2413.2 V760.6999999999999 H2314.0 Z M2413.2 755.3 H2452.0 V758.6999999999999 H2413.2 Z M2454.1 755.3 H2518.5 V758.6999999999999 H2454.1 Z M2518.5 757.3 H2618.7 V760.6999999999999 H2518.5 Z M2618.7 755.3 H2656.5 V758.6999999999999 H2618.7 Z M2656.5 757.3 H2723.0 V760.6999999999999 H2656.5 Z M2723.0 757.3 H2822.2 V760.6999999999999 H2723.0 Z M2822.2 755.3 H2849.0 V758.6999999999999 H2822.2 Z " fill="#92dca0"/><path d="M1503.4 787.8 H1693.1 Q1699.6 787.8 1699.6 794.3 V873.4 Q1699.6 879.9 1693.1 879.9 H1503.4 Q1496.9 879.9 1496.9 873.4 V794.3 Q1496.9 787.8 1503.4 787.8 Z" fill="url(#go)" stroke="#0c0c0c" stroke-width="3.800" paint-order="stroke"/><text x="1507.0" y="814" font-size="22" font-weight="bold" fill="#fff">Electro Riser</text><g fill="none" stroke="#fff" stroke-width="1.800"><circle cx="1664.0" cy="806.9" r="7.900"/><circle cx="1674.1" cy="806.9" r="7.900"/></g><path d="M1497.0 853 L1497.0 851.8 H1499.0 L1499.0 851.8 H1501.0 L1501.0 851.8 H1503.0 L1503.0 851.8 H1505.0 L1505.0 851.8 H1507.0 L1507.0 851.8 H1509.0 L1509.0 851.8 H1511.0 L1511.0 851.8 H1513.0 L1513.0 851.8 H1515.0 L1515.0 851.8 H1517.0 L1517.0 851.8 H1519.0 L1519.0 851.8 H1521.0 L1521.0 851.8 H1523.0 L1523.0 851.8 H1525.0 L1525.0 851.8 H1527.0 L1527.0 851.8 H1529.0 L1529.0 851.8 H1531.0 L1531.0 851.8 H1533.0 L1533.0 851.8 H1535.0 L1535.0 851.8 H1537.0 L1537.0 851.8 H1539.0 L1539.0 851.8 H1541.0 L1541.0 851.8 H1543.0 L1543.0 851.8 H1545.0 L1545.0 851.8 H1547.0 L1547.0 851.8 H1549.0 L1549.0 851.8 H1551.0 L1551.0 851.8 H1553.0 L1553.0 851.8 H1555.0 L1555.0 851.8 H1557.0 L1557.0 851.8 H1559.0 L1559.0 851.8 H1561.0 L1561.0 851.8 H1563.0 L1563.0 851.8 H1565.0 L1565.0 851.8 H1567.0 L1567.0 851.8 H1569.0 L1569.0 851.8 H1571.0 L1571.0 851.8 H1573.0 L1573.0 851.8 H1575.0 L1575.0 851.8 H1577.0 L1577.0 851.8 H1579.0 L1579.0 851.8 H1581.0 L1581.0 851.8 H1583.0 L1583.0 851.8 H1585.0 L1585.0 851.8 H1587.0 L1587.0 851.8 H1589.0 L1589.0 851.8 H1591.0 L1591.0 851.8 H1593.0 L1593.0 851.8 H1595.0 L1595.0 851.8 H1597.0 L1597.0 851.8 H1599.0 L1599.0 851.8 H1601.0 L1601.0 850.7 H1603.0 L1603.0 850.6 H1605.0 L1605.0 851.8 H1607.0 L1607.0 851.8 H1609.0 L1609.0 850.7 H1611.0 L1611.0 851.8 H1613.0 L1613.0 851.8 H1615.0 L1615.0 850.7 H1617.0 L1617.0 850.7 H1619.0 L1619.0 850.6 H1621.0 L1621.0 850.6 H1623.0 L1623.0 850.6 H1625.0 L1625.0 850.7 H1627.0 L1627.0 851.8 H1629.0 L1629.0 851.8 H1631.0 L1631.0 851.8 H1633.0 L1633.0 851.1 H1635.0 L1635.0 850.2 H1637.0 L1637.0 849.0 H1639.0 L1639.0 848.6 H1641.0 L1641.0 847.4 H1643.0 L1643.0 846.8 H1645.0 L1645.0 846.6 H1647.0 L1647.0 845.5 H1649.0 L1649.0 844.8 H1651.0 L1651.0 843.2 H1653.0 L1653.0 842.9 H1655.0 L1655.0 841.0 H1657.0 L1657.0 841.2 H1659.0 L1659.0 841.0 H1661.0 L1661.0 839.2 H1663.0 L1663.0 838.8 H1665.0 L1665.0 837.6 H1667.0 L1667.0 837.8 H1669.0 L1669.0 837.2 H1671.0 L1671.0 837.6 H1673.0 L1673.0 835.4 H1675.0 L1675.0 835.2 H1677.0 L1677.0 837.1 H1679.0 L1679.0 835.8 H1681.0 L1681.0 834.9 H1683.0 L1683.0 835.0 H1685.0 L1685.0 831.7 H1687.0 L1687.0 833.1 H1689.0 L1689.0 833.5 H1691.0 L1691.0 831.2 H1693.0 L1693.0 833.1 H1695.0 L1695.0 832.9 H1697.0 L1697.0 829.7 H1699.0 L1698.5 853 L1699.0 875.7 H1697.0 L1697.0 872.8 H1695.0 L1695.0 873.3 H1693.0 L1693.0 874.2 H1691.0 L1691.0 872.1 H1689.0 L1689.0 873.1 H1687.0 L1687.0 874.0 H1685.0 L1685.0 870.7 H1683.0 L1683.0 870.3 H1681.0 L1681.0 869.5 H1679.0 L1679.0 868.6 H1677.0 L1677.0 870.2 H1675.0 L1675.0 870.4 H1673.0 L1673.0 868.4 H1671.0 L1671.0 868.9 H1669.0 L1669.0 868.0 H1667.0 L1667.0 868.0 H1665.0 L1665.0 866.2 H1663.0 L1663.0 867.2 H1661.0 L1661.0 865.2 H1659.0 L1659.0 864.6 H1657.0 L1657.0 864.9 H1655.0 L1655.0 862.6 H1653.0 L1653.0 862.5 H1651.0 L1651.0 860.7 H1649.0 L1649.0 860.0 H1647.0 L1647.0 859.2 H1645.0 L1645.0 858.7 H1643.0 L1643.0 858.5 H1641.0 L1641.0 857.1 H1639.0 L1639.0 856.9 H1637.0 L1637.0 855.9 H1635.0 L1635.0 854.8 H1633.0 L1633.0 854.2 H1631.0 L1631.0 854.2 H1629.0 L1629.0 854.2 H1627.0 L1627.0 855.3 H1625.0 L1625.0 855.2 H1623.0 L1623.0 855.3 H1621.0 L1621.0 855.2 H1619.0 L1619.0 855.2 H1617.0 L1617.0 855.4 H1615.0 L1615.0 854.2 H1613.0 L1613.0 854.1 H1611.0 L1611.0 855.4 H1609.0 L1609.0 854.2 H1607.0 L1607.0 854.2 H1605.0 L1605.0 855.2 H1603.0 L1603.0 855.2 H1601.0 L1601.0 854.2 H1599.0 L1599.0 854.2 H1597.0 L1597.0 854.2 H1595.0 L1595.0 854.2 H1593.0 L1593.0 854.2 H1591.0 L1591.0 854.2 H1589.0 L1589.0 854.1 H1587.0 L1587.0 854.2 H1585.0 L1585.0 854.2 H1583.0 L1583.0 854.2 H1581.0 L1581.0 854.2 H1579.0 L1579.0 854.2 H1577.0 L1577.0 854.2 H1575.0 L1575.0 854.1 H1573.0 L1573.0 854.2 H1571.0 L1571.0 854.2 H1569.0 L1569.0 854.1 H1567.0 L1567.0 854.2 H1565.0 L1565.0 854.2 H1563.0 L1563.0 854.2 H1561.0 L1561.0 854.2 H1559.0 L1559.0 854.2 H1557.0 L1557.0 854.2 H1555.0 L1555.0 854.2 H1553.0 L1553.0 854.2 H1551.0 L1551.0 854.2 H1549.0 L1549.0 854.2 H1547.0 L1547.0 854.2 H1545.0 L1545.0 854.2 H1543.0 L1543.0 854.2 H1541.0 L1541.0 854.2 H1539.0 L1539.0 854.2 H1537.0 L1537.0 854.1 H1535.0 L1535.0 854.2 H1533.0 L1533.0 854.1 H1531.0 L1531.0 854.2 H1529.0 L1529.0 854.2 H1527.0 L1527.0 854.2 H1525.0 L1525.0 854.2 H1523.0 L1523.0 854.2 H1521.0 L1521.0 854.2 H1519.0 L1519.0 854.2 H1517.0 L1517.0 854.1 H1515.0 L1515.0 854.2 H1513.0 L1513.0 854.2 H1511.0 L1511.0 854.1 H1509.0 L1509.0 854.2 H1507.0 L1507.0 854.1 H1505.0 L1505.0 854.2 H1503.0 L1503.0 854.2 H1501.0 L1501.0 854.2 H1499.0 L1499.0 854.2 H1497.0 Z" fill="#fed9a9"/><path d="M1912.4 787.8 H2102.1 Q2108.6 787.8 2108.6 794.3 V873.4 Q2108.6 879.9 2102.1 879.9 H1912.4 Q1905.9 879.9 1905.9 873.4 V794.3 Q1905.9 787.8 1912.4 787.8 Z" fill="url(#go)" stroke="#0c0c0c" stroke-width="3.800" paint-order="stroke"/><text x="1916.0" y="814" font-size="22" font-weight="bold" fill="#fff">Electro Riser</text><g fill="none" stroke="#fff" stroke-width="1.800"><circle cx="2073.0" cy="806.9" r="7.900"/><circle cx="2083.1" cy="806.9" r="7.900"/></g><path d="M1906.0 853 L1906.0 850.9 H1908.0 L1908.0 850.4 H1910.0 L1910.0 850.5 H1912.0 L1912.0 850.1 H1914.0 L1914.0 849.5 H1916.0 L1916.0 849.8 H1918.0 L1918.0 849.2 H1920.0 L1920.0 849.4 H1922.0 L1922.0 849.1 H1924.0 L1924.0 848.5 H1926.0 L1926.0 847.8 H1928.0 L1928.0 847.6 H1930.0 L1930.0 847.4 H1932.0 L1932.0 847.7 H1934.0 L1934.0 847.2 H1936.0 L1936.0 847.2 H1938.0 L1938.0 846.4 H1940.0 L1940.0 845.6 H1942.0 L1942.0 846.1 H1944.0 L1944.0 844.9 H1946.0 L1946.0 845.5 H1948.0 L1948.0 845.5 H1950.0 L1950.0 844.3 H1952.0 L1952.0 844.5 H1954.0 L1954.0 845.0 H1956.0 L1956.0 845.4 H1958.0 L1958.0 843.9 H1960.0 L1960.0 842.9 H1962.0 L1962.0 844.5 H1964.0 L1964.0 844.8 H1966.0 L1966.0 843.2 H1968.0 L1968.0 842.2 H1970.0 L1970.0 841.8 H1972.0 L1972.0 842.4 H1974.0 L1974.0 842.0 H1976.0 L1976.0 842.1 H1978.0 L1978.0 842.7 H1980.0 L1980.0 841.4 H1982.0 L1982.0 841.5 H1984.0 L1984.0 840.6 H1986.0 L1986.0 840.4 H1988.0 L1988.0 840.8 H1990.0 L1990.0 842.2 H1992.0 L1992.0 838.8 H1994.0 L1994.0 839.6 H1996.0 L1996.0 840.3 H1998.0 L1998.0 840.1 H2000.0 L2000.0 840.7 H2002.0 L2002.0 839.8 H2004.0 L2004.0 839.8 H2006.0 L2006.0 838.0 H2008.0 L2008.0 838.3 H2010.0 L2010.0 836.8 H2012.0 L2012.0 836.5 H2014.0 L2014.0 838.8 H2016.0 L2016.0 838.0 H2018.0 L2018.0 838.3 H2020.0 L2020.0 835.6 H2022.0 L2022.0 838.1 H2024.0 L2024.0 837.2 H2026.0 L2026.0 836.3 H2028.0 L2028.0 836.9 H2030.0 L2030.0 833.0 H2032.0 L2032.0 832.8 H2034.0 L2034.0 833.7 H2036.0 L2036.0 835.2 H2038.0 L2038.0 836.6 H2040.0 L2040.0 835.4 H2042.0 L2042.0 833.3 H2044.0 L2044.0 833.0 H2046.0 L2046.0 836.5 H2048.0 L2048.0 835.6 H2050.0 L2050.0 834.8 H2052.0 L2052.0 835.9 H2054.0 L2054.0 834.7 H2056.0 L2056.0 836.1 H2058.0 L2058.0 835.9 H2060.0 L2060.0 833.5 H2062.0 L2062.0 834.1 H2064.0 L2064.0 836.2 H2066.0 L2066.0 835.3 H2068.0 L2068.0 837.4 H2070.0 L2070.0 836.9 H2072.0 L2072.0 834.3 H2074.0 L2074.0 835.9 H2076.0 L2076.0 834.4 H2078.0 L2078.0 836.4 H2080.0 L2080.0 834.5 H2082.0 L2082.0 837.0 H2084.0 L2084.0 834.3 H2086.0 L2086.0 833.8 H2088.0 L2088.0 835.5 H2090.0 L2090.0 835.1 H2092.0 L2092.0 835.9 H2094.0 L2094.0 836.7 H2096.0 L2096.0 833.0 H2098.0 L2098.0 833.2 H2100.0 L2100.0 835.7 H2102.0 L2102.0 833.9 H2104.0 L2104.0 834.1 H2106.0 L2106.0 836.4 H2108.0 L2107.5 853 L2108.0 868.4 H2106.0 L2106.0 871.4 H2104.0 L2104.0 871.8 H2102.0 L2102.0 871.1 H2100.0 L2100.0 871.6 H2098.0 L2098.0 871.8 H2096.0 L2096.0 869.0 H2094.0 L2094.0 870.1 H2092.0 L2092.0 870.3 H2090.0 L2090.0 870.6 H2088.0 L2088.0 871.6 H2086.0 L2086.0 870.8 H2084.0 L2084.0 869.0 H2082.0 L2082.0 870.7 H2080.0 L2080.0 868.9 H2078.0 L2078.0 871.0 H2076.0 L2076.0 869.8 H2074.0 L2074.0 872.0 H2072.0 L2072.0 870.2 H2070.0 L2070.0 868.3 H2068.0 L2068.0 870.9 H2066.0 L2066.0 869.9 H2064.0 L2064.0 870.3 H2062.0 L2062.0 870.8 H2060.0 L2060.0 870.2 H2058.0 L2058.0 870.1 H2056.0 L2056.0 870.3 H2054.0 L2054.0 870.8 H2052.0 L2052.0 870.6 H2050.0 L2050.0 870.0 H2048.0 L2048.0 868.4 H2046.0 L2046.0 872.3 H2044.0 L2044.0 873.0 H2042.0 L2042.0 869.1 H2040.0 L2040.0 869.9 H2038.0 L2038.0 870.5 H2036.0 L2036.0 871.9 H2034.0 L2034.0 871.7 H2032.0 L2032.0 871.9 H2030.0 L2030.0 870.2 H2028.0 L2028.0 870.3 H2026.0 L2026.0 868.6 H2024.0 L2024.0 868.3 H2022.0 L2022.0 869.5 H2020.0 L2020.0 868.1 H2018.0 L2018.0 868.0 H2016.0 L2016.0 867.4 H2014.0 L2014.0 868.7 H2012.0 L2012.0 869.1 H2010.0 L2010.0 867.0 H2008.0 L2008.0 867.9 H2006.0 L2006.0 866.2 H2004.0 L2004.0 866.7 H2002.0 L2002.0 865.4 H2000.0 L2000.0 866.2 H1998.0 L1998.0 865.7 H1996.0 L1996.0 866.1 H1994.0 L1994.0 867.2 H1992.0 L1992.0 864.2 H1990.0 L1990.0 865.1 H1988.0 L1988.0 865.7 H1986.0 L1986.0 864.6 H1984.0 L1984.0 863.7 H1982.0 L1982.0 863.8 H1980.0 L1980.0 863.8 H1978.0 L1978.0 864.1 H1976.0 L1976.0 864.2 H1974.0 L1974.0 863.5 H1972.0 L1972.0 864.0 H1970.0 L1970.0 864.3 H1968.0 L1968.0 862.4 H1966.0 L1966.0 861.1 H1964.0 L1964.0 861.7 H1962.0 L1962.0 863.5 H1960.0 L1960.0 862.4 H1958.0 L1958.0 860.0 H1956.0 L1956.0 861.0 H1954.0 L1954.0 861.2 H1952.0 L1952.0 860.9 H1950.0 L1950.0 860.2 H1948.0 L1948.0 860.8 H1946.0 L1946.0 860.8 H1944.0 L1944.0 860.2 H1942.0 L1942.0 860.5 H1940.0 L1940.0 859.4 H1938.0 L1938.0 858.8 H1936.0 L1936.0 858.8 H1934.0 L1934.0 858.0 H1932.0 L1932.0 858.4 H1930.0 L1930.0 858.5 H1928.0 L1928.0 857.9 H1926.0 L1926.0 857.6 H1924.0 L1924.0 857.1 H1922.0 L1922.0 856.5 H1920.0 L1920.0 856.8 H1918.0 L1918.0 856.3 H1916.0 L1916.0 856.5 H1914.0 L1914.0 855.7 H1912.0 L1912.0 855.3 H1910.0 L1910.0 855.4 H1908.0 L1908.0 855.0 H1906.0 Z" fill="#fed9a9"/><path d="M2564.4 787.8 H2851.6 Q2858.1 787.8 2858.1 794.3 V873.4 Q2858.1 879.9 2851.6 879.9 H2564.4 Q2557.9 879.9 2557.9 873.4 V794.3 Q2557.9 787.8 2564.4 787.8 Z" fill="url(#go)" stroke="#0c0c0c" stroke-width="3.800" paint-order="stroke"/><text x="2568.0" y="814" font-size="22" font-weight="bold" fill="#fff">Electro Riser</text><g fill="none" stroke="#fff" stroke-width="1.800"><circle cx="2725.0" cy="806.9" r="7.900"/><circle cx="2735.1" cy="806.9" r="7.900"/></g><path d="M2558.0 853 L2558.0 851.3 H2560.0 L2560.0 851.3 H2562.0 L2562.0 850.6 H2564.0 L2564.0 851.1 H2566.0 L2566.0 851.2 H2568.0 L2568.0 850.4 H2570.0 L2570.0 850.5 H2572.0 L2572.0 850.5 H2574.0 L2574.0 850.3 H2576.0 L2576.0 850.4 H2578.0 L2578.0 850.6 H2580.0 L2580.0 850.1 H2582.0 L2582.0 849.9 H2584.0 L2584.0 849.9 H2586.0 L2586.0 850.1 H2588.0 L2588.0 850.3 H2590.0 L2590.0 850.6 H2592.0 L2592.0 850.0 H2594.0 L2594.0 849.5 H2596.0 L2596.0 850.2 H2598.0 L2598.0 849.9 H2600.0 L2600.0 849.6 H2602.0 L2602.0 850.3 H2604.0 L2604.0 849.5 H2606.0 L2606.0 850.0 H2608.0 L2608.0 849.1 H2610.0 L2610.0 848.9 H2612.0 L2612.0 849.5 H2614.0 L2614.0 849.2 H2616.0 L2616.0 848.8 H2618.0 L2618.0 849.3 H2620.0 L2620.0 848.4 H2622.0 L2622.0 849.7 H2624.0 L2624.0 849.1 H2626.0 L2626.0 848.0 H2628.0 L2628.0 849.5 H2630.0 L2630.0 848.4 H2632.0 L2632.0 848.6 H2634.0 L2634.0 849.1 H2636.0 L2636.0 848.4 H2638.0 L2638.0 848.8 H2640.0 L2640.0 848.5 H2642.0 L2642.0 847.5 H2644.0 L2644.0 848.6 H2646.0 L2646.0 848.4 H2648.0 L2648.0 848.6 H2650.0 L2650.0 846.9 H2652.0 L2652.0 847.3 H2654.0 L2654.0 847.8 H2656.0 L2656.0 846.6 H2658.0 L2658.0 847.8 H2660.0 L2660.0 847.0 H2662.0 L2662.0 846.9 H2664.0 L2664.0 846.1 H2666.0 L2666.0 845.9 H2668.0 L2668.0 848.0 H2670.0 L2670.0 845.9 H2672.0 L2672.0 847.6 H2674.0 L2674.0 846.1 H2676.0 L2676.0 847.8 H2678.0 L2678.0 846.0 H2680.0 L2680.0 845.7 H2682.0 L2682.0 845.7 H2684.0 L2684.0 846.7 H2686.0 L2686.0 846.4 H2688.0 L2688.0 847.4 H2690.0 L2690.0 845.2 H2692.0 L2692.0 846.3 H2694.0 L2694.0 847.2 H2696.0 L2696.0 847.0 H2698.0 L2698.0 845.2 H2700.0 L2700.0 845.5 H2702.0 L2702.0 846.7 H2704.0 L2704.0 845.6 H2706.0 L2706.0 845.0 H2708.0 L2708.0 846.4 H2710.0 L2710.0 845.4 H2712.0 L2712.0 844.3 H2714.0 L2714.0 845.3 H2716.0 L2716.0 843.7 H2718.0 L2718.0 845.5 H2720.0 L2720.0 844.2 H2722.0 L2722.0 845.4 H2724.0 L2724.0 843.6 H2726.0 L2726.0 844.0 H2728.0 L2728.0 843.2 H2730.0 L2730.0 844.9 H2732.0 L2732.0 844.0 H2734.0 L2734.0 843.5 H2736.0 L2736.0 845.6 H2738.0 L2738.0 843.3 H2740.0 L2740.0 844.4 H2742.0 L2742.0 843.8 H2744.0 L2744.0 842.6 H2746.0 L2746.0 844.5 H2748.0 L2748.0 845.1 H2750.0 L2750.0 842.3 H2752.0 L2752.0 844.7 H2754.0 L2754.0 842.8 H2756.0 L2756.0 841.9 H2758.0 L2758.0 842.4 H2760.0 L2760.0 842.0 H2762.0 L2762.0 843.3 H2764.0 L2764.0 842.3 H2766.0 L2766.0 843.4 H2768.0 L2768.0 841.3 H2770.0 L2770.0 841.6 H2772.0 L2772.0 844.7 H2774.0 L2774.0 841.6 H2776.0 L2776.0 840.5 H2778.0 L2778.0 843.7 H2780.0 L2780.0 840.4 H2782.0 L2782.0 844.0 H2784.0 L2784.0 839.9 H2786.0 L2786.0 843.6 H2788.0 L2788.0 840.3 H2790.0 L2790.0 840.9 H2792.0 L2792.0 842.7 H2794.0 L2794.0 843.6 H2796.0 L2796.0 843.4 H2798.0 L2798.0 842.0 H2800.0 L2800.0 840.1 H2802.0 L2802.0 839.3 H2804.0 L2804.0 840.0 H2806.0 L2806.0 841.3 H2808.0 L2808.0 841.4 H2810.0 L2810.0 839.3 H2812.0 L2812.0 839.5 H2814.0 L2814.0 841.2 H2816.0 L2816.0 839.3 H2818.0 L2818.0 842.4 H2820.0 L2820.0 839.1 H2822.0 L2822.0 840.2 H2824.0 L2824.0 838.1 H2826.0 L2826.0 837.5 H2828.0 L2828.0 837.9 H2830.0 L2830.0 841.7 H2832.0 L2832.0 840.6 H2834.0 L2834.0 839.7 H2836.0 L2836.0 840.5 H2838.0 L2838.0 840.1 H2840.0 L2840.0 839.9 H2842.0 L2842.0 836.8 H2844.0 L2844.0 838.1 H2846.0 L2846.0 836.7 H2848.0 L2848.0 837.9 H2850.0 L2849.0 853 L2850.0 867.9 H2848.0 L2848.0 868.5 H2846.0 L2846.0 867.6 H2844.0 L2844.0 868.7 H2842.0 L2842.0 866.1 H2840.0 L2840.0 865.5 H2838.0 L2838.0 865.2 H2836.0 L2836.0 866.8 H2834.0 L2834.0 865.5 H2832.0 L2832.0 864.5 H2830.0 L2830.0 867.6 H2828.0 L2828.0 867.6 H2826.0 L2826.0 867.5 H2824.0 L2824.0 865.0 H2822.0 L2822.0 867.0 H2820.0 L2820.0 864.1 H2818.0 L2818.0 867.7 H2816.0 L2816.0 864.1 H2814.0 L2814.0 865.7 H2812.0 L2812.0 866.5 H2810.0 L2810.0 864.4 H2808.0 L2808.0 865.2 H2806.0 L2806.0 865.6 H2804.0 L2804.0 866.4 H2802.0 L2802.0 866.1 H2800.0 L2800.0 863.7 H2798.0 L2798.0 863.2 H2796.0 L2796.0 862.4 H2794.0 L2794.0 862.8 H2792.0 L2792.0 865.4 H2790.0 L2790.0 866.2 H2788.0 L2788.0 862.2 H2786.0 L2786.0 865.9 H2784.0 L2784.0 861.8 H2782.0 L2782.0 865.1 H2780.0 L2780.0 862.3 H2778.0 L2778.0 864.8 H2776.0 L2776.0 864.0 H2774.0 L2774.0 861.4 H2772.0 L2772.0 864.3 H2770.0 L2770.0 864.5 H2768.0 L2768.0 862.8 H2766.0 L2766.0 863.4 H2764.0 L2764.0 862.9 H2762.0 L2762.0 864.4 H2760.0 L2760.0 863.4 H2758.0 L2758.0 864.4 H2756.0 L2756.0 863.0 H2754.0 L2754.0 861.2 H2752.0 L2752.0 863.8 H2750.0 L2750.0 860.8 H2748.0 L2748.0 861.1 H2746.0 L2746.0 863.7 H2744.0 L2744.0 862.2 H2742.0 L2742.0 861.3 H2740.0 L2740.0 863.2 H2738.0 L2738.0 860.2 H2736.0 L2736.0 862.6 H2734.0 L2734.0 861.5 H2732.0 L2732.0 861.0 H2730.0 L2730.0 863.0 H2728.0 L2728.0 861.6 H2726.0 L2726.0 862.1 H2724.0 L2724.0 860.2 H2722.0 L2722.0 861.2 H2720.0 L2720.0 860.3 H2718.0 L2718.0 861.5 H2716.0 L2716.0 860.7 H2714.0 L2714.0 861.4 H2712.0 L2712.0 860.1 H2710.0 L2710.0 859.8 H2708.0 L2708.0 861.5 H2706.0 L2706.0 860.6 H2704.0 L2704.0 859.4 H2702.0 L2702.0 859.8 H2700.0 L2700.0 860.6 H2698.0 L2698.0 858.8 H2696.0 L2696.0 858.8 H2694.0 L2694.0 859.5 H2692.0 L2692.0 860.3 H2690.0 L2690.0 858.5 H2688.0 L2688.0 859.2 H2686.0 L2686.0 859.2 H2684.0 L2684.0 860.4 H2682.0 L2682.0 860.0 H2680.0 L2680.0 860.3 H2678.0 L2678.0 857.7 H2676.0 L2676.0 859.4 H2674.0 L2674.0 858.3 H2672.0 L2672.0 859.6 H2670.0 L2670.0 857.6 H2668.0 L2668.0 859.9 H2666.0 L2666.0 859.3 H2664.0 L2664.0 858.7 H2662.0 L2662.0 858.8 H2660.0 L2660.0 858.2 H2658.0 L2658.0 859.4 H2656.0 L2656.0 858.1 H2654.0 L2654.0 858.6 H2652.0 L2652.0 859.3 H2650.0 L2650.0 857.2 H2648.0 L2648.0 857.3 H2646.0 L2646.0 857.3 H2644.0 L2644.0 858.1 H2642.0 L2642.0 857.7 H2640.0 L2640.0 857.0 H2638.0 L2638.0 857.4 H2636.0 L2636.0 856.9 H2634.0 L2634.0 857.6 H2632.0 L2632.0 857.4 H2630.0 L2630.0 856.4 H2628.0 L2628.0 857.8 H2626.0 L2626.0 856.7 H2624.0 L2624.0 856.4 H2622.0 L2622.0 857.4 H2620.0 L2620.0 856.7 H2618.0 L2618.0 857.1 H2616.0 L2616.0 856.6 H2614.0 L2614.0 856.4 H2612.0 L2612.0 856.7 H2610.0 L2610.0 856.9 H2608.0 L2608.0 855.9 H2606.0 L2606.0 856.4 H2604.0 L2604.0 855.8 H2602.0 L2602.0 856.1 H2600.0 L2600.0 855.9 H2598.0 L2598.0 855.7 H2596.0 L2596.0 856.5 H2594.0 L2594.0 855.9 H2592.0 L2592.0 855.3 H2590.0 L2590.0 855.5 H2588.0 L2588.0 855.7 H2586.0 L2586.0 856.0 H2584.0 L2584.0 856.1 H2582.0 L2582.0 855.8 H2580.0 L2580.0 855.6 H2578.0 L2578.0 855.5 H2576.0 L2576.0 855.7 H2574.0 L2574.0 855.5 H2572.0 L2572.0 855.4 H2570.0 L2570.0 855.6 H2568.0 L2568.0 854.8 H2566.0 L2566.0 854.8 H2564.0 L2564.0 855.4 H2562.0 L2562.0 854.7 H2560.0 L2560.0 854.7 H2558.0 Z" fill="#fed9a9"/><path d="M1707.9 885.8 H2128.6 Q2135.1 885.8 2135.1 892.3 V971.4 Q2135.1 977.9 2128.6 977.9 H1707.9 Q1701.4 977.9 1701.4 971.4 V892.3 Q1701.4 885.8 1707.9 885.8 Z" fill="url(#go)" stroke="#0c0c0c" stroke-width="3.800" paint-order="stroke"/><text x="1711.5" y="912" font-size="22" font-weight="bold" fill="#fff">Boomer FX</text><g fill="none" stroke="#fff" stroke-width="1.800"><circle cx="1859.0" cy="904.9" r="7.900"/><circle cx="1869.1" cy="904.9" r="7.900"/></g><path d="M1701.5 951.3 L1701.5 926.4 H1703.5 L1703.5 929.2 H1705.5 L1705.5 930.1 H1707.5 L1707.5 932.0 H1709.5 L1709.5 933.9 H1711.5 L1711.5 934.7 H1713.5 L1713.5 934.8 H1715.5 L1715.5 934.8 H1717.5 L1717.5 935.6 H1719.5 L1719.5 937.1 H1721.5 L1721.5 936.2 H1723.5 L1723.5 935.6 H1725.5 L1725.5 936.9 H1727.5 L1727.5 935.3 H1729.5 L1729.5 936.1 H1731.5 L1731.5 934.8 H1733.5 L1733.5 935.2 H1735.5 L1735.5 934.9 H1737.5 L1737.5 935.2 H1739.5 L1739.5 935.4 H1741.5 L1741.5 935.1 H1743.5 L1743.5 934.8 H1745.5 L1745.5 934.6 H1747.5 L1747.5 936.5 H1749.5 L1749.5 936.1 H1751.5 L1751.5 934.9 H1753.5 L1753.5 935.2 H1755.5 L1755.5 935.3 H1757.5 L1757.5 936.4 H1759.5 L1759.5 935.8 H1761.5 L1761.5 936.3 H1763.5 L1763.5 936.9 H1765.5 L1765.5 937.9 H1767.5 L1767.5 938.0 H1769.5 L1769.5 937.9 H1771.5 L1771.5 937.2 H1773.5 L1773.5 937.7 H1775.5 L1775.5 937.8 H1777.5 L1777.5 937.0 H1779.5 L1779.5 936.7 H1781.5 L1781.5 936.8 H1783.5 L1783.5 936.3 H1785.5 L1785.5 936.9 H1787.5 L1787.5 938.1 H1789.5 L1789.5 937.7 H1791.5 L1791.5 937.4 H1793.5 L1793.5 938.5 H1795.5 L1795.5 939.2 H1797.5 L1797.5 939.8 H1799.5 L1799.5 940.4 H1801.5 L1801.5 941.3 H1803.5 L1803.5 941.5 H1805.5 L1805.5 942.2 H1807.5 L1807.5 943.4 H1809.5 L1809.5 943.1 H1811.5 L1811.5 943.2 H1813.5 L1813.5 944.5 H1815.5 L1815.5 944.7 H1817.5 L1817.5 945.7 H1819.5 L1819.5 946.5 H1821.5 L1821.5 946.7 H1823.5 L1823.5 947.4 H1825.5 L1825.5 947.8 H1827.5 L1827.5 948.3 H1829.5 L1829.5 948.6 H1831.5 L1831.5 949.3 H1833.5 L1833.5 949.9 H1835.5 L1835.5 950.2 H1837.5 L1837.5 950.2 H1839.5 L1839.5 950.2 H1841.5 L1841.5 950.2 H1843.5 L1843.5 950.2 H1845.5 L1845.5 950.3 H1847.5 L1847.5 950.2 H1849.5 L1849.5 950.2 H1851.5 L1851.5 950.3 H1853.5 L1853.5 950.2 H1855.5 L1855.5 950.2 H1857.5 L1857.5 950.3 H1859.5 L1859.5 950.2 H1861.5 L1861.5 950.3 H1863.5 L1863.5 950.2 H1865.5 L1865.5 950.2 H1867.5 L1867.5 950.2 H1869.5 L1869.5 950.2 H1871.5 L1871.5 950.3 H1873.5 L1873.5 950.2 H1875.5 L1875.5 950.2 H1877.5 L1877.5 950.2 H1879.5 L1879.5 950.2 H1881.5 L1881.5 950.2 H1883.5 L1883.5 950.2 H1885.5 L1885.5 950.2 H1887.5 L1887.5 950.2 H1889.5 L1889.5 950.2 H1891.5 L1891.5 950.2 H1893.5 L1893.5 950.2 H1895.5 L1895.5 950.2 H1897.5 L1897.5 950.2 H1899.5 L1899.5 950.2 H1901.5 L1901.5 950.2 H1903.5 L1903.5 950.2 H1905.5 L1905.5 950.3 H1907.5 L1907.5 950.2 H1909.5 L1909.5 950.2 H1911.5 L1911.5 950.2 H1913.5 L1913.5 950.2 H1915.5 L1915.5 950.2 H1917.5 L1917.5 950.2 H1919.5 L1919.5 950.2 H1921.5 L1921.5 950.2 H1923.5 L1923.5 950.2 H1925.5 L1925.5 950.2 H1927.5 L1927.5 950.2 H1929.5 L1929.5 950.2 H1931.5 L1931.5 950.2 H1933.5 L1933.5 950.2 H1935.5 L1935.5 950.2 H1937.5 L1937.5 950.2 H1939.5 L1939.5 950.2 H1941.5 L1941.5 950.2 H1943.5 L1943.5 950.2 H1945.5 L1945.5 950.2 H1947.5 L1947.5 950.2 H1949.5 L1949.5 950.2 H1951.5 L1951.5 950.2 H1953.5 L1953.5 950.2 H1955.5 L1955.5 950.2 H1957.5 L1957.5 950.3 H1959.5 L1959.5 950.2 H1961.5 L1961.5 950.2 H1963.5 L1963.5 950.3 H1965.5 L1965.5 950.2 H1967.5 L1967.5 950.2 H1969.5 L1969.5 950.2 H1971.5 L1971.5 950.2 H1973.5 L1973.5 950.2 H1975.5 L1975.5 950.2 H1977.5 L1977.5 950.2 H1979.5 L1979.5 950.2 H1981.5 L1981.5 950.2 H1983.5 L1983.5 950.2 H1985.5 L1985.5 950.3 H1987.5 L1987.5 950.2 H1989.5 L1989.5 950.2 H1991.5 L1991.5 950.2 H1993.5 L1993.5 950.2 H1995.5 L1995.5 950.2 H1997.5 L1997.5 950.3 H1999.5 L1999.5 950.2 H2001.5 L2001.5 950.2 H2003.5 L2003.5 950.2 H2005.5 L2005.5 950.2 H2007.5 L2007.5 950.2 H2009.5 L2009.5 950.2 H2011.5 L2011.5 950.3 H2013.5 L2013.5 950.2 H2015.5 L2015.5 950.2 H2017.5 L2017.5 950.2 H2019.5 L2019.5 950.2 H2021.5 L2021.5 950.2 H2023.5 L2023.5 950.2 H2025.5 L2025.5 950.2 H2027.5 L2027.5 950.2 H2029.5 L2029.5 950.2 H2031.5 L2031.5 950.2 H2033.5 L2033.5 950.2 H2035.5 L2035.5 950.2 H2037.5 L2037.5 950.2 H2039.5 L2039.5 950.2 H2041.5 L2041.5 950.2 H2043.5 L2043.5 950.2 H2045.5 L2045.5 950.2 H2047.5 L2047.5 950.2 H2049.5 L2049.5 950.2 H2051.5 L2051.5 950.2 H2053.5 L2053.5 950.2 H2055.5 L2055.5 950.2 H2057.5 L2057.5 950.2 H2059.5 L2059.5 950.2 H2061.5 L2061.5 950.2 H2063.5 L2063.5 950.2 H2065.5 L2065.5 950.2 H2067.5 L2067.5 950.2 H2069.5 L2069.5 950.2 H2071.5 L2071.5 950.2 H2073.5 L2073.5 950.2 H2075.5 L2075.5 950.2 H2077.5 L2077.5 950.2 H2079.5 L2079.5 950.2 H2081.5 L2081.5 950.2 H2083.5 L2083.5 950.2 H2085.5 L2085.5 950.2 H2087.5 L2087.5 950.2 H2089.5 L2089.5 950.2 H2091.5 L2091.5 950.2 H2093.5 L2093.5 950.2 H2095.5 L2095.5 950.2 H2097.5 L2097.5 950.2 H2099.5 L2099.5 950.2 H2101.5 L2101.5 950.2 H2103.5 L2103.5 950.2 H2105.5 L2105.5 950.2 H2107.5 L2107.5 950.2 H2109.5 L2109.5 950.2 H2111.5 L2111.5 950.2 H2113.5 L2113.5 950.2 H2115.5 L2115.5 950.2 H2117.5 L2117.5 950.2 H2119.5 L2119.5 950.2 H2121.5 L2121.5 950.2 H2123.5 L2123.5 950.2 H2125.5 L2125.5 950.2 H2127.5 L2127.5 950.3 H2129.5 L2129.5 950.2 H2131.5 L2131.5 950.2 H2133.5 L2133.5 950.2 H2135.5 L2134.0 951.3 L2135.5 952.3 H2133.5 L2133.5 952.2 H2131.5 L2131.5 952.3 H2129.5 L2129.5 952.3 H2127.5 L2127.5 952.3 H2125.5 L2125.5 952.3 H2123.5 L2123.5 952.3 H2121.5 L2121.5 952.3 H2119.5 L2119.5 952.3 H2117.5 L2117.5 952.3 H2115.5 L2115.5 952.2 H2113.5 L2113.5 952.3 H2111.5 L2111.5 952.3 H2109.5 L2109.5 952.3 H2107.5 L2107.5 952.3 H2105.5 L2105.5 952.3 H2103.5 L2103.5 952.3 H2101.5 L2101.5 952.3 H2099.5 L2099.5 952.2 H2097.5 L2097.5 952.3 H2095.5 L2095.5 952.3 H2093.5 L2093.5 952.3 H2091.5 L2091.5 952.3 H2089.5 L2089.5 952.3 H2087.5 L2087.5 952.3 H2085.5 L2085.5 952.3 H2083.5 L2083.5 952.3 H2081.5 L2081.5 952.3 H2079.5 L2079.5 952.3 H2077.5 L2077.5 952.3 H2075.5 L2075.5 952.3 H2073.5 L2073.5 952.3 H2071.5 L2071.5 952.3 H2069.5 L2069.5 952.3 H2067.5 L2067.5 952.3 H2065.5 L2065.5 952.3 H2063.5 L2063.5 952.3 H2061.5 L2061.5 952.3 H2059.5 L2059.5 952.3 H2057.5 L2057.5 952.3 H2055.5 L2055.5 952.3 H2053.5 L2053.5 952.3 H2051.5 L2051.5 952.2 H2049.5 L2049.5 952.3 H2047.5 L2047.5 952.3 H2045.5 L2045.5 952.3 H2043.5 L2043.5 952.3 H2041.5 L2041.5 952.3 H2039.5 L2039.5 952.3 H2037.5 L2037.5 952.3 H2035.5 L2035.5 952.3 H2033.5 L2033.5 952.2 H2031.5 L2031.5 952.3 H2029.5 L2029.5 952.3 H2027.5 L2027.5 952.3 H2025.5 L2025.5 952.2 H2023.5 L2023.5 952.3 H2021.5 L2021.5 952.3 H2019.5 L2019.5 952.3 H2017.5 L2017.5 952.3 H2015.5 L2015.5 952.3 H2013.5 L2013.5 952.3 H2011.5 L2011.5 952.3 H2009.5 L2009.5 952.3 H2007.5 L2007.5 952.2 H2005.5 L2005.5 952.3 H2003.5 L2003.5 952.3 H2001.5 L2001.5 952.3 H1999.5 L1999.5 952.3 H1997.5 L1997.5 952.2 H1995.5 L1995.5 952.3 H1993.5 L1993.5 952.3 H1991.5 L1991.5 952.3 H1989.5 L1989.5 952.3 H1987.5 L1987.5 952.2 H1985.5 L1985.5 952.3 H1983.5 L1983.5 952.3 H1981.5 L1981.5 952.3 H1979.5 L1979.5 952.3 H1977.5 L1977.5 952.3 H1975.5 L1975.5 952.3 H1973.5 L1973.5 952.3 H1971.5 L1971.5 952.3 H1969.5 L1969.5 952.3 H1967.5 L1967.5 952.3 H1965.5 L1965.5 952.3 H1963.5 L1963.5 952.3 H1961.5 L1961.5 952.3 H1959.5 L1959.5 952.3 H1957.5 L1957.5 952.3 H1955.5 L1955.5 952.3 H1953.5 L1953.5 952.3 H1951.5 L1951.5 952.3 H1949.5 L1949.5 952.3 H1947.5 L1947.5 952.3 H1945.5 L1945.5 952.3 H1943.5 L1943.5 952.3 H1941.5 L1941.5 952.3 H1939.5 L1939.5 952.3 H1937.5 L1937.5 952.3 H1935.5 L1935.5 952.2 H1933.5 L1933.5 952.3 H1931.5 L1931.5 952.3 H1929.5 L1929.5 952.3 H1927.5 L1927.5 952.3 H1925.5 L1925.5 952.3 H1923.5 L1923.5 952.3 H1921.5 L1921.5 952.3 H1919.5 L1919.5 952.3 H1917.5 L1917.5 952.3 H1915.5 L1915.5 952.3 H1913.5 L1913.5 952.3 H1911.5 L1911.5 952.2 H1909.5 L1909.5 952.3 H1907.5 L1907.5 952.2 H1905.5 L1905.5 952.3 H1903.5 L1903.5 952.3 H1901.5 L1901.5 952.2 H1899.5 L1899.5 952.3 H1897.5 L1897.5 952.3 H1895.5 L1895.5 952.3 H1893.5 L1893.5 952.3 H1891.5 L1891.5 952.3 H1889.5 L1889.5 952.3 H1887.5 L1887.5 952.3 H1885.5 L1885.5 952.3 H1883.5 L1883.5 952.3 H1881.5 L1881.5 952.3 H1879.5 L1879.5 952.3 H1877.5 L1877.5 952.2 H1875.5 L1875.5 952.3 H1873.5 L1873.5 952.3 H1871.5 L1871.5 952.2 H1869.5 L1869.5 952.3 H1867.5 L1867.5 952.3 H1865.5 L1865.5 952.3 H1863.5 L1863.5 952.3 H1861.5 L1861.5 952.3 H1859.5 L1859.5 952.3 H1857.5 L1857.5 952.3 H1855.5 L1855.5 952.3 H1853.5 L1853.5 952.3 H1851.5 L1851.5 952.3 H1849.5 L1849.5 952.3 H1847.5 L1847.5 952.3 H1845.5 L1845.5 952.3 H1843.5 L1843.5 952.3 H1841.5 L1841.5 952.3 H1839.5 L1839.5 952.3 H1837.5 L1837.5 952.2 H1835.5 L1835.5 952.6 H1833.5 L1833.5 953.1 H1831.5 L1831.5 953.8 H1829.5 L1829.5 954.0 H1827.5 L1827.5 954.5 H1825.5 L1825.5 954.9 H1823.5 L1823.5 955.3 H1821.5 L1821.5 955.8 H1819.5 L1819.5 956.5 H1817.5 L1817.5 957.4 H1815.5 L1815.5 957.7 H1813.5 L1813.5 958.4 H1811.5 L1811.5 959.3 H1809.5 L1809.5 958.4 H1807.5 L1807.5 959.4 H1805.5 L1805.5 959.9 H1803.5 L1803.5 960.0 H1801.5 L1801.5 961.4 H1799.5 L1799.5 961.3 H1797.5 L1797.5 962.0 H1795.5 L1795.5 962.8 H1793.5 L1793.5 964.5 H1791.5 L1791.5 964.1 H1789.5 L1789.5 963.0 H1787.5 L1787.5 964.9 H1785.5 L1785.5 964.6 H1783.5 L1783.5 964.1 H1781.5 L1781.5 964.5 H1779.5 L1779.5 964.5 H1777.5 L1777.5 962.8 H1775.5 L1775.5 964.3 H1773.5 L1773.5 963.5 H1771.5 L1771.5 964.3 H1769.5 L1769.5 964.0 H1767.5 L1767.5 964.4 H1765.5 L1765.5 965.1 H1763.5 L1763.5 964.4 H1761.5 L1761.5 966.5 H1759.5 L1759.5 965.8 H1757.5 L1757.5 965.7 H1755.5 L1755.5 966.2 H1753.5 L1753.5 967.3 H1751.5 L1751.5 964.6 H1749.5 L1749.5 965.4 H1747.5 L1747.5 966.6 H1745.5 L1745.5 966.6 H1743.5 L1743.5 967.0 H1741.5 L1741.5 965.7 H1739.5 L1739.5 966.2 H1737.5 L1737.5 967.1 H1735.5 L1735.5 967.1 H1733.5 L1733.5 966.6 H1731.5 L1731.5 965.5 H1729.5 L1729.5 966.0 H1727.5 L1727.5 964.2 H1725.5 L1725.5 965.3 H1723.5 L1723.5 965.9 H1721.5 L1721.5 964.7 H1719.5 L1719.5 965.4 H1717.5 L1717.5 966.9 H1715.5 L1715.5 966.4 H1713.5 L1713.5 966.0 H1711.5 L1711.5 967.5 H1709.5 L1709.5 968.6 H1707.5 L1707.5 971.1 H1705.5 L1705.5 971.2 H1703.5 L1703.5 974.9 H1701.5 Z" fill="#fed9a9"/><path d="M2525.9 885.8 H2851.6 Q2858.1 885.8 2858.1 892.3 V971.4 Q2858.1 977.9 2851.6 977.9 H2525.9 Q2519.4 977.9 2519.4 971.4 V892.3 Q2519.4 885.8 2525.9 885.8 Z" fill="url(#go)" stroke="#0c0c0c" stroke-width="3.800" paint-order="stroke"/><text x="2529.5" y="912" font-size="22" font-weight="bold" fill="#fff">Boomer FX</text><g fill="none" stroke="#fff" stroke-width="1.800"><circle cx="2677.0" cy="904.9" r="7.900"/><circle cx="2687.1" cy="904.9" r="7.900"/></g><path d="M2519.5 951.3 L2519.5 926.6 H2521.5 L2521.5 928.7 H2523.5 L2523.5 931.0 H2525.5 L2525.5 932.2 H2527.5 L2527.5 934.1 H2529.5 L2529.5 934.9 H2531.5 L2531.5 934.5 H2533.5 L2533.5 935.5 H2535.5 L2535.5 935.3 H2537.5 L2537.5 934.9 H2539.5 L2539.5 936.4 H2541.5 L2541.5 935.1 H2543.5 L2543.5 936.3 H2545.5 L2545.5 934.6 H2547.5 L2547.5 935.5 H2549.5 L2549.5 934.8 H2551.5 L2551.5 935.0 H2553.5 L2553.5 936.9 H2555.5 L2555.5 936.1 H2557.5 L2557.5 934.8 H2559.5 L2559.5 935.5 H2561.5 L2561.5 936.0 H2563.5 L2563.5 934.7 H2565.5 L2565.5 935.5 H2567.5 L2567.5 934.7 H2569.5 L2569.5 936.1 H2571.5 L2571.5 935.0 H2573.5 L2573.5 935.2 H2575.5 L2575.5 935.9 H2577.5 L2577.5 935.0 H2579.5 L2579.5 936.2 H2581.5 L2581.5 937.1 H2583.5 L2583.5 937.9 H2585.5 L2585.5 937.0 H2587.5 L2587.5 938.5 H2589.5 L2589.5 937.6 H2591.5 L2591.5 936.4 H2593.5 L2593.5 936.2 H2595.5 L2595.5 937.2 H2597.5 L2597.5 937.6 H2599.5 L2599.5 937.4 H2601.5 L2601.5 936.3 H2603.5 L2603.5 937.1 H2605.5 L2605.5 936.3 H2607.5 L2607.5 938.7 H2609.5 L2609.5 939.0 H2611.5 L2611.5 938.5 H2613.5 L2613.5 939.1 H2615.5 L2615.5 939.2 H2617.5 L2617.5 939.9 H2619.5 L2619.5 941.3 H2621.5 L2621.5 942.0 H2623.5 L2623.5 942.5 H2625.5 L2625.5 943.1 H2627.5 L2627.5 942.8 H2629.5 L2629.5 944.1 H2631.5 L2631.5 944.1 H2633.5 L2633.5 944.6 H2635.5 L2635.5 945.4 H2637.5 L2637.5 945.8 H2639.5 L2639.5 946.6 H2641.5 L2641.5 947.3 H2643.5 L2643.5 947.7 H2645.5 L2645.5 948.1 H2647.5 L2647.5 948.7 H2649.5 L2649.5 949.4 H2651.5 L2651.5 949.9 H2653.5 L2653.5 950.2 H2655.5 L2655.5 950.2 H2657.5 L2657.5 950.2 H2659.5 L2659.5 950.2 H2661.5 L2661.5 950.2 H2663.5 L2663.5 950.2 H2665.5 L2665.5 950.2 H2667.5 L2667.5 950.3 H2669.5 L2669.5 950.3 H2671.5 L2671.5 950.2 H2673.5 L2673.5 950.2 H2675.5 L2675.5 950.2 H2677.5 L2677.5 950.2 H2679.5 L2679.5 950.2 H2681.5 L2681.5 950.2 H2683.5 L2683.5 950.2 H2685.5 L2685.5 950.2 H2687.5 L2687.5 950.2 H2689.5 L2689.5 950.2 H2691.5 L2691.5 950.2 H2693.5 L2693.5 950.2 H2695.5 L2695.5 950.2 H2697.5 L2697.5 950.2 H2699.5 L2699.5 950.2 H2701.5 L2701.5 950.2 H2703.5 L2703.5 950.2 H2705.5 L2705.5 950.3 H2707.5 L2707.5 950.2 H2709.5 L2709.5 950.2 H2711.5 L2711.5 950.3 H2713.5 L2713.5 950.2 H2715.5 L2715.5 950.2 H2717.5 L2717.5 950.2 H2719.5 L2719.5 950.2 H2721.5 L2721.5 950.2 H2723.5 L2723.5 950.2 H2725.5 L2725.5 950.2 H2727.5 L2727.5 950.2 H2729.5 L2729.5 950.2 H2731.5 L2731.5 950.2 H2733.5 L2733.5 950.2 H2735.5 L2735.5 950.2 H2737.5 L2737.5 950.2 H2739.5 L2739.5 950.2 H2741.5 L2741.5 950.2 H2743.5 L2743.5 950.2 H2745.5 L2745.5 950.2 H2747.5 L2747.5 950.2 H2749.5 L2749.5 950.3 H2751.5 L2751.5 950.2 H2753.5 L2753.5 950.3 H2755.5 L2755.5 950.2 H2757.5 L2757.5 950.2 H2759.5 L2759.5 950.2 H2761.5 L2761.5 950.3 H2763.5 L2763.5 950.2 H2765.5 L2765.5 950.2 H2767.5 L2767.5 950.2 H2769.5 L2769.5 950.2 H2771.5 L2771.5 950.2 H2773.5 L2773.5 950.2 H2775.5 L2775.5 950.2 H2777.5 L2777.5 950.2 H2779.5 L2779.5 950.2 H2781.5 L2781.5 950.2 H2783.5 L2783.5 950.2 H2785.5 L2785.5 950.2 H2787.5 L2787.5 950.2 H2789.5 L2789.5 950.2 H2791.5 L2791.5 950.2 H2793.5 L2793.5 950.2 H2795.5 L2795.5 950.2 H2797.5 L2797.5 950.2 H2799.5 L2799.5 950.2 H2801.5 L2801.5 950.2 H2803.5 L2803.5 950.2 H2805.5 L2805.5 950.2 H2807.5 L2807.5 950.2 H2809.5 L2809.5 950.2 H2811.5 L2811.5 950.2 H2813.5 L2813.5 950.2 H2815.5 L2815.5 950.2 H2817.5 L2817.5 950.2 H2819.5 L2819.5 950.2 H2821.5 L2821.5 950.2 H2823.5 L2823.5 950.2 H2825.5 L2825.5 950.2 H2827.5 L2827.5 950.2 H2829.5 L2829.5 950.3 H2831.5 L2831.5 950.2 H2833.5 L2833.5 950.2 H2835.5 L2835.5 950.2 H2837.5 L2837.5 950.2 H2839.5 L2839.5 950.3 H2841.5 L2841.5 950.2 H2843.5 L2843.5 950.2 H2845.5 L2845.5 950.2 H2847.5 L2847.5 950.2 H2849.5 L2849.0 951.3 L2849.5 952.3 H2847.5 L2847.5 952.3 H2845.5 L2845.5 952.3 H2843.5 L2843.5 952.2 H2841.5 L2841.5 952.3 H2839.5 L2839.5 952.3 H2837.5 L2837.5 952.2 H2835.5 L2835.5 952.3 H2833.5 L2833.5 952.3 H2831.5 L2831.5 952.2 H2829.5 L2829.5 952.3 H2827.5 L2827.5 952.3 H2825.5 L2825.5 952.3 H2823.5 L2823.5 952.3 H2821.5 L2821.5 952.3 H2819.5 L2819.5 952.3 H2817.5 L2817.5 952.3 H2815.5 L2815.5 952.2 H2813.5 L2813.5 952.2 H2811.5 L2811.5 952.3 H2809.5 L2809.5 952.2 H2807.5 L2807.5 952.2 H2805.5 L2805.5 952.3 H2803.5 L2803.5 952.2 H2801.5 L2801.5 952.3 H2799.5 L2799.5 952.3 H2797.5 L2797.5 952.3 H2795.5 L2795.5 952.3 H2793.5 L2793.5 952.3 H2791.5 L2791.5 952.3 H2789.5 L2789.5 952.3 H2787.5 L2787.5 952.2 H2785.5 L2785.5 952.3 H2783.5 L2783.5 952.3 H2781.5 L2781.5 952.3 H2779.5 L2779.5 952.3 H2777.5 L2777.5 952.3 H2775.5 L2775.5 952.3 H2773.5 L2773.5 952.3 H2771.5 L2771.5 952.3 H2769.5 L2769.5 952.3 H2767.5 L2767.5 952.3 H2765.5 L2765.5 952.2 H2763.5 L2763.5 952.2 H2761.5 L2761.5 952.2 H2759.5 L2759.5 952.2 H2757.5 L2757.5 952.3 H2755.5 L2755.5 952.3 H2753.5 L2753.5 952.3 H2751.5 L2751.5 952.3 H2749.5 L2749.5 952.3 H2747.5 L2747.5 952.3 H2745.5 L2745.5 952.3 H2743.5 L2743.5 952.3 H2741.5 L2741.5 952.3 H2739.5 L2739.5 952.3 H2737.5 L2737.5 952.3 H2735.5 L2735.5 952.3 H2733.5 L2733.5 952.3 H2731.5 L2731.5 952.3 H2729.5 L2729.5 952.3 H2727.5 L2727.5 952.2 H2725.5 L2725.5 952.2 H2723.5 L2723.5 952.3 H2721.5 L2721.5 952.3 H2719.5 L2719.5 952.3 H2717.5 L2717.5 952.3 H2715.5 L2715.5 952.3 H2713.5 L2713.5 952.3 H2711.5 L2711.5 952.3 H2709.5 L2709.5 952.3 H2707.5 L2707.5 952.3 H2705.5 L2705.5 952.2 H2703.5 L2703.5 952.3 H2701.5 L2701.5 952.3 H2699.5 L2699.5 952.3 H2697.5 L2697.5 952.3 H2695.5 L2695.5 952.3 H2693.5 L2693.5 952.3 H2691.5 L2691.5 952.3 H2689.5 L2689.5 952.3 H2687.5 L2687.5 952.3 H2685.5 L2685.5 952.3 H2683.5 L2683.5 952.3 H2681.5 L2681.5 952.3 H2679.5 L2679.5 952.3 H2677.5 L2677.5 952.3 H2675.5 L2675.5 952.3 H2673.5 L2673.5 952.3 H2671.5 L2671.5 952.3 H2669.5 L2669.5 952.3 H2667.5 L2667.5 952.2 H2665.5 L2665.5 952.3 H2663.5 L2663.5 952.2 H2661.5 L2661.5 952.2 H2659.5 L2659.5 952.3 H2657.5 L2657.5 952.3 H2655.5 L2655.5 952.2 H2653.5 L2653.5 952.6 H2651.5 L2651.5 953.1 H2649.5 L2649.5 953.5 H2647.5 L2647.5 954.4 H2645.5 L2645.5 954.4 H2643.5 L2643.5 955.2 H2641.5 L2641.5 955.7 H2639.5 L2639.5 956.6 H2637.5 L2637.5 957.2 H2635.5 L2635.5 957.6 H2633.5 L2633.5 958.1 H2631.5 L2631.5 957.6 H2629.5 L2629.5 959.3 H2627.5 L2627.5 958.8 H2625.5 L2625.5 959.0 H2623.5 L2623.5 959.9 H2621.5 L2621.5 960.6 H2619.5 L2619.5 961.7 H2617.5 L2617.5 962.3 H2615.5 L2615.5 962.4 H2613.5 L2613.5 963.7 H2611.5 L2611.5 962.0 H2609.5 L2609.5 962.4 H2607.5 L2607.5 964.6 H2605.5 L2605.5 964.5 H2603.5 L2603.5 965.4 H2601.5 L2601.5 964.6 H2599.5 L2599.5 964.5 H2597.5 L2597.5 963.8 H2595.5 L2595.5 964.8 H2593.5 L2593.5 965.1 H2591.5 L2591.5 964.0 H2589.5 L2589.5 963.5 H2587.5 L2587.5 963.8 H2585.5 L2585.5 963.2 H2583.5 L2583.5 964.2 H2581.5 L2581.5 965.1 H2579.5 L2579.5 966.0 H2577.5 L2577.5 965.8 H2575.5 L2575.5 967.0 H2573.5 L2573.5 966.6 H2571.5 L2571.5 964.9 H2569.5 L2569.5 966.2 H2567.5 L2567.5 966.0 H2565.5 L2565.5 965.6 H2563.5 L2563.5 965.2 H2561.5 L2561.5 965.5 H2559.5 L2559.5 965.8 H2557.5 L2557.5 964.7 H2555.5 L2555.5 964.9 H2553.5 L2553.5 966.9 H2551.5 L2551.5 966.8 H2549.5 L2549.5 966.7 H2547.5 L2547.5 966.1 H2545.5 L2545.5 964.7 H2543.5 L2543.5 965.7 H2541.5 L2541.5 965.8 H2539.5 L2539.5 966.9 H2537.5 L2537.5 965.4 H2535.5 L2535.5 965.3 H2533.5 L2533.5 966.5 H2531.5 L2531.5 967.1 H2529.5 L2529.5 967.8 H2527.5 L2527.5 969.4 H2525.5 L2525.5 970.9 H2523.5 L2523.5 971.6 H2521.5 L2521.5 974.6 H2519.5 Z" fill="#fed9a9"/>
<rect x="1291" y="126" width="1560" height="34" fill="#2c2c2c"/><rect x="1291" y="126" width="409.5" height="34" fill="url(#rg)"/><rect x="1291" y="160" width="409.5" height="2" fill="#000"/><rect x="1700.5" y="160" width="1200" height="1.500" fill="#1c1c1c"/><rect x="1700.5" y="161.500" width="1200" height="1" fill="#383838"/><rect x="1291" y="162" width="1560" height="34" fill="#2a2a2a"/><rect x="1291" y="196" width="1560" height="3" fill="#000"/><path d="M1393.8 132 V196 M1496.0 132 V196 M1598.2 132 V196 M1700.5 132 V196 M1802.8 132 V196 M1905.0 132 V196 M2007.2 132 V196 M2109.5 132 V196 M2211.8 132 V196 M2314.0 132 V196 M2416.2 132 V196 M2518.5 132 V196 M2620.8 132 V196 M2723.0 132 V196 M2825.2 132 V196 " stroke="#6e6e6e" stroke-width="1.600" fill="none"/><path d="M1317.1 184.500 V196 M1342.6 184.500 V196 M1368.2 184.500 V196 M1419.3 184.500 V196 M1444.9 184.500 V196 M1470.4 184.500 V196 M1521.6 184.500 V196 M1547.1 184.500 V196 M1572.7 184.500 V196 M1623.8 184.500 V196 M1649.4 184.500 V196 M1674.9 184.500 V196 M1726.1 184.500 V196 M1751.6 184.500 V196 M1777.2 184.500 V196 M1828.3 184.500 V196 M1853.9 184.500 V196 M1879.4 184.500 V196 M1930.6 184.500 V196 M1956.1 184.500 V196 M1981.7 184.500 V196 M2032.8 184.500 V196 M2058.4 184.500 V196 M2083.9 184.500 V196 M2135.1 184.500 V196 M2160.6 184.500 V196 M2186.2 184.500 V196 M2237.3 184.500 V196 M2262.9 184.500 V196 M2288.4 184.500 V196 M2339.6 184.500 V196 M2365.1 184.500 V196 M2390.7 184.500 V196 M2441.8 184.500 V196 M2467.4 184.500 V196 M2492.9 184.500 V196 M2544.1 184.500 V196 M2569.6 184.500 V196 M2595.2 184.500 V196 M2646.3 184.500 V196 M2671.9 184.500 V196 M2697.4 184.500 V196 M2748.6 184.500 V196 M2774.1 184.500 V196 M2799.7 184.500 V196 M2850.8 184.500 V196 M2876.4 184.500 V196 M2901.9 184.500 V196 " stroke="#666" stroke-width="1.600" fill="none"/><rect x="1291" y="126" width="411.0" height="2" fill="#000"/><rect x="1700.0" y="126" width="2" height="36" fill="#000"/><g font-size="25" fill="#b8b8b8" stroke="#b8b8b8" stroke-width=".3"><text x="1299.0" y="149.800">1</text><text x="1401.2" y="149.800">2</text><text x="1503.5" y="149.800">3</text><text x="1605.8" y="149.800">4</text><text x="1708.0" y="149.800">5</text><text x="1810.2" y="149.800">6</text><text x="1912.5" y="149.800">7</text><text x="2014.8" y="149.800">8</text><text x="2117.0" y="149.800">9</text><text x="2219.2" y="149.800">10</text><text x="2321.5" y="149.800">11</text><text x="2423.8" y="149.800">12</text><text x="2526.0" y="149.800">13</text><text x="2628.2" y="149.800">14</text><text x="2730.5" y="149.800">15</text><text x="2832.8" y="149.800">16</text></g><rect x="2689" y="139" width="136" height="40" rx="9" fill="#2a2a2a" stroke="#1b1b1b" stroke-width="2.200"/>
<rect x="2698" y="156" width="118" height="8.500" rx="4.200" fill="#1c1c1c"/>
<path d="M2706.800 150 V153.500 M2725.300 150 V153.500 M2745 150 V153.500 M2775 150 V153.500 M2807 150 V153.500" stroke="#6a6a6a" stroke-width="1.600"/>
<path d="M2707.700 166 V156.400 L2716.800 147.800 L2726 156.400 V166 Q2726 167.900 2724 167.900 H2709.700 Q2707.700 167.900 2707.700 166 Z" fill="#5c5c5c" stroke="#a2a2a2" stroke-width="1.100"/><path d="M2716.800 149.500 V167" stroke="#b4b4b4" stroke-width="1.200"/>
<path d="M1687.5 175 Q1687.5 172 1690.5 172 H1710.5 Q1713.5 172 1713.5 175 V183.200 L1700.5 196 L1687.5 183.200 Z" fill="url(#phg)" stroke="#0a0a0a" stroke-width="4.500" paint-order="stroke" stroke-linejoin="round"/>
<path d="M1688.2 175.200 Q1688.2 172.700 1690.7 172.700 H1710.3 Q1712.8 172.700 1712.8 175.200 V182.900 L1700.5 195 L1688.2 182.900 Z" fill="none" stroke="#d0d0d0" stroke-width="1.400" stroke-linejoin="round"/>
<rect x="1699.6" y="172.500" width="2" height="812" fill="#ececec"/>
</svg>
</div></div>
<div id="sc">
<div class="body"></div>
<div id="pad"></div>
<svg class="abs" style="left:0;top:0" width="2228" height="786" viewBox="620 1005 2228 786" font-family="Liberation Sans, sans-serif">
<defs>
<linearGradient id="ring" x1="0" x2="0" y1="0" y2="1"><stop offset="0" stop-color="#a9a9a9"/><stop offset="1" stop-color="#c6c6c6"/></linearGradient>
<linearGradient id="kn" x1="0" x2="0" y1="0" y2="1"><stop offset="0" stop-color="#5a5a5a"/><stop offset=".12" stop-color="#4b4b4b"/><stop offset=".8" stop-color="#434343"/><stop offset="1" stop-color="#2c2c2c"/></linearGradient>
<linearGradient id="knr" x1="0" x2="0" y1="0" y2="1"><stop offset="0" stop-color="#8a8a8a"/><stop offset=".3" stop-color="#555" stop-opacity=".3"/><stop offset="1" stop-color="#1a1a1a"/></linearGradient>
<filter id="blur" x="-20%" y="-20%" width="140%" height="140%"><feGaussianBlur stdDeviation="4"/></filter>
</defs>
<path d="M1127 1156 V1747 M1547 1156 V1747 M1967 1156 V1747 M713 1451.600 H2381" stroke="#060708" stroke-width="2.200" fill="none"/>
<rect x="1842" y="1258" width="415" height="293" rx="30" fill="#2f4042" opacity=".5"/>
<g font-size="28.500" fill="#c6c6c6"><text x="879.7" y="1309.9" textLength="76.6" lengthAdjust="spacingAndGlyphs">BASIC</text><text x="1277.7" y="1309.9" textLength="118.6" lengthAdjust="spacingAndGlyphs">THINNER</text><text x="1692.7" y="1309.9" textLength="130.6" lengthAdjust="spacingAndGlyphs">BRIGHTER</text><text x="2125.5" y="1309.9" textLength="104.4" lengthAdjust="spacingAndGlyphs">SPACED</text><text x="832.2" y="1612.3" textLength="170.5" lengthAdjust="spacingAndGlyphs">WARP SPACE</text><text x="1278.8" y="1612.3" textLength="117.3" lengthAdjust="spacingAndGlyphs">FILTERED</text><text x="1678.0" y="1612.3" textLength="158" lengthAdjust="spacingAndGlyphs">PERCUSSIVE</text><text x="2124.8" y="1612.3" textLength="105.5" lengthAdjust="spacingAndGlyphs">NOISIER</text></g>
<g fill="none" stroke="#1eb2e2" stroke-width="4">
<path d="M1842 1316 V1290 A32 32 0 0 1 1874 1258 H1909"/>
<path d="M2188 1258 H2224 A32 32 0 0 1 2256 1290 V1316"/>
<path d="M1842 1492 V1518 A32 32 0 0 0 1874 1550 H1909"/>
<path d="M2188 1550 H2224 A32 32 0 0 0 2256 1518 V1492"/>
</g>
<text x="1410" y="1131.500" font-size="31" fill="#0a0a0a" stroke="#0a0a0a" stroke-width=".3" textLength="272" lengthAdjust="spacingAndGlyphs">TRANSFORM PAD</text>
<text x="2605" y="1179.500" font-size="28" fill="#0a0a0a" stroke="#0a0a0a" stroke-width=".3" text-anchor="middle">DELAY</text>
<text x="2605" y="1482" font-size="28" fill="#0a0a0a" stroke="#0a0a0a" stroke-width=".3" text-anchor="middle">REVERB</text>
<path d="M2560.5 1371.1 A89 89 0 1 1 2649.5 1371.1" fill="none" stroke="url(#ring)" stroke-width="10"/>
<ellipse cx="2605" cy="1378" rx="60" ry="12" fill="#000" opacity=".1" filter="url(#blur)"/>
<circle cx="2605" cy="1297" r="79" fill="#000" opacity=".25" filter="url(#blur)"/>
<circle cx="2605" cy="1294" r="77.500" fill="url(#kn)"/>
<circle cx="2605" cy="1294" r="76.500" fill="none" stroke="url(#knr)" stroke-width="2"/>
<path d="M2558.8 1234.9 L2591.5 1276.7" stroke="#d4d4d4" stroke-width="4.500"/>
<path d="M2560.5 1673.1 A89 89 0 1 1 2649.5 1673.1" fill="none" stroke="url(#ring)" stroke-width="10"/>
<ellipse cx="2605" cy="1680" rx="60" ry="12" fill="#000" opacity=".1" filter="url(#blur)"/>
<circle cx="2605" cy="1599" r="79" fill="#000" opacity=".25" filter="url(#blur)"/>
<circle cx="2605" cy="1596" r="77.500" fill="url(#kn)"/>
<circle cx="2605" cy="1596" r="76.500" fill="none" stroke="url(#knr)" stroke-width="2"/>
<path d="M2542.8 1554.1 L2586.8 1583.7" stroke="#d4d4d4" stroke-width="4.500"/>
</svg>
<div class="hd">
<div class="sb" style="left:25px;width:65px"></div>
<svg class="abs" style="left:44px;top:12px" width="30" height="30" viewBox="0 0 30 30"><defs><linearGradient id="ig" x1="0" x2="0" y1="0" y2="1"><stop offset="0" stop-color="#c2c2c2"/><stop offset=".5" stop-color="#b6b6b6"/><stop offset=".52" stop-color="#a9a9a9"/><stop offset="1" stop-color="#a4a4a4"/></linearGradient></defs><circle cx="15" cy="15" r="13.200" fill="url(#ig)"/><text x="14.500" y="24" text-anchor="middle" font-family="Liberation Serif, serif" font-weight="bold" font-style="italic" font-size="28" fill="#262626">i</text></svg>
<div class="sb" style="left:106px;width:112px">Master</div>
<div class="sb" style="left:234px;width:140px">Compare</div>
<div id="seg"><div class="a">Controls</div><div class="b">EQ</div></div>
</div>
</div>
</div></body></html>
